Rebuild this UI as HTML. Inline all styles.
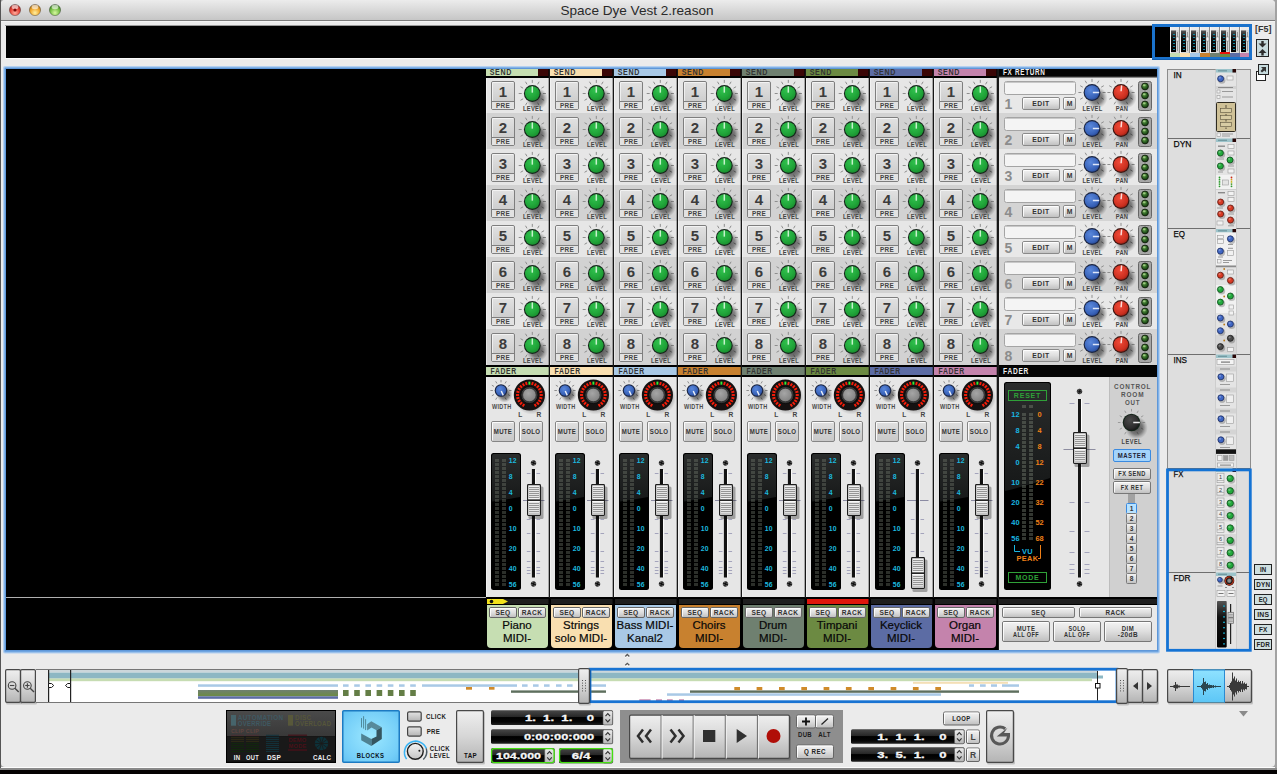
<!DOCTYPE html>
<html lang="en"><head><meta charset="utf-8"><title>Space Dye Vest 2.reason</title>
<style>html,body{margin:0;padding:0;background:#050202;overflow:hidden}svg{display:block}text{font-family:"Liberation Sans", sans-serif;}</style></head><body>
<svg width="1277" height="774" viewBox="0 0 1277 774">

<defs>
<linearGradient id="gTitle" x1="0" y1="0" x2="0" y2="1"><stop offset="0" stop-color="#ececec"/><stop offset="1" stop-color="#c6c6c6"/></linearGradient>
<linearGradient id="gBtn" x1="0" y1="0" x2="0" y2="1"><stop offset="0" stop-color="#f4f4f4"/><stop offset="1" stop-color="#c4c4c4"/></linearGradient>
<linearGradient id="gBtn3" x1="0" y1="0" x2="0" y2="1"><stop offset="0" stop-color="#e2e2e2"/><stop offset="0.7" stop-color="#cecece"/><stop offset="1" stop-color="#c8c8c8"/></linearGradient>
<linearGradient id="gBtn2" x1="0" y1="0" x2="0" y2="1"><stop offset="0" stop-color="#f4f4f4"/><stop offset="0.5" stop-color="#dedede"/><stop offset="1" stop-color="#bebebe"/></linearGradient>
<linearGradient id="gMeter" x1="0" y1="0" x2="0" y2="1"><stop offset="0" stop-color="#2a2c2c"/><stop offset="1" stop-color="#161818"/></linearGradient>
<linearGradient id="gMeterM" x1="0" y1="0" x2="0.25" y2="1"><stop offset="0" stop-color="#2c2c2c"/><stop offset="0.5" stop-color="#1a1a1a"/><stop offset="0.56" stop-color="#000"/><stop offset="1" stop-color="#000"/></linearGradient>
<linearGradient id="gCap" x1="0" y1="0" x2="0" y2="1"><stop offset="0" stop-color="#f8f8f8"/><stop offset="0.45" stop-color="#b8b8b8"/><stop offset="0.5" stop-color="#555"/><stop offset="0.55" stop-color="#f4f4f4"/><stop offset="1" stop-color="#a8a8a8"/></linearGradient>
<radialGradient id="gGreen" cx="0.38" cy="0.3" r="0.8"><stop offset="0" stop-color="#2fc04c"/><stop offset="0.6" stop-color="#21a63a"/><stop offset="1" stop-color="#178a2c"/></radialGradient>
<radialGradient id="gBlue" cx="0.4" cy="0.35" r="0.75"><stop offset="0" stop-color="#5a88dc"/><stop offset="0.7" stop-color="#3862b8"/><stop offset="1" stop-color="#23408a"/></radialGradient>
<radialGradient id="gRed" cx="0.4" cy="0.35" r="0.75"><stop offset="0" stop-color="#f04a38"/><stop offset="0.7" stop-color="#cc3020"/><stop offset="1" stop-color="#8e1c12"/></radialGradient>
<radialGradient id="gDark" cx="0.4" cy="0.35" r="0.75"><stop offset="0" stop-color="#4a4a4a"/><stop offset="0.7" stop-color="#2c2c2c"/><stop offset="1" stop-color="#111"/></radialGradient>
<radialGradient id="gGray" cx="0.42" cy="0.38" r="0.75"><stop offset="0" stop-color="#a6a6a6"/><stop offset="0.75" stop-color="#858585"/><stop offset="1" stop-color="#5a5a5a"/></radialGradient>
<radialGradient id="gShadow" cx="0.5" cy="0.5" r="0.5"><stop offset="0" stop-color="#000" stop-opacity="0.6"/><stop offset="0.55" stop-color="#000" stop-opacity="0.42"/><stop offset="0.8" stop-color="#000" stop-opacity="0.16"/><stop offset="1" stop-color="#000" stop-opacity="0"/></radialGradient>
<radialGradient id="gLed" cx="0.4" cy="0.35" r="0.7"><stop offset="0" stop-color="#6aa052"/><stop offset="0.55" stop-color="#2a6220"/><stop offset="1" stop-color="#10300c"/></radialGradient>
<radialGradient id="gTLr" cx="0.5" cy="0.75" r="0.7"><stop offset="0" stop-color="#ffb0a0"/><stop offset="0.6" stop-color="#e8453a"/><stop offset="1" stop-color="#a82018"/></radialGradient>
<radialGradient id="gTLy" cx="0.5" cy="0.75" r="0.7"><stop offset="0" stop-color="#fff0a0"/><stop offset="0.6" stop-color="#f0a830"/><stop offset="1" stop-color="#b07010"/></radialGradient>
<radialGradient id="gTLg" cx="0.5" cy="0.75" r="0.7"><stop offset="0" stop-color="#d8f8a0"/><stop offset="0.6" stop-color="#78c048"/><stop offset="1" stop-color="#3a8020"/></radialGradient>
<linearGradient id="gBlueBtn" x1="0" y1="0" x2="0" y2="1"><stop offset="0" stop-color="#8fdcff"/><stop offset="1" stop-color="#6ccaf8"/></linearGradient>
<pattern id="pRidge" x="0" y="1" width="2" height="2" patternUnits="userSpaceOnUse"><rect x="0" y="0" width="2" height="1" fill="#969696"/><rect x="0" y="1" width="2" height="1" fill="#e6e6e6"/></pattern>
<linearGradient id="gMini" x1="0" y1="0" x2="0" y2="1"><stop offset="0" stop-color="#555"/><stop offset="0.35" stop-color="#111"/><stop offset="1" stop-color="#000"/></linearGradient>
<g id="ts">
<rect x="0" y="0" width="10" height="26" fill="#d6d6d6"/>
<rect x="0" y="0" width="10" height="3" fill="#ececec"/>
<rect x="0" y="0" width="1" height="26" fill="#f8f8f8"/>
<rect x="9" y="0" width="1" height="26" fill="#8e8e8e"/>
<rect x="1" y="3.5" width="5" height="21.5" fill="url(#gMini)"/>
<rect x="3" y="7" width="2" height="1" fill="#158aa4"/>
<rect x="3" y="10" width="2" height="1" fill="#158aa4"/>
<rect x="3" y="13" width="2" height="1" fill="#158aa4"/>
<rect x="3" y="16" width="2" height="1" fill="#158aa4"/>
<rect x="3" y="19" width="2" height="1" fill="#158aa4"/>
<rect x="3" y="22" width="2" height="1" fill="#158aa4"/>
<rect x="7" y="5" width="1" height="19" fill="#9a9a9a"/>
<rect x="6" y="10" width="3" height="4" fill="#f4f4f4" stroke="#888" stroke-width="0.5"/>
</g>
<g id="kG">
<line x1="-5.30" y1="9.18" x2="-6.80" y2="11.78" stroke="#8e8e8e" stroke-width="1"/>
<line x1="-9.18" y1="5.30" x2="-11.78" y2="6.80" stroke="#8e8e8e" stroke-width="1"/>
<line x1="-10.60" y1="-0.00" x2="-13.60" y2="-0.00" stroke="#8e8e8e" stroke-width="1"/>
<line x1="-9.18" y1="-5.30" x2="-11.78" y2="-6.80" stroke="#8e8e8e" stroke-width="1"/>
<line x1="-5.30" y1="-9.18" x2="-6.80" y2="-11.78" stroke="#8e8e8e" stroke-width="1"/>
<line x1="0.00" y1="-10.60" x2="0.00" y2="-13.60" stroke="#8e8e8e" stroke-width="1"/>
<line x1="5.30" y1="-9.18" x2="6.80" y2="-11.78" stroke="#8e8e8e" stroke-width="1"/>
<line x1="9.18" y1="-5.30" x2="11.78" y2="-6.80" stroke="#8e8e8e" stroke-width="1"/>
<line x1="10.60" y1="-0.00" x2="13.60" y2="-0.00" stroke="#8e8e8e" stroke-width="1"/>
<line x1="9.18" y1="5.30" x2="11.78" y2="6.80" stroke="#8e8e8e" stroke-width="1"/>
<line x1="5.30" y1="9.18" x2="6.80" y2="11.78" stroke="#8e8e8e" stroke-width="1"/>
<circle cx="4.62" cy="5.21" r="10.92" fill="url(#gShadow)"/>
<circle cx="0" cy="0" r="8.4" fill="#15251a"/>
<circle cx="0" cy="0" r="7.30" fill="url(#gGreen)"/>
<line x1="0.00" y1="-0.84" x2="0.00" y2="-7.14" stroke="#d8f8dc" stroke-width="1.5" stroke-opacity="0.9"/>
</g>
<g id="kW">
<line x1="-4.05" y1="7.01" x2="-5.30" y2="9.18" stroke="#8e8e8e" stroke-width="1"/>
<line x1="-7.01" y1="4.05" x2="-9.18" y2="5.30" stroke="#8e8e8e" stroke-width="1"/>
<line x1="-8.10" y1="-0.00" x2="-10.60" y2="-0.00" stroke="#8e8e8e" stroke-width="1"/>
<line x1="-7.01" y1="-4.05" x2="-9.18" y2="-5.30" stroke="#8e8e8e" stroke-width="1"/>
<line x1="-4.05" y1="-7.01" x2="-5.30" y2="-9.18" stroke="#8e8e8e" stroke-width="1"/>
<line x1="0.00" y1="-8.10" x2="0.00" y2="-10.60" stroke="#8e8e8e" stroke-width="1"/>
<line x1="4.05" y1="-7.01" x2="5.30" y2="-9.18" stroke="#8e8e8e" stroke-width="1"/>
<line x1="7.01" y1="-4.05" x2="9.18" y2="-5.30" stroke="#8e8e8e" stroke-width="1"/>
<line x1="8.10" y1="-0.00" x2="10.60" y2="-0.00" stroke="#8e8e8e" stroke-width="1"/>
<line x1="7.01" y1="4.05" x2="9.18" y2="5.30" stroke="#8e8e8e" stroke-width="1"/>
<line x1="4.05" y1="7.01" x2="5.30" y2="9.18" stroke="#8e8e8e" stroke-width="1"/>
<circle cx="3.47" cy="3.91" r="8.19" fill="url(#gShadow)"/>
<circle cx="0" cy="0" r="6.3" fill="#1a2440"/>
<circle cx="0" cy="0" r="5.20" fill="url(#gBlue)"/>
<line x1="0.27" y1="0.57" x2="2.26" y2="4.85" stroke="#fff" stroke-width="1.4" stroke-opacity="0.9"/>
</g>
<g id="cap">
<rect x="1.5" y="2.5" width="15" height="32.5" fill="#000" fill-opacity="0.3" rx="1.5"/>
<rect x="0.6" y="0.6" width="12.8" height="30.8" rx="0.8" fill="#f2f2f2" stroke="#1e1e1e" stroke-width="1.2"/>
<rect x="2" y="3" width="10" height="11.5" fill="url(#pRidge)"/>
<rect x="2" y="18" width="10" height="11" fill="url(#pRidge)"/>
<rect x="1.2" y="14.5" width="11.6" height="3.3" fill="#fbfbfb"/>
<rect x="1" y="15.4" width="12" height="1.5" fill="#0e0e0e"/>
<rect x="1.2" y="28.8" width="11.6" height="2" fill="#c4c4c4"/>
</g>
<g id="scr">
<circle cx="0" cy="0" r="2.4" fill="#6a6a6a" stroke="#333" stroke-width="0.7"/>
<path d="M-2.4 0H2.4M0 -2.4V2.4" stroke="#0c0c0c" stroke-width="1.1" transform="rotate(20 0 0)"/>
</g>
<g id="nb">
<rect x="0.5" y="0.5" width="23" height="28" rx="1.5" fill="url(#gBtn3)" stroke="#7e7e7e"/>
<path d="M1.5 27.5V1.5H22.5" fill="none" stroke="#fff" stroke-opacity="0.6"/>
<rect x="1" y="21" width="22" height="7" fill="#e2e2e2"/>
<line x1="1" y1="20.5" x2="23" y2="20.5" stroke="#7e7e7e"/>
</g>
<g id="pan">
<ellipse cx="2" cy="3" rx="16.5" ry="16.5" fill="url(#gShadow)"/>
<circle cx="0" cy="0" r="15.6" fill="#151111"/>
<line x1="-5.15" y1="8.92" x2="-6.70" y2="11.60" stroke="#f51e0a" stroke-width="1.9"/>
<line x1="-7.28" y1="7.28" x2="-9.48" y2="9.48" stroke="#f51e0a" stroke-width="1.9"/>
<line x1="-8.92" y1="5.15" x2="-11.60" y2="6.70" stroke="#f51e0a" stroke-width="1.9"/>
<line x1="-9.95" y1="2.67" x2="-12.94" y2="3.47" stroke="#f51e0a" stroke-width="1.9"/>
<line x1="-10.30" y1="-0.00" x2="-13.40" y2="-0.00" stroke="#f51e0a" stroke-width="1.9"/>
<line x1="-9.95" y1="-2.67" x2="-12.94" y2="-3.47" stroke="#f51e0a" stroke-width="1.9"/>
<line x1="-8.92" y1="-5.15" x2="-11.60" y2="-6.70" stroke="#f51e0a" stroke-width="1.9"/>
<line x1="-7.28" y1="-7.28" x2="-9.48" y2="-9.48" stroke="#f51e0a" stroke-width="1.9"/>
<line x1="-5.15" y1="-8.92" x2="-6.70" y2="-11.60" stroke="#f51e0a" stroke-width="1.9"/>
<line x1="-2.67" y1="-9.95" x2="-3.47" y2="-12.94" stroke="#f51e0a" stroke-width="1.9"/>
<line x1="0.00" y1="-10.30" x2="0.00" y2="-13.40" stroke="#34ee38" stroke-width="1.9"/>
<line x1="2.67" y1="-9.95" x2="3.47" y2="-12.94" stroke="#f51e0a" stroke-width="1.9"/>
<line x1="5.15" y1="-8.92" x2="6.70" y2="-11.60" stroke="#f51e0a" stroke-width="1.9"/>
<line x1="7.28" y1="-7.28" x2="9.48" y2="-9.48" stroke="#f51e0a" stroke-width="1.9"/>
<line x1="8.92" y1="-5.15" x2="11.60" y2="-6.70" stroke="#f51e0a" stroke-width="1.9"/>
<line x1="9.95" y1="-2.67" x2="12.94" y2="-3.47" stroke="#f51e0a" stroke-width="1.9"/>
<line x1="10.30" y1="-0.00" x2="13.40" y2="-0.00" stroke="#f51e0a" stroke-width="1.9"/>
<line x1="9.95" y1="2.67" x2="12.94" y2="3.47" stroke="#f51e0a" stroke-width="1.9"/>
<line x1="8.92" y1="5.15" x2="11.60" y2="6.70" stroke="#f51e0a" stroke-width="1.9"/>
<line x1="7.28" y1="7.28" x2="9.48" y2="9.48" stroke="#f51e0a" stroke-width="1.9"/>
<line x1="5.15" y1="8.92" x2="6.70" y2="11.60" stroke="#f51e0a" stroke-width="1.9"/>
<circle cx="0" cy="0" r="8.6" fill="#3a3a3a" stroke="#0a0a0a" stroke-width="0.9"/>
<circle cx="0" cy="0" r="6.8" fill="url(#gGray)" stroke="#2a2a2a" stroke-width="0.7"/>
</g>
<g id="mtr">
<rect x="0" y="0" width="30" height="137" rx="2.5" fill="#000"/>
<path d="M1 3Q1 1 3 1H27Q29 1 29 3V44Q16 46.500 1 48.500Z" fill="url(#gMeter)"/>
<rect x="4" y="6" width="11" height="127" fill="url(#pLed)"/>
</g>
<g id="ftk">
<line x1="-6.7" y1="473.5" x2="-3" y2="473.5" stroke="#a4a4bc" stroke-width="1" />
<line x1="3" y1="473.5" x2="6.6" y2="473.5" stroke="#a4a4bc" stroke-width="1" />
<line x1="-10.5" y1="500.5" x2="11" y2="500.5" stroke="#8a8aa2" stroke-width="1" />
<line x1="-6.7" y1="519.5" x2="-3" y2="519.5" stroke="#a4a4bc" stroke-width="1" />
<line x1="3" y1="519.5" x2="6.6" y2="519.5" stroke="#a4a4bc" stroke-width="1" />
<line x1="-6.7" y1="533.5" x2="-3" y2="533.5" stroke="#a4a4bc" stroke-width="1" />
<line x1="3" y1="533.5" x2="6.6" y2="533.5" stroke="#a4a4bc" stroke-width="1" />
<line x1="-6.7" y1="551.5" x2="-3" y2="551.5" stroke="#a4a4bc" stroke-width="1" />
<line x1="3" y1="551.5" x2="6.6" y2="551.5" stroke="#a4a4bc" stroke-width="1" />
<line x1="-6.7" y1="561.5" x2="-3" y2="561.5" stroke="#a4a4bc" stroke-width="1" />
<line x1="3" y1="561.5" x2="6.6" y2="561.5" stroke="#a4a4bc" stroke-width="1" />
<line x1="-6.7" y1="567.5" x2="-3" y2="567.5" stroke="#a4a4bc" stroke-width="1" />
<line x1="3" y1="567.5" x2="6.6" y2="567.5" stroke="#a4a4bc" stroke-width="1" />
<line x1="-6.7" y1="570.5" x2="-3" y2="570.5" stroke="#a4a4bc" stroke-width="1" />
<line x1="3" y1="570.5" x2="6.6" y2="570.5" stroke="#a4a4bc" stroke-width="1" />
<line x1="-6.7" y1="573.5" x2="-3" y2="573.5" stroke="#a4a4bc" stroke-width="1" />
<line x1="3" y1="573.5" x2="6.6" y2="573.5" stroke="#a4a4bc" stroke-width="1" />
<rect x="-1.6" y="469" width="3.2" height="108.5" fill="#121212"/>
<rect x="1.6" y="469.5" width="0.9" height="108" fill="#fff"/>
</g>
<pattern id="pLed" x="4" y="2" width="7" height="4" patternUnits="userSpaceOnUse"><rect x="0" y="0" width="4" height="3" fill="#7a8274" fill-opacity="0.36"/></pattern>
<g id="kB">
<line x1="-5.30" y1="9.18" x2="-6.80" y2="11.78" stroke="#8e8e8e" stroke-width="1"/>
<line x1="-9.18" y1="5.30" x2="-11.78" y2="6.80" stroke="#8e8e8e" stroke-width="1"/>
<line x1="-10.60" y1="-0.00" x2="-13.60" y2="-0.00" stroke="#8e8e8e" stroke-width="1"/>
<line x1="-9.18" y1="-5.30" x2="-11.78" y2="-6.80" stroke="#8e8e8e" stroke-width="1"/>
<line x1="-5.30" y1="-9.18" x2="-6.80" y2="-11.78" stroke="#8e8e8e" stroke-width="1"/>
<line x1="0.00" y1="-10.60" x2="0.00" y2="-13.60" stroke="#8e8e8e" stroke-width="1"/>
<line x1="5.30" y1="-9.18" x2="6.80" y2="-11.78" stroke="#8e8e8e" stroke-width="1"/>
<line x1="9.18" y1="-5.30" x2="11.78" y2="-6.80" stroke="#8e8e8e" stroke-width="1"/>
<line x1="10.60" y1="-0.00" x2="13.60" y2="-0.00" stroke="#8e8e8e" stroke-width="1"/>
<line x1="9.18" y1="5.30" x2="11.78" y2="6.80" stroke="#8e8e8e" stroke-width="1"/>
<line x1="5.30" y1="9.18" x2="6.80" y2="11.78" stroke="#8e8e8e" stroke-width="1"/>
<circle cx="4.62" cy="5.21" r="10.92" fill="url(#gShadow)"/>
<circle cx="0" cy="0" r="8.4" fill="#1a2440"/>
<circle cx="0" cy="0" r="7.30" fill="url(#gBlue)"/>
<line x1="0.84" y1="-0.00" x2="7.14" y2="-0.00" stroke="#f0f4ff" stroke-width="1.5" stroke-opacity="0.9"/>
</g>
<g id="kR">
<line x1="-5.30" y1="9.18" x2="-6.80" y2="11.78" stroke="#8e8e8e" stroke-width="1"/>
<line x1="-9.18" y1="5.30" x2="-11.78" y2="6.80" stroke="#8e8e8e" stroke-width="1"/>
<line x1="-10.60" y1="-0.00" x2="-13.60" y2="-0.00" stroke="#8e8e8e" stroke-width="1"/>
<line x1="-9.18" y1="-5.30" x2="-11.78" y2="-6.80" stroke="#8e8e8e" stroke-width="1"/>
<line x1="-5.30" y1="-9.18" x2="-6.80" y2="-11.78" stroke="#8e8e8e" stroke-width="1"/>
<line x1="0.00" y1="-10.60" x2="0.00" y2="-13.60" stroke="#8e8e8e" stroke-width="1"/>
<line x1="5.30" y1="-9.18" x2="6.80" y2="-11.78" stroke="#8e8e8e" stroke-width="1"/>
<line x1="9.18" y1="-5.30" x2="11.78" y2="-6.80" stroke="#8e8e8e" stroke-width="1"/>
<line x1="10.60" y1="-0.00" x2="13.60" y2="-0.00" stroke="#8e8e8e" stroke-width="1"/>
<line x1="9.18" y1="5.30" x2="11.78" y2="6.80" stroke="#8e8e8e" stroke-width="1"/>
<line x1="5.30" y1="9.18" x2="6.80" y2="11.78" stroke="#8e8e8e" stroke-width="1"/>
<circle cx="4.62" cy="5.21" r="10.92" fill="url(#gShadow)"/>
<circle cx="0" cy="0" r="8.4" fill="#3a1612"/>
<circle cx="0" cy="0" r="7.30" fill="url(#gRed)"/>
<line x1="0.11" y1="-1.26" x2="0.62" y2="-7.11" stroke="#fff0ee" stroke-width="1.5" stroke-opacity="0.9"/>
</g>
<g id="led3">
<rect x="0.5" y="0.5" width="13" height="29" rx="2" fill="#a6a6a6" stroke="#666"/>
<circle cx="7" cy="5.5" r="3.4" fill="url(#gLed)" stroke="#14200e" stroke-width="0.9"/>
<ellipse cx="6.2" cy="4.3" rx="1.5" ry="1" fill="#c8f0a8" fill-opacity="0.55"/>
<circle cx="7" cy="14.5" r="3.4" fill="url(#gLed)" stroke="#14200e" stroke-width="0.9"/>
<ellipse cx="6.2" cy="13.3" rx="1.5" ry="1" fill="#c8f0a8" fill-opacity="0.55"/>
<circle cx="7" cy="23.5" r="3.4" fill="url(#gLed)" stroke="#14200e" stroke-width="0.9"/>
<ellipse cx="6.2" cy="22.3" rx="1.5" ry="1" fill="#c8f0a8" fill-opacity="0.55"/>
</g>
<pattern id="pLedM" x="1022" y="413" width="7" height="4" patternUnits="userSpaceOnUse"><rect x="0" y="0" width="4" height="3" fill="#7a8274" fill-opacity="0.42"/></pattern>
<linearGradient id="gTall" x1="0" y1="0" x2="0" y2="1"><stop offset="0" stop-color="#efefef"/><stop offset="0.5" stop-color="#d6d6d6"/><stop offset="1" stop-color="#b4b4b4"/></linearGradient>
<linearGradient id="gDisp" x1="0" y1="0" x2="0" y2="1"><stop offset="0" stop-color="#484848"/><stop offset="0.46" stop-color="#262626"/><stop offset="0.5" stop-color="#000"/><stop offset="0.8" stop-color="#060606"/><stop offset="1" stop-color="#222"/></linearGradient>
<linearGradient id="gCyan" x1="0" y1="0" x2="0" y2="1"><stop offset="0" stop-color="#8fe2ff"/><stop offset="1" stop-color="#5cc6f6"/></linearGradient>
<linearGradient id="gOlive" x1="0" y1="0" x2="0" y2="1"><stop offset="0" stop-color="#6f8070"/><stop offset="1" stop-color="#6c8a42"/></linearGradient>
<linearGradient id="gDsp" x1="0" y1="0" x2="0" y2="1"><stop offset="0" stop-color="#4a4a4a"/><stop offset="1" stop-color="#383838"/></linearGradient>
<radialGradient id="gBlk" cx="0.5" cy="0.5" r="0.75"><stop offset="0" stop-color="#9ce8ff"/><stop offset="0.7" stop-color="#74cef8"/><stop offset="1" stop-color="#5cbcf0"/></radialGradient>
<linearGradient id="gChk" x1="0" y1="0" x2="0" y2="1"><stop offset="0" stop-color="#e4e4e4"/><stop offset="1" stop-color="#b4b4b4"/></linearGradient>
<linearGradient id="gStep" x1="0" y1="0" x2="0" y2="1"><stop offset="0" stop-color="#ececec"/><stop offset="1" stop-color="#b6b6b6"/></linearGradient></defs>

<rect x="0" y="0" width="1277" height="774" fill="#050202"/>
<rect x="0" y="0" width="1277" height="770" fill="#a2a2a2"/>
<rect x="0" y="0" width="1" height="770" fill="#555"/>
<path d="M1 4Q1 0 5 0H1271Q1275 0 1275 4V763Q1275 767 1271 767H5Q1 767 1 763Z" fill="#ebebeb"/>
<rect x="1" y="767" width="1274" height="1" fill="#fdfdfd"/>
<rect x="0" y="768" width="1277" height="2" fill="#8a8a8a"/>
<path d="M1 4Q1 0 5 0H1271Q1275 0 1275 4V20H1Z" fill="url(#gTitle)"/>
<rect x="1" y="20" width="1274" height="1" fill="#7c7c7c"/>
<rect x="1" y="21" width="1274" height="1" fill="#f4f4f4"/>
<circle cx="15" cy="10" r="5.6" fill="url(#gTLr)" stroke="#00000055" stroke-width="0.9"/>
<ellipse cx="15" cy="7" rx="3.4" ry="2.2" fill="#fff" fill-opacity="0.6"/>
<circle cx="35" cy="10" r="5.6" fill="url(#gTLy)" stroke="#00000055" stroke-width="0.9"/>
<ellipse cx="35" cy="7" rx="3.4" ry="2.2" fill="#fff" fill-opacity="0.6"/>
<circle cx="55" cy="10" r="5.6" fill="url(#gTLg)" stroke="#00000055" stroke-width="0.9"/>
<ellipse cx="55" cy="7" rx="3.4" ry="2.2" fill="#fff" fill-opacity="0.6"/>
<circle cx="15" cy="10" r="1.6" fill="#7a0a08"/>
<text x="637" y="15" font-size="13" fill="#2a2a2a" text-anchor="middle" textLength="153" lengthAdjust="spacingAndGlyphs">Space Dye Vest 2.reason</text>
<rect x="6" y="26" width="1146" height="32" fill="#000"/>
<rect x="5" y="25" width="1148" height="1" fill="#9a9a9a"/>
<rect x="5" y="58" width="1148" height="1" fill="#fafafa"/>
<rect x="1152" y="24" width="100" height="36" fill="#1a72cc"/>
<rect x="1152" y="59" width="100" height="1" fill="#1560b0"/>
<rect x="1155" y="27" width="94" height="30" fill="#000"/>
<use href="#ts" x="1170" y="27"/>
<rect x="1170" y="53" width="10" height="4" fill="#c6deb2"/>
<use href="#ts" x="1180" y="27"/>
<rect x="1180" y="53" width="10" height="4" fill="#f9dfb0"/>
<use href="#ts" x="1190" y="27"/>
<rect x="1190" y="53" width="10" height="4" fill="#a9c9e6"/>
<use href="#ts" x="1200" y="27"/>
<rect x="1200" y="53" width="10" height="4" fill="#c8812f"/>
<use href="#ts" x="1210" y="27"/>
<rect x="1210" y="53" width="10" height="4" fill="#6f8070"/>
<use href="#ts" x="1220" y="27"/>
<rect x="1220" y="53" width="10" height="4" fill="#6c8a42"/>
<use href="#ts" x="1230" y="27"/>
<rect x="1230" y="53" width="10" height="4" fill="#5c6ca4"/>
<use href="#ts" x="1240" y="27"/>
<rect x="1240" y="53" width="9" height="4" fill="#c483ac"/>
<rect x="1220" y="52" width="10" height="2" fill="#e8140a"/>
<rect x="1249" y="27" width="3" height="30" fill="#1a72cc"/>
<text x="1263.2" y="32.2" font-size="9.6" fill="#333" text-anchor="middle" font-weight="bold" letter-spacing="0" textLength="16.5" lengthAdjust="spacingAndGlyphs">[F5]</text>
<rect x="1256.5" y="39.5" width="12" height="17" fill="#c6dadd" stroke="#222"/>
<path d="M1261.300 41V43.500H1258.500L1262.500 47.500L1266.500 43.500H1263.700V41Z" fill="#2c2c2c"/>
<path d="M1261.300 55.500V53H1258.500L1262.500 49L1266.500 53H1263.700V55.500Z" fill="#2c2c2c"/>
<rect x="1256.5" y="71.500" width="9" height="9" fill="#fff" stroke="#222"/>
<rect x="1258.500" y="64.500" width="10" height="10" fill="#c6dadd" stroke="#222"/>
<path d="M1261 67H1266V72L1264.400 70.400L1262 72.500L1260.500 71L1262.700 68.700Z" fill="#333"/>
<rect x="3" y="66" width="1157" height="587.500" rx="2" fill="#b4d0f0"/>
<rect x="4" y="67" width="1155" height="585.500" rx="1.5" fill="#82b2e6"/>
<rect x="5" y="68" width="1153" height="583.5" fill="#5e97d9"/>
<rect x="6" y="69" width="1151" height="581" fill="#000"/>
<rect x="6" y="597" width="480" height="1" fill="#b0b0b0"/>
<rect x="486" y="69" width="63" height="7" fill="#c6deb2"/>
<rect x="538" y="69" width="10" height="7" fill="#3a0606"/>
<rect x="548" y="69" width="1" height="7" fill="#1a0000"/>
<text x="489.7" y="75.1" font-size="8.2" fill="#333" font-weight="bold" letter-spacing="0.8" textLength="22.5" lengthAdjust="spacingAndGlyphs">SEND</text>
<rect x="486" y="77" width="63" height="36" fill="#e6e6e6"/>
<use href="#nb" x="491" y="81"/>
<text x="502.8" y="97" font-size="15" fill="#3c3c3c" text-anchor="middle" font-weight="bold">1</text>
<text x="503" y="107.9" font-size="6.6" fill="#444" text-anchor="middle" font-weight="bold" letter-spacing="0.3" textLength="14" lengthAdjust="spacingAndGlyphs">PRE</text>
<use href="#kG" x="532.3" y="93.5"/>
<text x="533" y="110.8" font-size="6.8" fill="#444" text-anchor="middle" font-weight="bold" letter-spacing="0.3" textLength="20" lengthAdjust="spacingAndGlyphs">LEVEL</text>
<rect x="486" y="113" width="63" height="36" fill="#d2d2d2"/>
<use href="#nb" x="491" y="117"/>
<text x="502.8" y="133" font-size="15" fill="#3c3c3c" text-anchor="middle" font-weight="bold">2</text>
<text x="503" y="143.9" font-size="6.6" fill="#444" text-anchor="middle" font-weight="bold" letter-spacing="0.3" textLength="14" lengthAdjust="spacingAndGlyphs">PRE</text>
<use href="#kG" x="532.3" y="129.5"/>
<text x="533" y="146.8" font-size="6.8" fill="#444" text-anchor="middle" font-weight="bold" letter-spacing="0.3" textLength="20" lengthAdjust="spacingAndGlyphs">LEVEL</text>
<rect x="486" y="149" width="63" height="36" fill="#e6e6e6"/>
<use href="#nb" x="491" y="153"/>
<text x="502.8" y="169" font-size="15" fill="#3c3c3c" text-anchor="middle" font-weight="bold">3</text>
<text x="503" y="179.9" font-size="6.6" fill="#444" text-anchor="middle" font-weight="bold" letter-spacing="0.3" textLength="14" lengthAdjust="spacingAndGlyphs">PRE</text>
<use href="#kG" x="532.3" y="165.5"/>
<text x="533" y="182.8" font-size="6.8" fill="#444" text-anchor="middle" font-weight="bold" letter-spacing="0.3" textLength="20" lengthAdjust="spacingAndGlyphs">LEVEL</text>
<rect x="486" y="185" width="63" height="36" fill="#d2d2d2"/>
<use href="#nb" x="491" y="189"/>
<text x="502.8" y="205" font-size="15" fill="#3c3c3c" text-anchor="middle" font-weight="bold">4</text>
<text x="503" y="215.9" font-size="6.6" fill="#444" text-anchor="middle" font-weight="bold" letter-spacing="0.3" textLength="14" lengthAdjust="spacingAndGlyphs">PRE</text>
<use href="#kG" x="532.3" y="201.5"/>
<text x="533" y="218.8" font-size="6.8" fill="#444" text-anchor="middle" font-weight="bold" letter-spacing="0.3" textLength="20" lengthAdjust="spacingAndGlyphs">LEVEL</text>
<rect x="486" y="221" width="63" height="36" fill="#e6e6e6"/>
<use href="#nb" x="491" y="225"/>
<text x="502.8" y="241" font-size="15" fill="#3c3c3c" text-anchor="middle" font-weight="bold">5</text>
<text x="503" y="251.9" font-size="6.6" fill="#444" text-anchor="middle" font-weight="bold" letter-spacing="0.3" textLength="14" lengthAdjust="spacingAndGlyphs">PRE</text>
<use href="#kG" x="532.3" y="237.5"/>
<text x="533" y="254.8" font-size="6.8" fill="#444" text-anchor="middle" font-weight="bold" letter-spacing="0.3" textLength="20" lengthAdjust="spacingAndGlyphs">LEVEL</text>
<rect x="486" y="257" width="63" height="36" fill="#d2d2d2"/>
<use href="#nb" x="491" y="261"/>
<text x="502.8" y="277" font-size="15" fill="#3c3c3c" text-anchor="middle" font-weight="bold">6</text>
<text x="503" y="287.9" font-size="6.6" fill="#444" text-anchor="middle" font-weight="bold" letter-spacing="0.3" textLength="14" lengthAdjust="spacingAndGlyphs">PRE</text>
<use href="#kG" x="532.3" y="273.5"/>
<text x="533" y="290.8" font-size="6.8" fill="#444" text-anchor="middle" font-weight="bold" letter-spacing="0.3" textLength="20" lengthAdjust="spacingAndGlyphs">LEVEL</text>
<rect x="486" y="293" width="63" height="36" fill="#e6e6e6"/>
<use href="#nb" x="491" y="297"/>
<text x="502.8" y="313" font-size="15" fill="#3c3c3c" text-anchor="middle" font-weight="bold">7</text>
<text x="503" y="323.9" font-size="6.6" fill="#444" text-anchor="middle" font-weight="bold" letter-spacing="0.3" textLength="14" lengthAdjust="spacingAndGlyphs">PRE</text>
<use href="#kG" x="532.3" y="309.5"/>
<text x="533" y="326.8" font-size="6.8" fill="#444" text-anchor="middle" font-weight="bold" letter-spacing="0.3" textLength="20" lengthAdjust="spacingAndGlyphs">LEVEL</text>
<rect x="486" y="329" width="63" height="36" fill="#d2d2d2"/>
<use href="#nb" x="491" y="333"/>
<text x="502.8" y="349" font-size="15" fill="#3c3c3c" text-anchor="middle" font-weight="bold">8</text>
<text x="503" y="359.9" font-size="6.6" fill="#444" text-anchor="middle" font-weight="bold" letter-spacing="0.3" textLength="14" lengthAdjust="spacingAndGlyphs">PRE</text>
<use href="#kG" x="532.3" y="345.5"/>
<text x="533" y="362.8" font-size="6.8" fill="#444" text-anchor="middle" font-weight="bold" letter-spacing="0.3" textLength="20" lengthAdjust="spacingAndGlyphs">LEVEL</text>
<rect x="486" y="76" width="63" height="2" fill="#000"/>
<rect x="486" y="365" width="63" height="2" fill="#000"/>
<rect x="486" y="367" width="63" height="8" fill="#c6deb2"/>
<text x="490.5" y="374.1" font-size="8.3" fill="#333" font-weight="bold" letter-spacing="0.8" textLength="26.4" lengthAdjust="spacingAndGlyphs">FADER</text>
<rect x="486" y="377" width="63" height="220" fill="#e6e6e6"/>
<use href="#kW" x="501" y="390.5"/>
<text x="501.7" y="409" font-size="6.6" fill="#4a4a4a" text-anchor="middle" font-weight="bold" letter-spacing="0.3" textLength="19.4" lengthAdjust="spacingAndGlyphs">WIDTH</text>
<use href="#pan" x="529.4" y="395"/>
<text x="520.3" y="416.7" font-size="6.6" fill="#444" text-anchor="middle" font-weight="bold">L</text>
<text x="539" y="416.7" font-size="6.6" fill="#444" text-anchor="middle" font-weight="bold">R</text>
<rect x="491.5" y="421.5" width="23" height="20" rx="1.5" fill="url(#gBtn3)" stroke="#858585"/>
<path d="M492.5 440.5V422.5H513.5" fill="none" stroke="#fff" stroke-opacity="0.85"/>
<text x="503.0" y="433.95" font-size="6.8" fill="#333" text-anchor="middle" font-weight="bold" letter-spacing="0.3" textLength="18.3" lengthAdjust="spacingAndGlyphs">MUTE</text>
<rect x="519.5" y="421.5" width="23" height="20" rx="1.5" fill="url(#gBtn3)" stroke="#858585"/>
<path d="M520.5 440.5V422.5H541.5" fill="none" stroke="#fff" stroke-opacity="0.85"/>
<text x="531.0" y="433.95" font-size="6.8" fill="#333" text-anchor="middle" font-weight="bold" letter-spacing="0.3" textLength="18.3" lengthAdjust="spacingAndGlyphs">SOLO</text>
<use href="#mtr" x="491" y="453"/>
<text x="508.7" y="463.0" font-size="6.9" fill="#1cb8de" font-weight="bold" letter-spacing="0.2">12</text>
<text x="508.7" y="479.0" font-size="6.9" fill="#1cb8de" font-weight="bold" letter-spacing="0.2">8</text>
<text x="508.7" y="495.0" font-size="6.9" fill="#1cb8de" font-weight="bold" letter-spacing="0.2">4</text>
<text x="508.7" y="511.2" font-size="6.9" fill="#1cb8de" font-weight="bold" letter-spacing="0.2">0</text>
<text x="508.7" y="530.8" font-size="6.9" fill="#1cb8de" font-weight="bold" letter-spacing="0.2">10</text>
<text x="508.7" y="551.3" font-size="6.9" fill="#1cb8de" font-weight="bold" letter-spacing="0.2">20</text>
<text x="508.7" y="571.1" font-size="6.9" fill="#1cb8de" font-weight="bold" letter-spacing="0.2">40</text>
<text x="508.7" y="587.0" font-size="6.9" fill="#1cb8de" font-weight="bold" letter-spacing="0.2">56</text>
<use href="#ftk" x="533.5" y="0"/>
<use href="#scr" x="533.5" y="463"/>
<use href="#scr" x="533.5" y="584"/>
<use href="#cap" x="527" y="484"/>
<rect x="487" y="599" width="61.5" height="5" fill="#1e1e1e"/>
<path d="M487 605H548V644Q548 648 544 648H491Q487 648 487 644Z" fill="#c6deb2"/>
<rect x="489.5" y="607.5" width="27" height="10" rx="1.5" fill="url(#gBtn2)" stroke="#666"/>
<path d="M490.5 616.5V608.5H515.5" fill="none" stroke="#fff" stroke-opacity="0.85"/>
<text x="503.0" y="614.88" font-size="6.6" fill="#333" text-anchor="middle" font-weight="bold" letter-spacing="0.4">SEQ</text>
<rect x="518.5" y="607.5" width="27" height="10" rx="1.5" fill="url(#gBtn2)" stroke="#666"/>
<path d="M519.5 616.5V608.5H544.5" fill="none" stroke="#fff" stroke-opacity="0.85"/>
<text x="532.0" y="614.88" font-size="6.6" fill="#333" text-anchor="middle" font-weight="bold" letter-spacing="0.4">RACK</text>
<text x="517" y="629.4" font-size="11.5" fill="#080808" text-anchor="middle" stroke="#080808" stroke-width="0.2">Piano</text>
<text x="517" y="642.2" font-size="11.5" fill="#080808" text-anchor="middle" stroke="#080808" stroke-width="0.2">MIDI-</text>
<rect x="548.7" y="69" width="1.3" height="529" fill="#161616"/>
<rect x="486" y="78" width="0.8" height="287" fill="#fff" fill-opacity="0.55"/>
<rect x="486" y="377" width="0.8" height="220" fill="#fff" fill-opacity="0.55"/>
<rect x="550" y="69" width="63" height="7" fill="#f9dfb0"/>
<rect x="602" y="69" width="10" height="7" fill="#3a0606"/>
<rect x="612" y="69" width="1" height="7" fill="#1a0000"/>
<text x="553.7" y="75.1" font-size="8.2" fill="#333" font-weight="bold" letter-spacing="0.8" textLength="22.5" lengthAdjust="spacingAndGlyphs">SEND</text>
<rect x="550" y="77" width="63" height="36" fill="#e6e6e6"/>
<use href="#nb" x="555" y="81"/>
<text x="566.8" y="97" font-size="15" fill="#3c3c3c" text-anchor="middle" font-weight="bold">1</text>
<text x="567" y="107.9" font-size="6.6" fill="#444" text-anchor="middle" font-weight="bold" letter-spacing="0.3" textLength="14" lengthAdjust="spacingAndGlyphs">PRE</text>
<use href="#kG" x="596.3" y="93.5"/>
<text x="597" y="110.8" font-size="6.8" fill="#444" text-anchor="middle" font-weight="bold" letter-spacing="0.3" textLength="20" lengthAdjust="spacingAndGlyphs">LEVEL</text>
<rect x="550" y="113" width="63" height="36" fill="#d2d2d2"/>
<use href="#nb" x="555" y="117"/>
<text x="566.8" y="133" font-size="15" fill="#3c3c3c" text-anchor="middle" font-weight="bold">2</text>
<text x="567" y="143.9" font-size="6.6" fill="#444" text-anchor="middle" font-weight="bold" letter-spacing="0.3" textLength="14" lengthAdjust="spacingAndGlyphs">PRE</text>
<use href="#kG" x="596.3" y="129.5"/>
<text x="597" y="146.8" font-size="6.8" fill="#444" text-anchor="middle" font-weight="bold" letter-spacing="0.3" textLength="20" lengthAdjust="spacingAndGlyphs">LEVEL</text>
<rect x="550" y="149" width="63" height="36" fill="#e6e6e6"/>
<use href="#nb" x="555" y="153"/>
<text x="566.8" y="169" font-size="15" fill="#3c3c3c" text-anchor="middle" font-weight="bold">3</text>
<text x="567" y="179.9" font-size="6.6" fill="#444" text-anchor="middle" font-weight="bold" letter-spacing="0.3" textLength="14" lengthAdjust="spacingAndGlyphs">PRE</text>
<use href="#kG" x="596.3" y="165.5"/>
<text x="597" y="182.8" font-size="6.8" fill="#444" text-anchor="middle" font-weight="bold" letter-spacing="0.3" textLength="20" lengthAdjust="spacingAndGlyphs">LEVEL</text>
<rect x="550" y="185" width="63" height="36" fill="#d2d2d2"/>
<use href="#nb" x="555" y="189"/>
<text x="566.8" y="205" font-size="15" fill="#3c3c3c" text-anchor="middle" font-weight="bold">4</text>
<text x="567" y="215.9" font-size="6.6" fill="#444" text-anchor="middle" font-weight="bold" letter-spacing="0.3" textLength="14" lengthAdjust="spacingAndGlyphs">PRE</text>
<use href="#kG" x="596.3" y="201.5"/>
<text x="597" y="218.8" font-size="6.8" fill="#444" text-anchor="middle" font-weight="bold" letter-spacing="0.3" textLength="20" lengthAdjust="spacingAndGlyphs">LEVEL</text>
<rect x="550" y="221" width="63" height="36" fill="#e6e6e6"/>
<use href="#nb" x="555" y="225"/>
<text x="566.8" y="241" font-size="15" fill="#3c3c3c" text-anchor="middle" font-weight="bold">5</text>
<text x="567" y="251.9" font-size="6.6" fill="#444" text-anchor="middle" font-weight="bold" letter-spacing="0.3" textLength="14" lengthAdjust="spacingAndGlyphs">PRE</text>
<use href="#kG" x="596.3" y="237.5"/>
<text x="597" y="254.8" font-size="6.8" fill="#444" text-anchor="middle" font-weight="bold" letter-spacing="0.3" textLength="20" lengthAdjust="spacingAndGlyphs">LEVEL</text>
<rect x="550" y="257" width="63" height="36" fill="#d2d2d2"/>
<use href="#nb" x="555" y="261"/>
<text x="566.8" y="277" font-size="15" fill="#3c3c3c" text-anchor="middle" font-weight="bold">6</text>
<text x="567" y="287.9" font-size="6.6" fill="#444" text-anchor="middle" font-weight="bold" letter-spacing="0.3" textLength="14" lengthAdjust="spacingAndGlyphs">PRE</text>
<use href="#kG" x="596.3" y="273.5"/>
<text x="597" y="290.8" font-size="6.8" fill="#444" text-anchor="middle" font-weight="bold" letter-spacing="0.3" textLength="20" lengthAdjust="spacingAndGlyphs">LEVEL</text>
<rect x="550" y="293" width="63" height="36" fill="#e6e6e6"/>
<use href="#nb" x="555" y="297"/>
<text x="566.8" y="313" font-size="15" fill="#3c3c3c" text-anchor="middle" font-weight="bold">7</text>
<text x="567" y="323.9" font-size="6.6" fill="#444" text-anchor="middle" font-weight="bold" letter-spacing="0.3" textLength="14" lengthAdjust="spacingAndGlyphs">PRE</text>
<use href="#kG" x="596.3" y="309.5"/>
<text x="597" y="326.8" font-size="6.8" fill="#444" text-anchor="middle" font-weight="bold" letter-spacing="0.3" textLength="20" lengthAdjust="spacingAndGlyphs">LEVEL</text>
<rect x="550" y="329" width="63" height="36" fill="#d2d2d2"/>
<use href="#nb" x="555" y="333"/>
<text x="566.8" y="349" font-size="15" fill="#3c3c3c" text-anchor="middle" font-weight="bold">8</text>
<text x="567" y="359.9" font-size="6.6" fill="#444" text-anchor="middle" font-weight="bold" letter-spacing="0.3" textLength="14" lengthAdjust="spacingAndGlyphs">PRE</text>
<use href="#kG" x="596.3" y="345.5"/>
<text x="597" y="362.8" font-size="6.8" fill="#444" text-anchor="middle" font-weight="bold" letter-spacing="0.3" textLength="20" lengthAdjust="spacingAndGlyphs">LEVEL</text>
<rect x="550" y="76" width="63" height="2" fill="#000"/>
<rect x="550" y="365" width="63" height="2" fill="#000"/>
<rect x="550" y="367" width="63" height="8" fill="#f9dfb0"/>
<text x="554.5" y="374.1" font-size="8.3" fill="#333" font-weight="bold" letter-spacing="0.8" textLength="26.4" lengthAdjust="spacingAndGlyphs">FADER</text>
<rect x="550" y="377" width="63" height="220" fill="#e6e6e6"/>
<use href="#kW" x="565" y="390.5"/>
<text x="565.7" y="409" font-size="6.6" fill="#4a4a4a" text-anchor="middle" font-weight="bold" letter-spacing="0.3" textLength="19.4" lengthAdjust="spacingAndGlyphs">WIDTH</text>
<use href="#pan" x="593.4" y="395"/>
<text x="584.3" y="416.7" font-size="6.6" fill="#444" text-anchor="middle" font-weight="bold">L</text>
<text x="603" y="416.7" font-size="6.6" fill="#444" text-anchor="middle" font-weight="bold">R</text>
<rect x="555.5" y="421.5" width="23" height="20" rx="1.5" fill="url(#gBtn3)" stroke="#858585"/>
<path d="M556.5 440.5V422.5H577.5" fill="none" stroke="#fff" stroke-opacity="0.85"/>
<text x="567.0" y="433.95" font-size="6.8" fill="#333" text-anchor="middle" font-weight="bold" letter-spacing="0.3" textLength="18.3" lengthAdjust="spacingAndGlyphs">MUTE</text>
<rect x="583.5" y="421.5" width="23" height="20" rx="1.5" fill="url(#gBtn3)" stroke="#858585"/>
<path d="M584.5 440.5V422.5H605.5" fill="none" stroke="#fff" stroke-opacity="0.85"/>
<text x="595.0" y="433.95" font-size="6.8" fill="#333" text-anchor="middle" font-weight="bold" letter-spacing="0.3" textLength="18.3" lengthAdjust="spacingAndGlyphs">SOLO</text>
<use href="#mtr" x="555" y="453"/>
<text x="572.7" y="463.0" font-size="6.9" fill="#1cb8de" font-weight="bold" letter-spacing="0.2">12</text>
<text x="572.7" y="479.0" font-size="6.9" fill="#1cb8de" font-weight="bold" letter-spacing="0.2">8</text>
<text x="572.7" y="495.0" font-size="6.9" fill="#1cb8de" font-weight="bold" letter-spacing="0.2">4</text>
<text x="572.7" y="511.2" font-size="6.9" fill="#1cb8de" font-weight="bold" letter-spacing="0.2">0</text>
<text x="572.7" y="530.8" font-size="6.9" fill="#1cb8de" font-weight="bold" letter-spacing="0.2">10</text>
<text x="572.7" y="551.3" font-size="6.9" fill="#1cb8de" font-weight="bold" letter-spacing="0.2">20</text>
<text x="572.7" y="571.1" font-size="6.9" fill="#1cb8de" font-weight="bold" letter-spacing="0.2">40</text>
<text x="572.7" y="587.0" font-size="6.9" fill="#1cb8de" font-weight="bold" letter-spacing="0.2">56</text>
<use href="#ftk" x="597.5" y="0"/>
<use href="#scr" x="597.5" y="463"/>
<use href="#scr" x="597.5" y="584"/>
<use href="#cap" x="591" y="484"/>
<rect x="551" y="599" width="61.5" height="5" fill="#1e1e1e"/>
<path d="M551 605H612V644Q612 648 608 648H555Q551 648 551 644Z" fill="#f9dfb0"/>
<rect x="553.5" y="607.5" width="27" height="10" rx="1.5" fill="url(#gBtn2)" stroke="#666"/>
<path d="M554.5 616.5V608.5H579.5" fill="none" stroke="#fff" stroke-opacity="0.85"/>
<text x="567.0" y="614.88" font-size="6.6" fill="#333" text-anchor="middle" font-weight="bold" letter-spacing="0.4">SEQ</text>
<rect x="582.5" y="607.5" width="27" height="10" rx="1.5" fill="url(#gBtn2)" stroke="#666"/>
<path d="M583.5 616.5V608.5H608.5" fill="none" stroke="#fff" stroke-opacity="0.85"/>
<text x="596.0" y="614.88" font-size="6.6" fill="#333" text-anchor="middle" font-weight="bold" letter-spacing="0.4">RACK</text>
<text x="581" y="629.4" font-size="11.5" fill="#080808" text-anchor="middle" stroke="#080808" stroke-width="0.2">Strings</text>
<text x="581" y="642.2" font-size="11.5" fill="#080808" text-anchor="middle" stroke="#080808" stroke-width="0.2">solo MIDI-</text>
<rect x="612.7" y="69" width="1.3" height="529" fill="#161616"/>
<rect x="550" y="78" width="0.8" height="287" fill="#fff" fill-opacity="0.55"/>
<rect x="550" y="377" width="0.8" height="220" fill="#fff" fill-opacity="0.55"/>
<rect x="614" y="69" width="63" height="7" fill="#a9c9e6"/>
<rect x="666" y="69" width="10" height="7" fill="#3a0606"/>
<rect x="676" y="69" width="1" height="7" fill="#1a0000"/>
<text x="617.7" y="75.1" font-size="8.2" fill="#333" font-weight="bold" letter-spacing="0.8" textLength="22.5" lengthAdjust="spacingAndGlyphs">SEND</text>
<rect x="614" y="77" width="63" height="36" fill="#e6e6e6"/>
<use href="#nb" x="619" y="81"/>
<text x="630.8" y="97" font-size="15" fill="#3c3c3c" text-anchor="middle" font-weight="bold">1</text>
<text x="631" y="107.9" font-size="6.6" fill="#444" text-anchor="middle" font-weight="bold" letter-spacing="0.3" textLength="14" lengthAdjust="spacingAndGlyphs">PRE</text>
<use href="#kG" x="660.3" y="93.5"/>
<text x="661" y="110.8" font-size="6.8" fill="#444" text-anchor="middle" font-weight="bold" letter-spacing="0.3" textLength="20" lengthAdjust="spacingAndGlyphs">LEVEL</text>
<rect x="614" y="113" width="63" height="36" fill="#d2d2d2"/>
<use href="#nb" x="619" y="117"/>
<text x="630.8" y="133" font-size="15" fill="#3c3c3c" text-anchor="middle" font-weight="bold">2</text>
<text x="631" y="143.9" font-size="6.6" fill="#444" text-anchor="middle" font-weight="bold" letter-spacing="0.3" textLength="14" lengthAdjust="spacingAndGlyphs">PRE</text>
<use href="#kG" x="660.3" y="129.5"/>
<text x="661" y="146.8" font-size="6.8" fill="#444" text-anchor="middle" font-weight="bold" letter-spacing="0.3" textLength="20" lengthAdjust="spacingAndGlyphs">LEVEL</text>
<rect x="614" y="149" width="63" height="36" fill="#e6e6e6"/>
<use href="#nb" x="619" y="153"/>
<text x="630.8" y="169" font-size="15" fill="#3c3c3c" text-anchor="middle" font-weight="bold">3</text>
<text x="631" y="179.9" font-size="6.6" fill="#444" text-anchor="middle" font-weight="bold" letter-spacing="0.3" textLength="14" lengthAdjust="spacingAndGlyphs">PRE</text>
<use href="#kG" x="660.3" y="165.5"/>
<text x="661" y="182.8" font-size="6.8" fill="#444" text-anchor="middle" font-weight="bold" letter-spacing="0.3" textLength="20" lengthAdjust="spacingAndGlyphs">LEVEL</text>
<rect x="614" y="185" width="63" height="36" fill="#d2d2d2"/>
<use href="#nb" x="619" y="189"/>
<text x="630.8" y="205" font-size="15" fill="#3c3c3c" text-anchor="middle" font-weight="bold">4</text>
<text x="631" y="215.9" font-size="6.6" fill="#444" text-anchor="middle" font-weight="bold" letter-spacing="0.3" textLength="14" lengthAdjust="spacingAndGlyphs">PRE</text>
<use href="#kG" x="660.3" y="201.5"/>
<text x="661" y="218.8" font-size="6.8" fill="#444" text-anchor="middle" font-weight="bold" letter-spacing="0.3" textLength="20" lengthAdjust="spacingAndGlyphs">LEVEL</text>
<rect x="614" y="221" width="63" height="36" fill="#e6e6e6"/>
<use href="#nb" x="619" y="225"/>
<text x="630.8" y="241" font-size="15" fill="#3c3c3c" text-anchor="middle" font-weight="bold">5</text>
<text x="631" y="251.9" font-size="6.6" fill="#444" text-anchor="middle" font-weight="bold" letter-spacing="0.3" textLength="14" lengthAdjust="spacingAndGlyphs">PRE</text>
<use href="#kG" x="660.3" y="237.5"/>
<text x="661" y="254.8" font-size="6.8" fill="#444" text-anchor="middle" font-weight="bold" letter-spacing="0.3" textLength="20" lengthAdjust="spacingAndGlyphs">LEVEL</text>
<rect x="614" y="257" width="63" height="36" fill="#d2d2d2"/>
<use href="#nb" x="619" y="261"/>
<text x="630.8" y="277" font-size="15" fill="#3c3c3c" text-anchor="middle" font-weight="bold">6</text>
<text x="631" y="287.9" font-size="6.6" fill="#444" text-anchor="middle" font-weight="bold" letter-spacing="0.3" textLength="14" lengthAdjust="spacingAndGlyphs">PRE</text>
<use href="#kG" x="660.3" y="273.5"/>
<text x="661" y="290.8" font-size="6.8" fill="#444" text-anchor="middle" font-weight="bold" letter-spacing="0.3" textLength="20" lengthAdjust="spacingAndGlyphs">LEVEL</text>
<rect x="614" y="293" width="63" height="36" fill="#e6e6e6"/>
<use href="#nb" x="619" y="297"/>
<text x="630.8" y="313" font-size="15" fill="#3c3c3c" text-anchor="middle" font-weight="bold">7</text>
<text x="631" y="323.9" font-size="6.6" fill="#444" text-anchor="middle" font-weight="bold" letter-spacing="0.3" textLength="14" lengthAdjust="spacingAndGlyphs">PRE</text>
<use href="#kG" x="660.3" y="309.5"/>
<text x="661" y="326.8" font-size="6.8" fill="#444" text-anchor="middle" font-weight="bold" letter-spacing="0.3" textLength="20" lengthAdjust="spacingAndGlyphs">LEVEL</text>
<rect x="614" y="329" width="63" height="36" fill="#d2d2d2"/>
<use href="#nb" x="619" y="333"/>
<text x="630.8" y="349" font-size="15" fill="#3c3c3c" text-anchor="middle" font-weight="bold">8</text>
<text x="631" y="359.9" font-size="6.6" fill="#444" text-anchor="middle" font-weight="bold" letter-spacing="0.3" textLength="14" lengthAdjust="spacingAndGlyphs">PRE</text>
<use href="#kG" x="660.3" y="345.5"/>
<text x="661" y="362.8" font-size="6.8" fill="#444" text-anchor="middle" font-weight="bold" letter-spacing="0.3" textLength="20" lengthAdjust="spacingAndGlyphs">LEVEL</text>
<rect x="614" y="76" width="63" height="2" fill="#000"/>
<rect x="614" y="365" width="63" height="2" fill="#000"/>
<rect x="614" y="367" width="63" height="8" fill="#a9c9e6"/>
<text x="618.5" y="374.1" font-size="8.3" fill="#333" font-weight="bold" letter-spacing="0.8" textLength="26.4" lengthAdjust="spacingAndGlyphs">FADER</text>
<rect x="614" y="377" width="63" height="220" fill="#e6e6e6"/>
<use href="#kW" x="629" y="390.5"/>
<text x="629.7" y="409" font-size="6.6" fill="#4a4a4a" text-anchor="middle" font-weight="bold" letter-spacing="0.3" textLength="19.4" lengthAdjust="spacingAndGlyphs">WIDTH</text>
<use href="#pan" x="657.4" y="395"/>
<text x="648.3" y="416.7" font-size="6.6" fill="#444" text-anchor="middle" font-weight="bold">L</text>
<text x="667" y="416.7" font-size="6.6" fill="#444" text-anchor="middle" font-weight="bold">R</text>
<rect x="619.5" y="421.5" width="23" height="20" rx="1.5" fill="url(#gBtn3)" stroke="#858585"/>
<path d="M620.5 440.5V422.5H641.5" fill="none" stroke="#fff" stroke-opacity="0.85"/>
<text x="631.0" y="433.95" font-size="6.8" fill="#333" text-anchor="middle" font-weight="bold" letter-spacing="0.3" textLength="18.3" lengthAdjust="spacingAndGlyphs">MUTE</text>
<rect x="647.5" y="421.5" width="23" height="20" rx="1.5" fill="url(#gBtn3)" stroke="#858585"/>
<path d="M648.5 440.5V422.5H669.5" fill="none" stroke="#fff" stroke-opacity="0.85"/>
<text x="659.0" y="433.95" font-size="6.8" fill="#333" text-anchor="middle" font-weight="bold" letter-spacing="0.3" textLength="18.3" lengthAdjust="spacingAndGlyphs">SOLO</text>
<use href="#mtr" x="619" y="453"/>
<text x="636.7" y="463.0" font-size="6.9" fill="#1cb8de" font-weight="bold" letter-spacing="0.2">12</text>
<text x="636.7" y="479.0" font-size="6.9" fill="#1cb8de" font-weight="bold" letter-spacing="0.2">8</text>
<text x="636.7" y="495.0" font-size="6.9" fill="#1cb8de" font-weight="bold" letter-spacing="0.2">4</text>
<text x="636.7" y="511.2" font-size="6.9" fill="#1cb8de" font-weight="bold" letter-spacing="0.2">0</text>
<text x="636.7" y="530.8" font-size="6.9" fill="#1cb8de" font-weight="bold" letter-spacing="0.2">10</text>
<text x="636.7" y="551.3" font-size="6.9" fill="#1cb8de" font-weight="bold" letter-spacing="0.2">20</text>
<text x="636.7" y="571.1" font-size="6.9" fill="#1cb8de" font-weight="bold" letter-spacing="0.2">40</text>
<text x="636.7" y="587.0" font-size="6.9" fill="#1cb8de" font-weight="bold" letter-spacing="0.2">56</text>
<use href="#ftk" x="661.5" y="0"/>
<use href="#scr" x="661.5" y="463"/>
<use href="#scr" x="661.5" y="584"/>
<use href="#cap" x="655" y="484"/>
<rect x="615" y="599" width="61.5" height="5" fill="#1e1e1e"/>
<path d="M615 605H676V644Q676 648 672 648H619Q615 648 615 644Z" fill="#a9c9e6"/>
<rect x="617.5" y="607.5" width="27" height="10" rx="1.5" fill="url(#gBtn2)" stroke="#666"/>
<path d="M618.5 616.5V608.5H643.5" fill="none" stroke="#fff" stroke-opacity="0.85"/>
<text x="631.0" y="614.88" font-size="6.6" fill="#333" text-anchor="middle" font-weight="bold" letter-spacing="0.4">SEQ</text>
<rect x="646.5" y="607.5" width="27" height="10" rx="1.5" fill="url(#gBtn2)" stroke="#666"/>
<path d="M647.5 616.5V608.5H672.5" fill="none" stroke="#fff" stroke-opacity="0.85"/>
<text x="660.0" y="614.88" font-size="6.6" fill="#333" text-anchor="middle" font-weight="bold" letter-spacing="0.4">RACK</text>
<text x="645" y="629.4" font-size="11.5" fill="#080808" text-anchor="middle" stroke="#080808" stroke-width="0.2">Bass MIDI-</text>
<text x="645" y="642.2" font-size="11.5" fill="#080808" text-anchor="middle" stroke="#080808" stroke-width="0.2">Kanal2</text>
<rect x="676.7" y="69" width="1.3" height="529" fill="#161616"/>
<rect x="614" y="78" width="0.8" height="287" fill="#fff" fill-opacity="0.55"/>
<rect x="614" y="377" width="0.8" height="220" fill="#fff" fill-opacity="0.55"/>
<rect x="678" y="69" width="63" height="7" fill="#c8812f"/>
<rect x="730" y="69" width="10" height="7" fill="#3a0606"/>
<rect x="740" y="69" width="1" height="7" fill="#1a0000"/>
<text x="681.7" y="75.1" font-size="8.2" fill="#333" font-weight="bold" letter-spacing="0.8" textLength="22.5" lengthAdjust="spacingAndGlyphs">SEND</text>
<rect x="678" y="77" width="63" height="36" fill="#e6e6e6"/>
<use href="#nb" x="683" y="81"/>
<text x="694.8" y="97" font-size="15" fill="#3c3c3c" text-anchor="middle" font-weight="bold">1</text>
<text x="695" y="107.9" font-size="6.6" fill="#444" text-anchor="middle" font-weight="bold" letter-spacing="0.3" textLength="14" lengthAdjust="spacingAndGlyphs">PRE</text>
<use href="#kG" x="724.3" y="93.5"/>
<text x="725" y="110.8" font-size="6.8" fill="#444" text-anchor="middle" font-weight="bold" letter-spacing="0.3" textLength="20" lengthAdjust="spacingAndGlyphs">LEVEL</text>
<rect x="678" y="113" width="63" height="36" fill="#d2d2d2"/>
<use href="#nb" x="683" y="117"/>
<text x="694.8" y="133" font-size="15" fill="#3c3c3c" text-anchor="middle" font-weight="bold">2</text>
<text x="695" y="143.9" font-size="6.6" fill="#444" text-anchor="middle" font-weight="bold" letter-spacing="0.3" textLength="14" lengthAdjust="spacingAndGlyphs">PRE</text>
<use href="#kG" x="724.3" y="129.5"/>
<text x="725" y="146.8" font-size="6.8" fill="#444" text-anchor="middle" font-weight="bold" letter-spacing="0.3" textLength="20" lengthAdjust="spacingAndGlyphs">LEVEL</text>
<rect x="678" y="149" width="63" height="36" fill="#e6e6e6"/>
<use href="#nb" x="683" y="153"/>
<text x="694.8" y="169" font-size="15" fill="#3c3c3c" text-anchor="middle" font-weight="bold">3</text>
<text x="695" y="179.9" font-size="6.6" fill="#444" text-anchor="middle" font-weight="bold" letter-spacing="0.3" textLength="14" lengthAdjust="spacingAndGlyphs">PRE</text>
<use href="#kG" x="724.3" y="165.5"/>
<text x="725" y="182.8" font-size="6.8" fill="#444" text-anchor="middle" font-weight="bold" letter-spacing="0.3" textLength="20" lengthAdjust="spacingAndGlyphs">LEVEL</text>
<rect x="678" y="185" width="63" height="36" fill="#d2d2d2"/>
<use href="#nb" x="683" y="189"/>
<text x="694.8" y="205" font-size="15" fill="#3c3c3c" text-anchor="middle" font-weight="bold">4</text>
<text x="695" y="215.9" font-size="6.6" fill="#444" text-anchor="middle" font-weight="bold" letter-spacing="0.3" textLength="14" lengthAdjust="spacingAndGlyphs">PRE</text>
<use href="#kG" x="724.3" y="201.5"/>
<text x="725" y="218.8" font-size="6.8" fill="#444" text-anchor="middle" font-weight="bold" letter-spacing="0.3" textLength="20" lengthAdjust="spacingAndGlyphs">LEVEL</text>
<rect x="678" y="221" width="63" height="36" fill="#e6e6e6"/>
<use href="#nb" x="683" y="225"/>
<text x="694.8" y="241" font-size="15" fill="#3c3c3c" text-anchor="middle" font-weight="bold">5</text>
<text x="695" y="251.9" font-size="6.6" fill="#444" text-anchor="middle" font-weight="bold" letter-spacing="0.3" textLength="14" lengthAdjust="spacingAndGlyphs">PRE</text>
<use href="#kG" x="724.3" y="237.5"/>
<text x="725" y="254.8" font-size="6.8" fill="#444" text-anchor="middle" font-weight="bold" letter-spacing="0.3" textLength="20" lengthAdjust="spacingAndGlyphs">LEVEL</text>
<rect x="678" y="257" width="63" height="36" fill="#d2d2d2"/>
<use href="#nb" x="683" y="261"/>
<text x="694.8" y="277" font-size="15" fill="#3c3c3c" text-anchor="middle" font-weight="bold">6</text>
<text x="695" y="287.9" font-size="6.6" fill="#444" text-anchor="middle" font-weight="bold" letter-spacing="0.3" textLength="14" lengthAdjust="spacingAndGlyphs">PRE</text>
<use href="#kG" x="724.3" y="273.5"/>
<text x="725" y="290.8" font-size="6.8" fill="#444" text-anchor="middle" font-weight="bold" letter-spacing="0.3" textLength="20" lengthAdjust="spacingAndGlyphs">LEVEL</text>
<rect x="678" y="293" width="63" height="36" fill="#e6e6e6"/>
<use href="#nb" x="683" y="297"/>
<text x="694.8" y="313" font-size="15" fill="#3c3c3c" text-anchor="middle" font-weight="bold">7</text>
<text x="695" y="323.9" font-size="6.6" fill="#444" text-anchor="middle" font-weight="bold" letter-spacing="0.3" textLength="14" lengthAdjust="spacingAndGlyphs">PRE</text>
<use href="#kG" x="724.3" y="309.5"/>
<text x="725" y="326.8" font-size="6.8" fill="#444" text-anchor="middle" font-weight="bold" letter-spacing="0.3" textLength="20" lengthAdjust="spacingAndGlyphs">LEVEL</text>
<rect x="678" y="329" width="63" height="36" fill="#d2d2d2"/>
<use href="#nb" x="683" y="333"/>
<text x="694.8" y="349" font-size="15" fill="#3c3c3c" text-anchor="middle" font-weight="bold">8</text>
<text x="695" y="359.9" font-size="6.6" fill="#444" text-anchor="middle" font-weight="bold" letter-spacing="0.3" textLength="14" lengthAdjust="spacingAndGlyphs">PRE</text>
<use href="#kG" x="724.3" y="345.5"/>
<text x="725" y="362.8" font-size="6.8" fill="#444" text-anchor="middle" font-weight="bold" letter-spacing="0.3" textLength="20" lengthAdjust="spacingAndGlyphs">LEVEL</text>
<rect x="678" y="76" width="63" height="2" fill="#000"/>
<rect x="678" y="365" width="63" height="2" fill="#000"/>
<rect x="678" y="367" width="63" height="8" fill="#c8812f"/>
<text x="682.5" y="374.1" font-size="8.3" fill="#333" font-weight="bold" letter-spacing="0.8" textLength="26.4" lengthAdjust="spacingAndGlyphs">FADER</text>
<rect x="678" y="377" width="63" height="220" fill="#e6e6e6"/>
<use href="#kW" x="693" y="390.5"/>
<text x="693.7" y="409" font-size="6.6" fill="#4a4a4a" text-anchor="middle" font-weight="bold" letter-spacing="0.3" textLength="19.4" lengthAdjust="spacingAndGlyphs">WIDTH</text>
<use href="#pan" x="721.4" y="395"/>
<text x="712.3" y="416.7" font-size="6.6" fill="#444" text-anchor="middle" font-weight="bold">L</text>
<text x="731" y="416.7" font-size="6.6" fill="#444" text-anchor="middle" font-weight="bold">R</text>
<rect x="683.5" y="421.5" width="23" height="20" rx="1.5" fill="url(#gBtn3)" stroke="#858585"/>
<path d="M684.5 440.5V422.5H705.5" fill="none" stroke="#fff" stroke-opacity="0.85"/>
<text x="695.0" y="433.95" font-size="6.8" fill="#333" text-anchor="middle" font-weight="bold" letter-spacing="0.3" textLength="18.3" lengthAdjust="spacingAndGlyphs">MUTE</text>
<rect x="711.5" y="421.5" width="23" height="20" rx="1.5" fill="url(#gBtn3)" stroke="#858585"/>
<path d="M712.5 440.5V422.5H733.5" fill="none" stroke="#fff" stroke-opacity="0.85"/>
<text x="723.0" y="433.95" font-size="6.8" fill="#333" text-anchor="middle" font-weight="bold" letter-spacing="0.3" textLength="18.3" lengthAdjust="spacingAndGlyphs">SOLO</text>
<use href="#mtr" x="683" y="453"/>
<text x="700.7" y="463.0" font-size="6.9" fill="#1cb8de" font-weight="bold" letter-spacing="0.2">12</text>
<text x="700.7" y="479.0" font-size="6.9" fill="#1cb8de" font-weight="bold" letter-spacing="0.2">8</text>
<text x="700.7" y="495.0" font-size="6.9" fill="#1cb8de" font-weight="bold" letter-spacing="0.2">4</text>
<text x="700.7" y="511.2" font-size="6.9" fill="#1cb8de" font-weight="bold" letter-spacing="0.2">0</text>
<text x="700.7" y="530.8" font-size="6.9" fill="#1cb8de" font-weight="bold" letter-spacing="0.2">10</text>
<text x="700.7" y="551.3" font-size="6.9" fill="#1cb8de" font-weight="bold" letter-spacing="0.2">20</text>
<text x="700.7" y="571.1" font-size="6.9" fill="#1cb8de" font-weight="bold" letter-spacing="0.2">40</text>
<text x="700.7" y="587.0" font-size="6.9" fill="#1cb8de" font-weight="bold" letter-spacing="0.2">56</text>
<use href="#ftk" x="725.5" y="0"/>
<use href="#scr" x="725.5" y="463"/>
<use href="#scr" x="725.5" y="584"/>
<use href="#cap" x="719" y="484"/>
<rect x="679" y="599" width="61.5" height="5" fill="#1e1e1e"/>
<path d="M679 605H740V644Q740 648 736 648H683Q679 648 679 644Z" fill="#c8812f"/>
<rect x="681.5" y="607.5" width="27" height="10" rx="1.5" fill="url(#gBtn2)" stroke="#666"/>
<path d="M682.5 616.5V608.5H707.5" fill="none" stroke="#fff" stroke-opacity="0.85"/>
<text x="695.0" y="614.88" font-size="6.6" fill="#333" text-anchor="middle" font-weight="bold" letter-spacing="0.4">SEQ</text>
<rect x="710.5" y="607.5" width="27" height="10" rx="1.5" fill="url(#gBtn2)" stroke="#666"/>
<path d="M711.5 616.5V608.5H736.5" fill="none" stroke="#fff" stroke-opacity="0.85"/>
<text x="724.0" y="614.88" font-size="6.6" fill="#333" text-anchor="middle" font-weight="bold" letter-spacing="0.4">RACK</text>
<text x="709" y="629.4" font-size="11.5" fill="#080808" text-anchor="middle" stroke="#080808" stroke-width="0.2">Choirs</text>
<text x="709" y="642.2" font-size="11.5" fill="#080808" text-anchor="middle" stroke="#080808" stroke-width="0.2">MIDI-</text>
<rect x="740.7" y="69" width="1.3" height="529" fill="#161616"/>
<rect x="678" y="78" width="0.8" height="287" fill="#fff" fill-opacity="0.55"/>
<rect x="678" y="377" width="0.8" height="220" fill="#fff" fill-opacity="0.55"/>
<rect x="742" y="69" width="63" height="7" fill="#6f8070"/>
<rect x="794" y="69" width="10" height="7" fill="#3a0606"/>
<rect x="804" y="69" width="1" height="7" fill="#1a0000"/>
<text x="745.7" y="75.1" font-size="8.2" fill="#333" font-weight="bold" letter-spacing="0.8" textLength="22.5" lengthAdjust="spacingAndGlyphs">SEND</text>
<rect x="742" y="77" width="63" height="36" fill="#e6e6e6"/>
<use href="#nb" x="747" y="81"/>
<text x="758.8" y="97" font-size="15" fill="#3c3c3c" text-anchor="middle" font-weight="bold">1</text>
<text x="759" y="107.9" font-size="6.6" fill="#444" text-anchor="middle" font-weight="bold" letter-spacing="0.3" textLength="14" lengthAdjust="spacingAndGlyphs">PRE</text>
<use href="#kG" x="788.3" y="93.5"/>
<text x="789" y="110.8" font-size="6.8" fill="#444" text-anchor="middle" font-weight="bold" letter-spacing="0.3" textLength="20" lengthAdjust="spacingAndGlyphs">LEVEL</text>
<rect x="742" y="113" width="63" height="36" fill="#d2d2d2"/>
<use href="#nb" x="747" y="117"/>
<text x="758.8" y="133" font-size="15" fill="#3c3c3c" text-anchor="middle" font-weight="bold">2</text>
<text x="759" y="143.9" font-size="6.6" fill="#444" text-anchor="middle" font-weight="bold" letter-spacing="0.3" textLength="14" lengthAdjust="spacingAndGlyphs">PRE</text>
<use href="#kG" x="788.3" y="129.5"/>
<text x="789" y="146.8" font-size="6.8" fill="#444" text-anchor="middle" font-weight="bold" letter-spacing="0.3" textLength="20" lengthAdjust="spacingAndGlyphs">LEVEL</text>
<rect x="742" y="149" width="63" height="36" fill="#e6e6e6"/>
<use href="#nb" x="747" y="153"/>
<text x="758.8" y="169" font-size="15" fill="#3c3c3c" text-anchor="middle" font-weight="bold">3</text>
<text x="759" y="179.9" font-size="6.6" fill="#444" text-anchor="middle" font-weight="bold" letter-spacing="0.3" textLength="14" lengthAdjust="spacingAndGlyphs">PRE</text>
<use href="#kG" x="788.3" y="165.5"/>
<text x="789" y="182.8" font-size="6.8" fill="#444" text-anchor="middle" font-weight="bold" letter-spacing="0.3" textLength="20" lengthAdjust="spacingAndGlyphs">LEVEL</text>
<rect x="742" y="185" width="63" height="36" fill="#d2d2d2"/>
<use href="#nb" x="747" y="189"/>
<text x="758.8" y="205" font-size="15" fill="#3c3c3c" text-anchor="middle" font-weight="bold">4</text>
<text x="759" y="215.9" font-size="6.6" fill="#444" text-anchor="middle" font-weight="bold" letter-spacing="0.3" textLength="14" lengthAdjust="spacingAndGlyphs">PRE</text>
<use href="#kG" x="788.3" y="201.5"/>
<text x="789" y="218.8" font-size="6.8" fill="#444" text-anchor="middle" font-weight="bold" letter-spacing="0.3" textLength="20" lengthAdjust="spacingAndGlyphs">LEVEL</text>
<rect x="742" y="221" width="63" height="36" fill="#e6e6e6"/>
<use href="#nb" x="747" y="225"/>
<text x="758.8" y="241" font-size="15" fill="#3c3c3c" text-anchor="middle" font-weight="bold">5</text>
<text x="759" y="251.9" font-size="6.6" fill="#444" text-anchor="middle" font-weight="bold" letter-spacing="0.3" textLength="14" lengthAdjust="spacingAndGlyphs">PRE</text>
<use href="#kG" x="788.3" y="237.5"/>
<text x="789" y="254.8" font-size="6.8" fill="#444" text-anchor="middle" font-weight="bold" letter-spacing="0.3" textLength="20" lengthAdjust="spacingAndGlyphs">LEVEL</text>
<rect x="742" y="257" width="63" height="36" fill="#d2d2d2"/>
<use href="#nb" x="747" y="261"/>
<text x="758.8" y="277" font-size="15" fill="#3c3c3c" text-anchor="middle" font-weight="bold">6</text>
<text x="759" y="287.9" font-size="6.6" fill="#444" text-anchor="middle" font-weight="bold" letter-spacing="0.3" textLength="14" lengthAdjust="spacingAndGlyphs">PRE</text>
<use href="#kG" x="788.3" y="273.5"/>
<text x="789" y="290.8" font-size="6.8" fill="#444" text-anchor="middle" font-weight="bold" letter-spacing="0.3" textLength="20" lengthAdjust="spacingAndGlyphs">LEVEL</text>
<rect x="742" y="293" width="63" height="36" fill="#e6e6e6"/>
<use href="#nb" x="747" y="297"/>
<text x="758.8" y="313" font-size="15" fill="#3c3c3c" text-anchor="middle" font-weight="bold">7</text>
<text x="759" y="323.9" font-size="6.6" fill="#444" text-anchor="middle" font-weight="bold" letter-spacing="0.3" textLength="14" lengthAdjust="spacingAndGlyphs">PRE</text>
<use href="#kG" x="788.3" y="309.5"/>
<text x="789" y="326.8" font-size="6.8" fill="#444" text-anchor="middle" font-weight="bold" letter-spacing="0.3" textLength="20" lengthAdjust="spacingAndGlyphs">LEVEL</text>
<rect x="742" y="329" width="63" height="36" fill="#d2d2d2"/>
<use href="#nb" x="747" y="333"/>
<text x="758.8" y="349" font-size="15" fill="#3c3c3c" text-anchor="middle" font-weight="bold">8</text>
<text x="759" y="359.9" font-size="6.6" fill="#444" text-anchor="middle" font-weight="bold" letter-spacing="0.3" textLength="14" lengthAdjust="spacingAndGlyphs">PRE</text>
<use href="#kG" x="788.3" y="345.5"/>
<text x="789" y="362.8" font-size="6.8" fill="#444" text-anchor="middle" font-weight="bold" letter-spacing="0.3" textLength="20" lengthAdjust="spacingAndGlyphs">LEVEL</text>
<rect x="742" y="76" width="63" height="2" fill="#000"/>
<rect x="742" y="365" width="63" height="2" fill="#000"/>
<rect x="742" y="367" width="63" height="8" fill="#6f8070"/>
<text x="746.5" y="374.1" font-size="8.3" fill="#333" font-weight="bold" letter-spacing="0.8" textLength="26.4" lengthAdjust="spacingAndGlyphs">FADER</text>
<rect x="742" y="377" width="63" height="220" fill="#e6e6e6"/>
<use href="#kW" x="757" y="390.5"/>
<text x="757.7" y="409" font-size="6.6" fill="#4a4a4a" text-anchor="middle" font-weight="bold" letter-spacing="0.3" textLength="19.4" lengthAdjust="spacingAndGlyphs">WIDTH</text>
<use href="#pan" x="785.4" y="395"/>
<text x="776.3" y="416.7" font-size="6.6" fill="#444" text-anchor="middle" font-weight="bold">L</text>
<text x="795" y="416.7" font-size="6.6" fill="#444" text-anchor="middle" font-weight="bold">R</text>
<rect x="747.5" y="421.5" width="23" height="20" rx="1.5" fill="url(#gBtn3)" stroke="#858585"/>
<path d="M748.5 440.5V422.5H769.5" fill="none" stroke="#fff" stroke-opacity="0.85"/>
<text x="759.0" y="433.95" font-size="6.8" fill="#333" text-anchor="middle" font-weight="bold" letter-spacing="0.3" textLength="18.3" lengthAdjust="spacingAndGlyphs">MUTE</text>
<rect x="775.5" y="421.5" width="23" height="20" rx="1.5" fill="url(#gBtn3)" stroke="#858585"/>
<path d="M776.5 440.5V422.5H797.5" fill="none" stroke="#fff" stroke-opacity="0.85"/>
<text x="787.0" y="433.95" font-size="6.8" fill="#333" text-anchor="middle" font-weight="bold" letter-spacing="0.3" textLength="18.3" lengthAdjust="spacingAndGlyphs">SOLO</text>
<use href="#mtr" x="747" y="453"/>
<text x="764.7" y="463.0" font-size="6.9" fill="#1cb8de" font-weight="bold" letter-spacing="0.2">12</text>
<text x="764.7" y="479.0" font-size="6.9" fill="#1cb8de" font-weight="bold" letter-spacing="0.2">8</text>
<text x="764.7" y="495.0" font-size="6.9" fill="#1cb8de" font-weight="bold" letter-spacing="0.2">4</text>
<text x="764.7" y="511.2" font-size="6.9" fill="#1cb8de" font-weight="bold" letter-spacing="0.2">0</text>
<text x="764.7" y="530.8" font-size="6.9" fill="#1cb8de" font-weight="bold" letter-spacing="0.2">10</text>
<text x="764.7" y="551.3" font-size="6.9" fill="#1cb8de" font-weight="bold" letter-spacing="0.2">20</text>
<text x="764.7" y="571.1" font-size="6.9" fill="#1cb8de" font-weight="bold" letter-spacing="0.2">40</text>
<text x="764.7" y="587.0" font-size="6.9" fill="#1cb8de" font-weight="bold" letter-spacing="0.2">56</text>
<use href="#ftk" x="789.5" y="0"/>
<use href="#scr" x="789.5" y="463"/>
<use href="#scr" x="789.5" y="584"/>
<use href="#cap" x="783" y="484"/>
<rect x="743" y="599" width="61.5" height="5" fill="#1e1e1e"/>
<path d="M743 605H804V644Q804 648 800 648H747Q743 648 743 644Z" fill="#6f8070"/>
<rect x="745.5" y="607.5" width="27" height="10" rx="1.5" fill="url(#gBtn2)" stroke="#666"/>
<path d="M746.5 616.5V608.5H771.5" fill="none" stroke="#fff" stroke-opacity="0.85"/>
<text x="759.0" y="614.88" font-size="6.6" fill="#333" text-anchor="middle" font-weight="bold" letter-spacing="0.4">SEQ</text>
<rect x="774.5" y="607.5" width="27" height="10" rx="1.5" fill="url(#gBtn2)" stroke="#666"/>
<path d="M775.5 616.5V608.5H800.5" fill="none" stroke="#fff" stroke-opacity="0.85"/>
<text x="788.0" y="614.88" font-size="6.6" fill="#333" text-anchor="middle" font-weight="bold" letter-spacing="0.4">RACK</text>
<text x="773" y="629.4" font-size="11.5" fill="#080808" text-anchor="middle" stroke="#080808" stroke-width="0.2">Drum</text>
<text x="773" y="642.2" font-size="11.5" fill="#080808" text-anchor="middle" stroke="#080808" stroke-width="0.2">MIDI-</text>
<rect x="804.7" y="69" width="1.3" height="529" fill="#161616"/>
<rect x="742" y="78" width="0.8" height="287" fill="#fff" fill-opacity="0.55"/>
<rect x="742" y="377" width="0.8" height="220" fill="#fff" fill-opacity="0.55"/>
<rect x="806" y="69" width="63" height="7" fill="#6c8a42"/>
<rect x="858" y="69" width="10" height="7" fill="#3a0606"/>
<rect x="868" y="69" width="1" height="7" fill="#1a0000"/>
<text x="809.7" y="75.1" font-size="8.2" fill="#333" font-weight="bold" letter-spacing="0.8" textLength="22.5" lengthAdjust="spacingAndGlyphs">SEND</text>
<rect x="806" y="77" width="63" height="36" fill="#e6e6e6"/>
<use href="#nb" x="811" y="81"/>
<text x="822.8" y="97" font-size="15" fill="#3c3c3c" text-anchor="middle" font-weight="bold">1</text>
<text x="823" y="107.9" font-size="6.6" fill="#444" text-anchor="middle" font-weight="bold" letter-spacing="0.3" textLength="14" lengthAdjust="spacingAndGlyphs">PRE</text>
<use href="#kG" x="852.3" y="93.5"/>
<text x="853" y="110.8" font-size="6.8" fill="#444" text-anchor="middle" font-weight="bold" letter-spacing="0.3" textLength="20" lengthAdjust="spacingAndGlyphs">LEVEL</text>
<rect x="806" y="113" width="63" height="36" fill="#d2d2d2"/>
<use href="#nb" x="811" y="117"/>
<text x="822.8" y="133" font-size="15" fill="#3c3c3c" text-anchor="middle" font-weight="bold">2</text>
<text x="823" y="143.9" font-size="6.6" fill="#444" text-anchor="middle" font-weight="bold" letter-spacing="0.3" textLength="14" lengthAdjust="spacingAndGlyphs">PRE</text>
<use href="#kG" x="852.3" y="129.5"/>
<text x="853" y="146.8" font-size="6.8" fill="#444" text-anchor="middle" font-weight="bold" letter-spacing="0.3" textLength="20" lengthAdjust="spacingAndGlyphs">LEVEL</text>
<rect x="806" y="149" width="63" height="36" fill="#e6e6e6"/>
<use href="#nb" x="811" y="153"/>
<text x="822.8" y="169" font-size="15" fill="#3c3c3c" text-anchor="middle" font-weight="bold">3</text>
<text x="823" y="179.9" font-size="6.6" fill="#444" text-anchor="middle" font-weight="bold" letter-spacing="0.3" textLength="14" lengthAdjust="spacingAndGlyphs">PRE</text>
<use href="#kG" x="852.3" y="165.5"/>
<text x="853" y="182.8" font-size="6.8" fill="#444" text-anchor="middle" font-weight="bold" letter-spacing="0.3" textLength="20" lengthAdjust="spacingAndGlyphs">LEVEL</text>
<rect x="806" y="185" width="63" height="36" fill="#d2d2d2"/>
<use href="#nb" x="811" y="189"/>
<text x="822.8" y="205" font-size="15" fill="#3c3c3c" text-anchor="middle" font-weight="bold">4</text>
<text x="823" y="215.9" font-size="6.6" fill="#444" text-anchor="middle" font-weight="bold" letter-spacing="0.3" textLength="14" lengthAdjust="spacingAndGlyphs">PRE</text>
<use href="#kG" x="852.3" y="201.5"/>
<text x="853" y="218.8" font-size="6.8" fill="#444" text-anchor="middle" font-weight="bold" letter-spacing="0.3" textLength="20" lengthAdjust="spacingAndGlyphs">LEVEL</text>
<rect x="806" y="221" width="63" height="36" fill="#e6e6e6"/>
<use href="#nb" x="811" y="225"/>
<text x="822.8" y="241" font-size="15" fill="#3c3c3c" text-anchor="middle" font-weight="bold">5</text>
<text x="823" y="251.9" font-size="6.6" fill="#444" text-anchor="middle" font-weight="bold" letter-spacing="0.3" textLength="14" lengthAdjust="spacingAndGlyphs">PRE</text>
<use href="#kG" x="852.3" y="237.5"/>
<text x="853" y="254.8" font-size="6.8" fill="#444" text-anchor="middle" font-weight="bold" letter-spacing="0.3" textLength="20" lengthAdjust="spacingAndGlyphs">LEVEL</text>
<rect x="806" y="257" width="63" height="36" fill="#d2d2d2"/>
<use href="#nb" x="811" y="261"/>
<text x="822.8" y="277" font-size="15" fill="#3c3c3c" text-anchor="middle" font-weight="bold">6</text>
<text x="823" y="287.9" font-size="6.6" fill="#444" text-anchor="middle" font-weight="bold" letter-spacing="0.3" textLength="14" lengthAdjust="spacingAndGlyphs">PRE</text>
<use href="#kG" x="852.3" y="273.5"/>
<text x="853" y="290.8" font-size="6.8" fill="#444" text-anchor="middle" font-weight="bold" letter-spacing="0.3" textLength="20" lengthAdjust="spacingAndGlyphs">LEVEL</text>
<rect x="806" y="293" width="63" height="36" fill="#e6e6e6"/>
<use href="#nb" x="811" y="297"/>
<text x="822.8" y="313" font-size="15" fill="#3c3c3c" text-anchor="middle" font-weight="bold">7</text>
<text x="823" y="323.9" font-size="6.6" fill="#444" text-anchor="middle" font-weight="bold" letter-spacing="0.3" textLength="14" lengthAdjust="spacingAndGlyphs">PRE</text>
<use href="#kG" x="852.3" y="309.5"/>
<text x="853" y="326.8" font-size="6.8" fill="#444" text-anchor="middle" font-weight="bold" letter-spacing="0.3" textLength="20" lengthAdjust="spacingAndGlyphs">LEVEL</text>
<rect x="806" y="329" width="63" height="36" fill="#d2d2d2"/>
<use href="#nb" x="811" y="333"/>
<text x="822.8" y="349" font-size="15" fill="#3c3c3c" text-anchor="middle" font-weight="bold">8</text>
<text x="823" y="359.9" font-size="6.6" fill="#444" text-anchor="middle" font-weight="bold" letter-spacing="0.3" textLength="14" lengthAdjust="spacingAndGlyphs">PRE</text>
<use href="#kG" x="852.3" y="345.5"/>
<text x="853" y="362.8" font-size="6.8" fill="#444" text-anchor="middle" font-weight="bold" letter-spacing="0.3" textLength="20" lengthAdjust="spacingAndGlyphs">LEVEL</text>
<rect x="806" y="76" width="63" height="2" fill="#000"/>
<rect x="806" y="365" width="63" height="2" fill="#000"/>
<rect x="806" y="367" width="63" height="8" fill="#6c8a42"/>
<text x="810.5" y="374.1" font-size="8.3" fill="#333" font-weight="bold" letter-spacing="0.8" textLength="26.4" lengthAdjust="spacingAndGlyphs">FADER</text>
<rect x="806" y="377" width="63" height="220" fill="#e6e6e6"/>
<use href="#kW" x="821" y="390.5"/>
<text x="821.7" y="409" font-size="6.6" fill="#4a4a4a" text-anchor="middle" font-weight="bold" letter-spacing="0.3" textLength="19.4" lengthAdjust="spacingAndGlyphs">WIDTH</text>
<use href="#pan" x="849.4" y="395"/>
<text x="840.3" y="416.7" font-size="6.6" fill="#444" text-anchor="middle" font-weight="bold">L</text>
<text x="859" y="416.7" font-size="6.6" fill="#444" text-anchor="middle" font-weight="bold">R</text>
<rect x="811.5" y="421.5" width="23" height="20" rx="1.5" fill="url(#gBtn3)" stroke="#858585"/>
<path d="M812.5 440.5V422.5H833.5" fill="none" stroke="#fff" stroke-opacity="0.85"/>
<text x="823.0" y="433.95" font-size="6.8" fill="#333" text-anchor="middle" font-weight="bold" letter-spacing="0.3" textLength="18.3" lengthAdjust="spacingAndGlyphs">MUTE</text>
<rect x="839.5" y="421.5" width="23" height="20" rx="1.5" fill="url(#gBtn3)" stroke="#858585"/>
<path d="M840.5 440.5V422.5H861.5" fill="none" stroke="#fff" stroke-opacity="0.85"/>
<text x="851.0" y="433.95" font-size="6.8" fill="#333" text-anchor="middle" font-weight="bold" letter-spacing="0.3" textLength="18.3" lengthAdjust="spacingAndGlyphs">SOLO</text>
<use href="#mtr" x="811" y="453"/>
<text x="828.7" y="463.0" font-size="6.9" fill="#1cb8de" font-weight="bold" letter-spacing="0.2">12</text>
<text x="828.7" y="479.0" font-size="6.9" fill="#1cb8de" font-weight="bold" letter-spacing="0.2">8</text>
<text x="828.7" y="495.0" font-size="6.9" fill="#1cb8de" font-weight="bold" letter-spacing="0.2">4</text>
<text x="828.7" y="511.2" font-size="6.9" fill="#1cb8de" font-weight="bold" letter-spacing="0.2">0</text>
<text x="828.7" y="530.8" font-size="6.9" fill="#1cb8de" font-weight="bold" letter-spacing="0.2">10</text>
<text x="828.7" y="551.3" font-size="6.9" fill="#1cb8de" font-weight="bold" letter-spacing="0.2">20</text>
<text x="828.7" y="571.1" font-size="6.9" fill="#1cb8de" font-weight="bold" letter-spacing="0.2">40</text>
<text x="828.7" y="587.0" font-size="6.9" fill="#1cb8de" font-weight="bold" letter-spacing="0.2">56</text>
<use href="#ftk" x="853.5" y="0"/>
<use href="#scr" x="853.5" y="463"/>
<use href="#scr" x="853.5" y="584"/>
<use href="#cap" x="847" y="484"/>
<rect x="807" y="599" width="61.5" height="5" fill="#e0160c"/>
<path d="M807 605H868V644Q868 648 864 648H811Q807 648 807 644Z" fill="#6c8a42"/>
<rect x="809.5" y="607.5" width="27" height="10" rx="1.5" fill="url(#gBtn2)" stroke="#666"/>
<path d="M810.5 616.5V608.5H835.5" fill="none" stroke="#fff" stroke-opacity="0.85"/>
<text x="823.0" y="614.88" font-size="6.6" fill="#333" text-anchor="middle" font-weight="bold" letter-spacing="0.4">SEQ</text>
<rect x="838.5" y="607.5" width="27" height="10" rx="1.5" fill="url(#gBtn2)" stroke="#666"/>
<path d="M839.5 616.5V608.5H864.5" fill="none" stroke="#fff" stroke-opacity="0.85"/>
<text x="852.0" y="614.88" font-size="6.6" fill="#333" text-anchor="middle" font-weight="bold" letter-spacing="0.4">RACK</text>
<text x="837" y="629.4" font-size="11.5" fill="#080808" text-anchor="middle" stroke="#080808" stroke-width="0.2">Timpani</text>
<text x="837" y="642.2" font-size="11.5" fill="#080808" text-anchor="middle" stroke="#080808" stroke-width="0.2">MIDI-</text>
<rect x="868.7" y="69" width="1.3" height="529" fill="#161616"/>
<rect x="806" y="78" width="0.8" height="287" fill="#fff" fill-opacity="0.55"/>
<rect x="806" y="377" width="0.8" height="220" fill="#fff" fill-opacity="0.55"/>
<rect x="870" y="69" width="63" height="7" fill="#5c6ca4"/>
<rect x="922" y="69" width="10" height="7" fill="#3a0606"/>
<rect x="932" y="69" width="1" height="7" fill="#1a0000"/>
<text x="873.7" y="75.1" font-size="8.2" fill="#333" font-weight="bold" letter-spacing="0.8" textLength="22.5" lengthAdjust="spacingAndGlyphs">SEND</text>
<rect x="870" y="77" width="63" height="36" fill="#e6e6e6"/>
<use href="#nb" x="875" y="81"/>
<text x="886.8" y="97" font-size="15" fill="#3c3c3c" text-anchor="middle" font-weight="bold">1</text>
<text x="887" y="107.9" font-size="6.6" fill="#444" text-anchor="middle" font-weight="bold" letter-spacing="0.3" textLength="14" lengthAdjust="spacingAndGlyphs">PRE</text>
<use href="#kG" x="916.3" y="93.5"/>
<text x="917" y="110.8" font-size="6.8" fill="#444" text-anchor="middle" font-weight="bold" letter-spacing="0.3" textLength="20" lengthAdjust="spacingAndGlyphs">LEVEL</text>
<rect x="870" y="113" width="63" height="36" fill="#d2d2d2"/>
<use href="#nb" x="875" y="117"/>
<text x="886.8" y="133" font-size="15" fill="#3c3c3c" text-anchor="middle" font-weight="bold">2</text>
<text x="887" y="143.9" font-size="6.6" fill="#444" text-anchor="middle" font-weight="bold" letter-spacing="0.3" textLength="14" lengthAdjust="spacingAndGlyphs">PRE</text>
<use href="#kG" x="916.3" y="129.5"/>
<text x="917" y="146.8" font-size="6.8" fill="#444" text-anchor="middle" font-weight="bold" letter-spacing="0.3" textLength="20" lengthAdjust="spacingAndGlyphs">LEVEL</text>
<rect x="870" y="149" width="63" height="36" fill="#e6e6e6"/>
<use href="#nb" x="875" y="153"/>
<text x="886.8" y="169" font-size="15" fill="#3c3c3c" text-anchor="middle" font-weight="bold">3</text>
<text x="887" y="179.9" font-size="6.6" fill="#444" text-anchor="middle" font-weight="bold" letter-spacing="0.3" textLength="14" lengthAdjust="spacingAndGlyphs">PRE</text>
<use href="#kG" x="916.3" y="165.5"/>
<text x="917" y="182.8" font-size="6.8" fill="#444" text-anchor="middle" font-weight="bold" letter-spacing="0.3" textLength="20" lengthAdjust="spacingAndGlyphs">LEVEL</text>
<rect x="870" y="185" width="63" height="36" fill="#d2d2d2"/>
<use href="#nb" x="875" y="189"/>
<text x="886.8" y="205" font-size="15" fill="#3c3c3c" text-anchor="middle" font-weight="bold">4</text>
<text x="887" y="215.9" font-size="6.6" fill="#444" text-anchor="middle" font-weight="bold" letter-spacing="0.3" textLength="14" lengthAdjust="spacingAndGlyphs">PRE</text>
<use href="#kG" x="916.3" y="201.5"/>
<text x="917" y="218.8" font-size="6.8" fill="#444" text-anchor="middle" font-weight="bold" letter-spacing="0.3" textLength="20" lengthAdjust="spacingAndGlyphs">LEVEL</text>
<rect x="870" y="221" width="63" height="36" fill="#e6e6e6"/>
<use href="#nb" x="875" y="225"/>
<text x="886.8" y="241" font-size="15" fill="#3c3c3c" text-anchor="middle" font-weight="bold">5</text>
<text x="887" y="251.9" font-size="6.6" fill="#444" text-anchor="middle" font-weight="bold" letter-spacing="0.3" textLength="14" lengthAdjust="spacingAndGlyphs">PRE</text>
<use href="#kG" x="916.3" y="237.5"/>
<text x="917" y="254.8" font-size="6.8" fill="#444" text-anchor="middle" font-weight="bold" letter-spacing="0.3" textLength="20" lengthAdjust="spacingAndGlyphs">LEVEL</text>
<rect x="870" y="257" width="63" height="36" fill="#d2d2d2"/>
<use href="#nb" x="875" y="261"/>
<text x="886.8" y="277" font-size="15" fill="#3c3c3c" text-anchor="middle" font-weight="bold">6</text>
<text x="887" y="287.9" font-size="6.6" fill="#444" text-anchor="middle" font-weight="bold" letter-spacing="0.3" textLength="14" lengthAdjust="spacingAndGlyphs">PRE</text>
<use href="#kG" x="916.3" y="273.5"/>
<text x="917" y="290.8" font-size="6.8" fill="#444" text-anchor="middle" font-weight="bold" letter-spacing="0.3" textLength="20" lengthAdjust="spacingAndGlyphs">LEVEL</text>
<rect x="870" y="293" width="63" height="36" fill="#e6e6e6"/>
<use href="#nb" x="875" y="297"/>
<text x="886.8" y="313" font-size="15" fill="#3c3c3c" text-anchor="middle" font-weight="bold">7</text>
<text x="887" y="323.9" font-size="6.6" fill="#444" text-anchor="middle" font-weight="bold" letter-spacing="0.3" textLength="14" lengthAdjust="spacingAndGlyphs">PRE</text>
<use href="#kG" x="916.3" y="309.5"/>
<text x="917" y="326.8" font-size="6.8" fill="#444" text-anchor="middle" font-weight="bold" letter-spacing="0.3" textLength="20" lengthAdjust="spacingAndGlyphs">LEVEL</text>
<rect x="870" y="329" width="63" height="36" fill="#d2d2d2"/>
<use href="#nb" x="875" y="333"/>
<text x="886.8" y="349" font-size="15" fill="#3c3c3c" text-anchor="middle" font-weight="bold">8</text>
<text x="887" y="359.9" font-size="6.6" fill="#444" text-anchor="middle" font-weight="bold" letter-spacing="0.3" textLength="14" lengthAdjust="spacingAndGlyphs">PRE</text>
<use href="#kG" x="916.3" y="345.5"/>
<text x="917" y="362.8" font-size="6.8" fill="#444" text-anchor="middle" font-weight="bold" letter-spacing="0.3" textLength="20" lengthAdjust="spacingAndGlyphs">LEVEL</text>
<rect x="870" y="76" width="63" height="2" fill="#000"/>
<rect x="870" y="365" width="63" height="2" fill="#000"/>
<rect x="870" y="367" width="63" height="8" fill="#5c6ca4"/>
<text x="874.5" y="374.1" font-size="8.3" fill="#333" font-weight="bold" letter-spacing="0.8" textLength="26.4" lengthAdjust="spacingAndGlyphs">FADER</text>
<rect x="870" y="377" width="63" height="220" fill="#e6e6e6"/>
<use href="#kW" x="885" y="390.5"/>
<text x="885.7" y="409" font-size="6.6" fill="#4a4a4a" text-anchor="middle" font-weight="bold" letter-spacing="0.3" textLength="19.4" lengthAdjust="spacingAndGlyphs">WIDTH</text>
<use href="#pan" x="913.4" y="395"/>
<text x="904.3" y="416.7" font-size="6.6" fill="#444" text-anchor="middle" font-weight="bold">L</text>
<text x="923" y="416.7" font-size="6.6" fill="#444" text-anchor="middle" font-weight="bold">R</text>
<rect x="875.5" y="421.5" width="23" height="20" rx="1.5" fill="url(#gBtn3)" stroke="#858585"/>
<path d="M876.5 440.5V422.5H897.5" fill="none" stroke="#fff" stroke-opacity="0.85"/>
<text x="887.0" y="433.95" font-size="6.8" fill="#333" text-anchor="middle" font-weight="bold" letter-spacing="0.3" textLength="18.3" lengthAdjust="spacingAndGlyphs">MUTE</text>
<rect x="903.5" y="421.5" width="23" height="20" rx="1.5" fill="url(#gBtn3)" stroke="#858585"/>
<path d="M904.5 440.5V422.5H925.5" fill="none" stroke="#fff" stroke-opacity="0.85"/>
<text x="915.0" y="433.95" font-size="6.8" fill="#333" text-anchor="middle" font-weight="bold" letter-spacing="0.3" textLength="18.3" lengthAdjust="spacingAndGlyphs">SOLO</text>
<use href="#mtr" x="875" y="453"/>
<text x="892.7" y="463.0" font-size="6.9" fill="#1cb8de" font-weight="bold" letter-spacing="0.2">12</text>
<text x="892.7" y="479.0" font-size="6.9" fill="#1cb8de" font-weight="bold" letter-spacing="0.2">8</text>
<text x="892.7" y="495.0" font-size="6.9" fill="#1cb8de" font-weight="bold" letter-spacing="0.2">4</text>
<text x="892.7" y="511.2" font-size="6.9" fill="#1cb8de" font-weight="bold" letter-spacing="0.2">0</text>
<text x="892.7" y="530.8" font-size="6.9" fill="#1cb8de" font-weight="bold" letter-spacing="0.2">10</text>
<text x="892.7" y="551.3" font-size="6.9" fill="#1cb8de" font-weight="bold" letter-spacing="0.2">20</text>
<text x="892.7" y="571.1" font-size="6.9" fill="#1cb8de" font-weight="bold" letter-spacing="0.2">40</text>
<text x="892.7" y="587.0" font-size="6.9" fill="#1cb8de" font-weight="bold" letter-spacing="0.2">56</text>
<use href="#ftk" x="917.5" y="0"/>
<use href="#scr" x="917.5" y="463"/>
<use href="#scr" x="917.5" y="584"/>
<use href="#cap" x="911" y="557"/>
<rect x="871" y="599" width="61.5" height="5" fill="#1e1e1e"/>
<path d="M871 605H932V644Q932 648 928 648H875Q871 648 871 644Z" fill="#5c6ca4"/>
<rect x="873.5" y="607.5" width="27" height="10" rx="1.5" fill="url(#gBtn2)" stroke="#666"/>
<path d="M874.5 616.5V608.5H899.5" fill="none" stroke="#fff" stroke-opacity="0.85"/>
<text x="887.0" y="614.88" font-size="6.6" fill="#333" text-anchor="middle" font-weight="bold" letter-spacing="0.4">SEQ</text>
<rect x="902.5" y="607.5" width="27" height="10" rx="1.5" fill="url(#gBtn2)" stroke="#666"/>
<path d="M903.5 616.5V608.5H928.5" fill="none" stroke="#fff" stroke-opacity="0.85"/>
<text x="916.0" y="614.88" font-size="6.6" fill="#333" text-anchor="middle" font-weight="bold" letter-spacing="0.4">RACK</text>
<text x="901" y="629.4" font-size="11.5" fill="#080808" text-anchor="middle" stroke="#080808" stroke-width="0.2">Keyclick</text>
<text x="901" y="642.2" font-size="11.5" fill="#080808" text-anchor="middle" stroke="#080808" stroke-width="0.2">MIDI-</text>
<rect x="932.7" y="69" width="1.3" height="529" fill="#161616"/>
<rect x="870" y="78" width="0.8" height="287" fill="#fff" fill-opacity="0.55"/>
<rect x="870" y="377" width="0.8" height="220" fill="#fff" fill-opacity="0.55"/>
<rect x="934" y="69" width="63" height="7" fill="#c483ac"/>
<rect x="986" y="69" width="10" height="7" fill="#3a0606"/>
<rect x="996" y="69" width="1" height="7" fill="#1a0000"/>
<text x="937.7" y="75.1" font-size="8.2" fill="#333" font-weight="bold" letter-spacing="0.8" textLength="22.5" lengthAdjust="spacingAndGlyphs">SEND</text>
<rect x="934" y="77" width="63" height="36" fill="#e6e6e6"/>
<use href="#nb" x="939" y="81"/>
<text x="950.8" y="97" font-size="15" fill="#3c3c3c" text-anchor="middle" font-weight="bold">1</text>
<text x="951" y="107.9" font-size="6.6" fill="#444" text-anchor="middle" font-weight="bold" letter-spacing="0.3" textLength="14" lengthAdjust="spacingAndGlyphs">PRE</text>
<use href="#kG" x="980.3" y="93.5"/>
<text x="981" y="110.8" font-size="6.8" fill="#444" text-anchor="middle" font-weight="bold" letter-spacing="0.3" textLength="20" lengthAdjust="spacingAndGlyphs">LEVEL</text>
<rect x="934" y="113" width="63" height="36" fill="#d2d2d2"/>
<use href="#nb" x="939" y="117"/>
<text x="950.8" y="133" font-size="15" fill="#3c3c3c" text-anchor="middle" font-weight="bold">2</text>
<text x="951" y="143.9" font-size="6.6" fill="#444" text-anchor="middle" font-weight="bold" letter-spacing="0.3" textLength="14" lengthAdjust="spacingAndGlyphs">PRE</text>
<use href="#kG" x="980.3" y="129.5"/>
<text x="981" y="146.8" font-size="6.8" fill="#444" text-anchor="middle" font-weight="bold" letter-spacing="0.3" textLength="20" lengthAdjust="spacingAndGlyphs">LEVEL</text>
<rect x="934" y="149" width="63" height="36" fill="#e6e6e6"/>
<use href="#nb" x="939" y="153"/>
<text x="950.8" y="169" font-size="15" fill="#3c3c3c" text-anchor="middle" font-weight="bold">3</text>
<text x="951" y="179.9" font-size="6.6" fill="#444" text-anchor="middle" font-weight="bold" letter-spacing="0.3" textLength="14" lengthAdjust="spacingAndGlyphs">PRE</text>
<use href="#kG" x="980.3" y="165.5"/>
<text x="981" y="182.8" font-size="6.8" fill="#444" text-anchor="middle" font-weight="bold" letter-spacing="0.3" textLength="20" lengthAdjust="spacingAndGlyphs">LEVEL</text>
<rect x="934" y="185" width="63" height="36" fill="#d2d2d2"/>
<use href="#nb" x="939" y="189"/>
<text x="950.8" y="205" font-size="15" fill="#3c3c3c" text-anchor="middle" font-weight="bold">4</text>
<text x="951" y="215.9" font-size="6.6" fill="#444" text-anchor="middle" font-weight="bold" letter-spacing="0.3" textLength="14" lengthAdjust="spacingAndGlyphs">PRE</text>
<use href="#kG" x="980.3" y="201.5"/>
<text x="981" y="218.8" font-size="6.8" fill="#444" text-anchor="middle" font-weight="bold" letter-spacing="0.3" textLength="20" lengthAdjust="spacingAndGlyphs">LEVEL</text>
<rect x="934" y="221" width="63" height="36" fill="#e6e6e6"/>
<use href="#nb" x="939" y="225"/>
<text x="950.8" y="241" font-size="15" fill="#3c3c3c" text-anchor="middle" font-weight="bold">5</text>
<text x="951" y="251.9" font-size="6.6" fill="#444" text-anchor="middle" font-weight="bold" letter-spacing="0.3" textLength="14" lengthAdjust="spacingAndGlyphs">PRE</text>
<use href="#kG" x="980.3" y="237.5"/>
<text x="981" y="254.8" font-size="6.8" fill="#444" text-anchor="middle" font-weight="bold" letter-spacing="0.3" textLength="20" lengthAdjust="spacingAndGlyphs">LEVEL</text>
<rect x="934" y="257" width="63" height="36" fill="#d2d2d2"/>
<use href="#nb" x="939" y="261"/>
<text x="950.8" y="277" font-size="15" fill="#3c3c3c" text-anchor="middle" font-weight="bold">6</text>
<text x="951" y="287.9" font-size="6.6" fill="#444" text-anchor="middle" font-weight="bold" letter-spacing="0.3" textLength="14" lengthAdjust="spacingAndGlyphs">PRE</text>
<use href="#kG" x="980.3" y="273.5"/>
<text x="981" y="290.8" font-size="6.8" fill="#444" text-anchor="middle" font-weight="bold" letter-spacing="0.3" textLength="20" lengthAdjust="spacingAndGlyphs">LEVEL</text>
<rect x="934" y="293" width="63" height="36" fill="#e6e6e6"/>
<use href="#nb" x="939" y="297"/>
<text x="950.8" y="313" font-size="15" fill="#3c3c3c" text-anchor="middle" font-weight="bold">7</text>
<text x="951" y="323.9" font-size="6.6" fill="#444" text-anchor="middle" font-weight="bold" letter-spacing="0.3" textLength="14" lengthAdjust="spacingAndGlyphs">PRE</text>
<use href="#kG" x="980.3" y="309.5"/>
<text x="981" y="326.8" font-size="6.8" fill="#444" text-anchor="middle" font-weight="bold" letter-spacing="0.3" textLength="20" lengthAdjust="spacingAndGlyphs">LEVEL</text>
<rect x="934" y="329" width="63" height="36" fill="#d2d2d2"/>
<use href="#nb" x="939" y="333"/>
<text x="950.8" y="349" font-size="15" fill="#3c3c3c" text-anchor="middle" font-weight="bold">8</text>
<text x="951" y="359.9" font-size="6.6" fill="#444" text-anchor="middle" font-weight="bold" letter-spacing="0.3" textLength="14" lengthAdjust="spacingAndGlyphs">PRE</text>
<use href="#kG" x="980.3" y="345.5"/>
<text x="981" y="362.8" font-size="6.8" fill="#444" text-anchor="middle" font-weight="bold" letter-spacing="0.3" textLength="20" lengthAdjust="spacingAndGlyphs">LEVEL</text>
<rect x="934" y="76" width="63" height="2" fill="#000"/>
<rect x="934" y="365" width="63" height="2" fill="#000"/>
<rect x="934" y="367" width="63" height="8" fill="#c483ac"/>
<text x="938.5" y="374.1" font-size="8.3" fill="#333" font-weight="bold" letter-spacing="0.8" textLength="26.4" lengthAdjust="spacingAndGlyphs">FADER</text>
<rect x="934" y="377" width="63" height="220" fill="#e6e6e6"/>
<use href="#kW" x="949" y="390.5"/>
<text x="949.7" y="409" font-size="6.6" fill="#4a4a4a" text-anchor="middle" font-weight="bold" letter-spacing="0.3" textLength="19.4" lengthAdjust="spacingAndGlyphs">WIDTH</text>
<use href="#pan" x="977.4" y="395"/>
<text x="968.3" y="416.7" font-size="6.6" fill="#444" text-anchor="middle" font-weight="bold">L</text>
<text x="987" y="416.7" font-size="6.6" fill="#444" text-anchor="middle" font-weight="bold">R</text>
<rect x="939.5" y="421.5" width="23" height="20" rx="1.5" fill="url(#gBtn3)" stroke="#858585"/>
<path d="M940.5 440.5V422.5H961.5" fill="none" stroke="#fff" stroke-opacity="0.85"/>
<text x="951.0" y="433.95" font-size="6.8" fill="#333" text-anchor="middle" font-weight="bold" letter-spacing="0.3" textLength="18.3" lengthAdjust="spacingAndGlyphs">MUTE</text>
<rect x="967.5" y="421.5" width="23" height="20" rx="1.5" fill="url(#gBtn3)" stroke="#858585"/>
<path d="M968.5 440.5V422.5H989.5" fill="none" stroke="#fff" stroke-opacity="0.85"/>
<text x="979.0" y="433.95" font-size="6.8" fill="#333" text-anchor="middle" font-weight="bold" letter-spacing="0.3" textLength="18.3" lengthAdjust="spacingAndGlyphs">SOLO</text>
<use href="#mtr" x="939" y="453"/>
<text x="956.7" y="463.0" font-size="6.9" fill="#1cb8de" font-weight="bold" letter-spacing="0.2">12</text>
<text x="956.7" y="479.0" font-size="6.9" fill="#1cb8de" font-weight="bold" letter-spacing="0.2">8</text>
<text x="956.7" y="495.0" font-size="6.9" fill="#1cb8de" font-weight="bold" letter-spacing="0.2">4</text>
<text x="956.7" y="511.2" font-size="6.9" fill="#1cb8de" font-weight="bold" letter-spacing="0.2">0</text>
<text x="956.7" y="530.8" font-size="6.9" fill="#1cb8de" font-weight="bold" letter-spacing="0.2">10</text>
<text x="956.7" y="551.3" font-size="6.9" fill="#1cb8de" font-weight="bold" letter-spacing="0.2">20</text>
<text x="956.7" y="571.1" font-size="6.9" fill="#1cb8de" font-weight="bold" letter-spacing="0.2">40</text>
<text x="956.7" y="587.0" font-size="6.9" fill="#1cb8de" font-weight="bold" letter-spacing="0.2">56</text>
<use href="#ftk" x="981.5" y="0"/>
<use href="#scr" x="981.5" y="463"/>
<use href="#scr" x="981.5" y="584"/>
<use href="#cap" x="975" y="484"/>
<rect x="935" y="599" width="61.5" height="5" fill="#1e1e1e"/>
<path d="M935 605H996V644Q996 648 992 648H939Q935 648 935 644Z" fill="#c483ac"/>
<rect x="937.5" y="607.5" width="27" height="10" rx="1.5" fill="url(#gBtn2)" stroke="#666"/>
<path d="M938.5 616.5V608.5H963.5" fill="none" stroke="#fff" stroke-opacity="0.85"/>
<text x="951.0" y="614.88" font-size="6.6" fill="#333" text-anchor="middle" font-weight="bold" letter-spacing="0.4">SEQ</text>
<rect x="966.5" y="607.5" width="27" height="10" rx="1.5" fill="url(#gBtn2)" stroke="#666"/>
<path d="M967.5 616.5V608.5H992.5" fill="none" stroke="#fff" stroke-opacity="0.85"/>
<text x="980.0" y="614.88" font-size="6.6" fill="#333" text-anchor="middle" font-weight="bold" letter-spacing="0.4">RACK</text>
<text x="965" y="629.4" font-size="11.5" fill="#080808" text-anchor="middle" stroke="#080808" stroke-width="0.2">Organ</text>
<text x="965" y="642.2" font-size="11.5" fill="#080808" text-anchor="middle" stroke="#080808" stroke-width="0.2">MIDI-</text>
<rect x="996.7" y="69" width="1.3" height="529" fill="#161616"/>
<rect x="934" y="78" width="0.8" height="287" fill="#fff" fill-opacity="0.55"/>
<rect x="934" y="377" width="0.8" height="220" fill="#fff" fill-opacity="0.55"/>
<path d="M487 599H503L508 601.5L503 604H487Z" fill="#f2e21c"/>
<circle cx="491.5" cy="601.5" r="1.8" fill="#111"/>
<rect x="998" y="69" width="1" height="581" fill="#1a1a1a"/>
<rect x="999" y="77" width="158" height="36" fill="#e8e8e8"/>
<rect x="1004.5" y="81.5" width="71" height="13" rx="2" fill="#f4f4f4" stroke="#a4a4a4"/>
<line x1="1006" y1="82.5" x2="1074" y2="82.5" stroke="#c8c8c8"/>
<text x="1008.5" y="109" font-size="14" fill="#8c8c8c" text-anchor="middle" font-weight="bold">1</text>
<rect x="1022.5" y="97.5" width="37" height="12" rx="1.5" fill="url(#gBtn2)" stroke="#8a8a8a"/>
<path d="M1023.5 108.5V98.5H1058.5" fill="none" stroke="#fff" stroke-opacity="0.85"/>
<text x="1041.0" y="105.95" font-size="6.8" fill="#333" text-anchor="middle" font-weight="bold" letter-spacing="0.5">EDIT</text>
<rect x="1063.5" y="97.5" width="12" height="12" rx="1.5" fill="url(#gBtn2)" stroke="#8a8a8a"/>
<path d="M1064.5 108.5V98.5H1074.5" fill="none" stroke="#fff" stroke-opacity="0.85"/>
<text x="1069.5" y="105.95" font-size="6.8" fill="#333" text-anchor="middle" font-weight="bold" letter-spacing="0">M</text>
<use href="#kB" x="1092" y="92.5"/>
<use href="#kR" x="1121" y="92.5"/>
<text x="1092.5" y="110.8" font-size="6.8" fill="#444" text-anchor="middle" font-weight="bold" letter-spacing="0.3" textLength="20" lengthAdjust="spacingAndGlyphs">LEVEL</text>
<text x="1122" y="110.8" font-size="6.8" fill="#444" text-anchor="middle" font-weight="bold" letter-spacing="0.3" textLength="12.5" lengthAdjust="spacingAndGlyphs">PAN</text>
<use href="#led3" x="1138" y="81"/>
<rect x="999" y="113" width="158" height="36" fill="#d4d4d4"/>
<rect x="1004.5" y="117.5" width="71" height="13" rx="2" fill="#f4f4f4" stroke="#a4a4a4"/>
<line x1="1006" y1="118.5" x2="1074" y2="118.5" stroke="#c8c8c8"/>
<text x="1008.5" y="145" font-size="14" fill="#8c8c8c" text-anchor="middle" font-weight="bold">2</text>
<rect x="1022.5" y="133.5" width="37" height="12" rx="1.5" fill="url(#gBtn2)" stroke="#8a8a8a"/>
<path d="M1023.5 144.5V134.5H1058.5" fill="none" stroke="#fff" stroke-opacity="0.85"/>
<text x="1041.0" y="141.95" font-size="6.8" fill="#333" text-anchor="middle" font-weight="bold" letter-spacing="0.5">EDIT</text>
<rect x="1063.5" y="133.5" width="12" height="12" rx="1.5" fill="url(#gBtn2)" stroke="#8a8a8a"/>
<path d="M1064.5 144.5V134.5H1074.5" fill="none" stroke="#fff" stroke-opacity="0.85"/>
<text x="1069.5" y="141.95" font-size="6.8" fill="#333" text-anchor="middle" font-weight="bold" letter-spacing="0">M</text>
<use href="#kB" x="1092" y="128.5"/>
<use href="#kR" x="1121" y="128.5"/>
<text x="1092.5" y="146.8" font-size="6.8" fill="#444" text-anchor="middle" font-weight="bold" letter-spacing="0.3" textLength="20" lengthAdjust="spacingAndGlyphs">LEVEL</text>
<text x="1122" y="146.8" font-size="6.8" fill="#444" text-anchor="middle" font-weight="bold" letter-spacing="0.3" textLength="12.5" lengthAdjust="spacingAndGlyphs">PAN</text>
<use href="#led3" x="1138" y="117"/>
<rect x="999" y="149" width="158" height="36" fill="#e8e8e8"/>
<rect x="1004.5" y="153.5" width="71" height="13" rx="2" fill="#f4f4f4" stroke="#a4a4a4"/>
<line x1="1006" y1="154.5" x2="1074" y2="154.5" stroke="#c8c8c8"/>
<text x="1008.5" y="181" font-size="14" fill="#8c8c8c" text-anchor="middle" font-weight="bold">3</text>
<rect x="1022.5" y="169.5" width="37" height="12" rx="1.5" fill="url(#gBtn2)" stroke="#8a8a8a"/>
<path d="M1023.5 180.5V170.5H1058.5" fill="none" stroke="#fff" stroke-opacity="0.85"/>
<text x="1041.0" y="177.95" font-size="6.8" fill="#333" text-anchor="middle" font-weight="bold" letter-spacing="0.5">EDIT</text>
<rect x="1063.5" y="169.5" width="12" height="12" rx="1.5" fill="url(#gBtn2)" stroke="#8a8a8a"/>
<path d="M1064.5 180.5V170.5H1074.5" fill="none" stroke="#fff" stroke-opacity="0.85"/>
<text x="1069.5" y="177.95" font-size="6.8" fill="#333" text-anchor="middle" font-weight="bold" letter-spacing="0">M</text>
<use href="#kB" x="1092" y="164.5"/>
<use href="#kR" x="1121" y="164.5"/>
<text x="1092.5" y="182.8" font-size="6.8" fill="#444" text-anchor="middle" font-weight="bold" letter-spacing="0.3" textLength="20" lengthAdjust="spacingAndGlyphs">LEVEL</text>
<text x="1122" y="182.8" font-size="6.8" fill="#444" text-anchor="middle" font-weight="bold" letter-spacing="0.3" textLength="12.5" lengthAdjust="spacingAndGlyphs">PAN</text>
<use href="#led3" x="1138" y="153"/>
<rect x="999" y="185" width="158" height="36" fill="#d4d4d4"/>
<rect x="1004.5" y="189.5" width="71" height="13" rx="2" fill="#f4f4f4" stroke="#a4a4a4"/>
<line x1="1006" y1="190.5" x2="1074" y2="190.5" stroke="#c8c8c8"/>
<text x="1008.5" y="217" font-size="14" fill="#8c8c8c" text-anchor="middle" font-weight="bold">4</text>
<rect x="1022.5" y="205.5" width="37" height="12" rx="1.5" fill="url(#gBtn2)" stroke="#8a8a8a"/>
<path d="M1023.5 216.5V206.5H1058.5" fill="none" stroke="#fff" stroke-opacity="0.85"/>
<text x="1041.0" y="213.95" font-size="6.8" fill="#333" text-anchor="middle" font-weight="bold" letter-spacing="0.5">EDIT</text>
<rect x="1063.5" y="205.5" width="12" height="12" rx="1.5" fill="url(#gBtn2)" stroke="#8a8a8a"/>
<path d="M1064.5 216.5V206.5H1074.5" fill="none" stroke="#fff" stroke-opacity="0.85"/>
<text x="1069.5" y="213.95" font-size="6.8" fill="#333" text-anchor="middle" font-weight="bold" letter-spacing="0">M</text>
<use href="#kB" x="1092" y="200.5"/>
<use href="#kR" x="1121" y="200.5"/>
<text x="1092.5" y="218.8" font-size="6.8" fill="#444" text-anchor="middle" font-weight="bold" letter-spacing="0.3" textLength="20" lengthAdjust="spacingAndGlyphs">LEVEL</text>
<text x="1122" y="218.8" font-size="6.8" fill="#444" text-anchor="middle" font-weight="bold" letter-spacing="0.3" textLength="12.5" lengthAdjust="spacingAndGlyphs">PAN</text>
<use href="#led3" x="1138" y="189"/>
<rect x="999" y="221" width="158" height="36" fill="#e8e8e8"/>
<rect x="1004.5" y="225.5" width="71" height="13" rx="2" fill="#f4f4f4" stroke="#a4a4a4"/>
<line x1="1006" y1="226.5" x2="1074" y2="226.5" stroke="#c8c8c8"/>
<text x="1008.5" y="253" font-size="14" fill="#8c8c8c" text-anchor="middle" font-weight="bold">5</text>
<rect x="1022.5" y="241.5" width="37" height="12" rx="1.5" fill="url(#gBtn2)" stroke="#8a8a8a"/>
<path d="M1023.5 252.5V242.5H1058.5" fill="none" stroke="#fff" stroke-opacity="0.85"/>
<text x="1041.0" y="249.95" font-size="6.8" fill="#333" text-anchor="middle" font-weight="bold" letter-spacing="0.5">EDIT</text>
<rect x="1063.5" y="241.5" width="12" height="12" rx="1.5" fill="url(#gBtn2)" stroke="#8a8a8a"/>
<path d="M1064.5 252.5V242.5H1074.5" fill="none" stroke="#fff" stroke-opacity="0.85"/>
<text x="1069.5" y="249.95" font-size="6.8" fill="#333" text-anchor="middle" font-weight="bold" letter-spacing="0">M</text>
<use href="#kB" x="1092" y="236.5"/>
<use href="#kR" x="1121" y="236.5"/>
<text x="1092.5" y="254.8" font-size="6.8" fill="#444" text-anchor="middle" font-weight="bold" letter-spacing="0.3" textLength="20" lengthAdjust="spacingAndGlyphs">LEVEL</text>
<text x="1122" y="254.8" font-size="6.8" fill="#444" text-anchor="middle" font-weight="bold" letter-spacing="0.3" textLength="12.5" lengthAdjust="spacingAndGlyphs">PAN</text>
<use href="#led3" x="1138" y="225"/>
<rect x="999" y="257" width="158" height="36" fill="#d4d4d4"/>
<rect x="1004.5" y="261.5" width="71" height="13" rx="2" fill="#f4f4f4" stroke="#a4a4a4"/>
<line x1="1006" y1="262.5" x2="1074" y2="262.5" stroke="#c8c8c8"/>
<text x="1008.5" y="289" font-size="14" fill="#8c8c8c" text-anchor="middle" font-weight="bold">6</text>
<rect x="1022.5" y="277.5" width="37" height="12" rx="1.5" fill="url(#gBtn2)" stroke="#8a8a8a"/>
<path d="M1023.5 288.5V278.5H1058.5" fill="none" stroke="#fff" stroke-opacity="0.85"/>
<text x="1041.0" y="285.95" font-size="6.8" fill="#333" text-anchor="middle" font-weight="bold" letter-spacing="0.5">EDIT</text>
<rect x="1063.5" y="277.5" width="12" height="12" rx="1.5" fill="url(#gBtn2)" stroke="#8a8a8a"/>
<path d="M1064.5 288.5V278.5H1074.5" fill="none" stroke="#fff" stroke-opacity="0.85"/>
<text x="1069.5" y="285.95" font-size="6.8" fill="#333" text-anchor="middle" font-weight="bold" letter-spacing="0">M</text>
<use href="#kB" x="1092" y="272.5"/>
<use href="#kR" x="1121" y="272.5"/>
<text x="1092.5" y="290.8" font-size="6.8" fill="#444" text-anchor="middle" font-weight="bold" letter-spacing="0.3" textLength="20" lengthAdjust="spacingAndGlyphs">LEVEL</text>
<text x="1122" y="290.8" font-size="6.8" fill="#444" text-anchor="middle" font-weight="bold" letter-spacing="0.3" textLength="12.5" lengthAdjust="spacingAndGlyphs">PAN</text>
<use href="#led3" x="1138" y="261"/>
<rect x="999" y="293" width="158" height="36" fill="#e8e8e8"/>
<rect x="1004.5" y="297.5" width="71" height="13" rx="2" fill="#f4f4f4" stroke="#a4a4a4"/>
<line x1="1006" y1="298.5" x2="1074" y2="298.5" stroke="#c8c8c8"/>
<text x="1008.5" y="325" font-size="14" fill="#8c8c8c" text-anchor="middle" font-weight="bold">7</text>
<rect x="1022.5" y="313.5" width="37" height="12" rx="1.5" fill="url(#gBtn2)" stroke="#8a8a8a"/>
<path d="M1023.5 324.5V314.5H1058.5" fill="none" stroke="#fff" stroke-opacity="0.85"/>
<text x="1041.0" y="321.95" font-size="6.8" fill="#333" text-anchor="middle" font-weight="bold" letter-spacing="0.5">EDIT</text>
<rect x="1063.5" y="313.5" width="12" height="12" rx="1.5" fill="url(#gBtn2)" stroke="#8a8a8a"/>
<path d="M1064.5 324.5V314.5H1074.5" fill="none" stroke="#fff" stroke-opacity="0.85"/>
<text x="1069.5" y="321.95" font-size="6.8" fill="#333" text-anchor="middle" font-weight="bold" letter-spacing="0">M</text>
<use href="#kB" x="1092" y="308.5"/>
<use href="#kR" x="1121" y="308.5"/>
<text x="1092.5" y="326.8" font-size="6.8" fill="#444" text-anchor="middle" font-weight="bold" letter-spacing="0.3" textLength="20" lengthAdjust="spacingAndGlyphs">LEVEL</text>
<text x="1122" y="326.8" font-size="6.8" fill="#444" text-anchor="middle" font-weight="bold" letter-spacing="0.3" textLength="12.5" lengthAdjust="spacingAndGlyphs">PAN</text>
<use href="#led3" x="1138" y="297"/>
<rect x="999" y="329" width="158" height="36" fill="#d4d4d4"/>
<rect x="1004.5" y="333.5" width="71" height="13" rx="2" fill="#f4f4f4" stroke="#a4a4a4"/>
<line x1="1006" y1="334.5" x2="1074" y2="334.5" stroke="#c8c8c8"/>
<text x="1008.5" y="361" font-size="14" fill="#8c8c8c" text-anchor="middle" font-weight="bold">8</text>
<rect x="1022.5" y="349.5" width="37" height="12" rx="1.5" fill="url(#gBtn2)" stroke="#8a8a8a"/>
<path d="M1023.5 360.5V350.5H1058.5" fill="none" stroke="#fff" stroke-opacity="0.85"/>
<text x="1041.0" y="357.95" font-size="6.8" fill="#333" text-anchor="middle" font-weight="bold" letter-spacing="0.5">EDIT</text>
<rect x="1063.5" y="349.5" width="12" height="12" rx="1.5" fill="url(#gBtn2)" stroke="#8a8a8a"/>
<path d="M1064.5 360.5V350.5H1074.5" fill="none" stroke="#fff" stroke-opacity="0.85"/>
<text x="1069.5" y="357.95" font-size="6.8" fill="#333" text-anchor="middle" font-weight="bold" letter-spacing="0">M</text>
<use href="#kB" x="1092" y="344.5"/>
<use href="#kR" x="1121" y="344.5"/>
<text x="1092.5" y="362.8" font-size="6.8" fill="#444" text-anchor="middle" font-weight="bold" letter-spacing="0.3" textLength="20" lengthAdjust="spacingAndGlyphs">LEVEL</text>
<text x="1122" y="362.8" font-size="6.8" fill="#444" text-anchor="middle" font-weight="bold" letter-spacing="0.3" textLength="12.5" lengthAdjust="spacingAndGlyphs">PAN</text>
<use href="#led3" x="1138" y="333"/>
<rect x="999" y="69" width="158" height="8" fill="#050505"/>
<rect x="999" y="76" width="158" height="1.5" fill="#2a2a2a"/>
<text x="1003" y="75.1" font-size="8.2" fill="#f0f0f0" font-weight="bold" letter-spacing="0.9" textLength="42.5" lengthAdjust="spacingAndGlyphs">FX RETURN</text>
<rect x="999" y="366" width="158" height="11" fill="#050505"/>
<text x="1003" y="374.1" font-size="8.3" fill="#f0f0f0" font-weight="bold" letter-spacing="0.9" textLength="26" lengthAdjust="spacingAndGlyphs">FADER</text>
<rect x="999" y="377" width="158" height="220" fill="#e6e6e6"/>
<rect x="1110" y="377" width="47" height="220" fill="#d0d0d0"/>
<rect x="1109" y="377" width="1" height="220" fill="#bdbdbd"/>
<rect x="1004" y="382" width="47" height="208" rx="2.5" fill="#000"/>
<path d="M1005 385Q1005 383 1007 383H1048Q1050 383 1050 385V478Q1030 485 1005 491Z" fill="url(#gMeter)"/>
<rect x="1022" y="413" width="11" height="127" fill="url(#pLedM)"/>
<rect x="1022" y="405" width="4" height="3" fill="#4a4e48"/>
<rect x="1029" y="405" width="4" height="3" fill="#4a4e48"/>
<rect x="1008.5" y="390.5" width="38" height="10" fill="none" stroke="#2fa038"/>
<text x="1027.5" y="398.3" font-size="7" fill="#2fa038" text-anchor="middle" font-weight="bold" letter-spacing="0.8">RESET</text>
<rect x="1008.5" y="572.5" width="38" height="10" fill="none" stroke="#2fa038"/>
<text x="1027.5" y="580.3" font-size="7" fill="#2fa038" text-anchor="middle" font-weight="bold" letter-spacing="0.8">MODE</text>
<text x="1019.5" y="417.09999999999997" font-size="7.4" fill="#19b6e2" text-anchor="end" font-weight="bold" letter-spacing="0">12</text>
<text x="1039.5" y="417.09999999999997" font-size="7.4" fill="#f08018" text-anchor="middle" font-weight="bold" letter-spacing="0">0</text>
<text x="1019.5" y="433.4" font-size="7.4" fill="#19b6e2" text-anchor="end" font-weight="bold" letter-spacing="0">8</text>
<text x="1039.5" y="433.4" font-size="7.4" fill="#f08018" text-anchor="middle" font-weight="bold" letter-spacing="0">4</text>
<text x="1019.5" y="449.2" font-size="7.4" fill="#19b6e2" text-anchor="end" font-weight="bold" letter-spacing="0">4</text>
<text x="1039.5" y="449.2" font-size="7.4" fill="#f08018" text-anchor="middle" font-weight="bold" letter-spacing="0">8</text>
<text x="1019.5" y="465.09999999999997" font-size="7.4" fill="#19b6e2" text-anchor="end" font-weight="bold" letter-spacing="0">0</text>
<text x="1039.5" y="465.09999999999997" font-size="7.4" fill="#f08018" text-anchor="middle" font-weight="bold" letter-spacing="0">12</text>
<text x="1019.5" y="485.3" font-size="7.4" fill="#19b6e2" text-anchor="end" font-weight="bold" letter-spacing="0">10</text>
<text x="1039.5" y="485.3" font-size="7.4" fill="#f08018" text-anchor="middle" font-weight="bold" letter-spacing="0">22</text>
<text x="1019.5" y="505.0" font-size="7.4" fill="#19b6e2" text-anchor="end" font-weight="bold" letter-spacing="0">20</text>
<text x="1039.5" y="505.0" font-size="7.4" fill="#f08018" text-anchor="middle" font-weight="bold" letter-spacing="0">32</text>
<text x="1019.5" y="525.3000000000001" font-size="7.4" fill="#19b6e2" text-anchor="end" font-weight="bold" letter-spacing="0">40</text>
<text x="1039.5" y="525.3000000000001" font-size="7.4" fill="#f08018" text-anchor="middle" font-weight="bold" letter-spacing="0">52</text>
<text x="1019.5" y="541.1" font-size="7.4" fill="#19b6e2" text-anchor="end" font-weight="bold" letter-spacing="0">56</text>
<text x="1039.5" y="541.1" font-size="7.4" fill="#f08018" text-anchor="middle" font-weight="bold" letter-spacing="0">68</text>
<text x="1027.5" y="554.3" font-size="7.4" fill="#19b6e2" text-anchor="middle" font-weight="bold" letter-spacing="0.4">VU</text>
<text x="1027.5" y="561" font-size="7.4" fill="#f08018" text-anchor="middle" font-weight="bold" letter-spacing="0.4">PEAK</text>
<path d="M1014.5 545V551.5H1020" fill="none" stroke="#19b6e2"/>
<path d="M1040.5 545V558.5H1038" fill="none" stroke="#f08018"/>
<line x1="1069.5" y1="403.5" x2="1074.5" y2="403.5" stroke="#a4a4bc" stroke-width="1" />
<line x1="1084.5" y1="403.5" x2="1089.5" y2="403.5" stroke="#a4a4bc" stroke-width="1" />
<line x1="1063.5" y1="449.5" x2="1095.5" y2="449.5" stroke="#8d8da0" stroke-width="1" />
<line x1="1069.5" y1="502.5" x2="1074.5" y2="502.5" stroke="#a4a4bc" stroke-width="1" />
<line x1="1084.5" y1="502.5" x2="1089.5" y2="502.5" stroke="#a4a4bc" stroke-width="1" />
<line x1="1069.5" y1="531.5" x2="1074.5" y2="531.5" stroke="#a4a4bc" stroke-width="1" />
<line x1="1084.5" y1="531.5" x2="1089.5" y2="531.5" stroke="#a4a4bc" stroke-width="1" />
<line x1="1069.5" y1="552.5" x2="1074.5" y2="552.5" stroke="#a4a4bc" stroke-width="1" />
<line x1="1084.5" y1="552.5" x2="1089.5" y2="552.5" stroke="#a4a4bc" stroke-width="1" />
<line x1="1069.5" y1="564.5" x2="1074.5" y2="564.5" stroke="#a4a4bc" stroke-width="1" />
<line x1="1084.5" y1="564.5" x2="1089.5" y2="564.5" stroke="#a4a4bc" stroke-width="1" />
<line x1="1069.5" y1="569.5" x2="1074.5" y2="569.5" stroke="#a4a4bc" stroke-width="1" />
<line x1="1084.5" y1="569.5" x2="1089.5" y2="569.5" stroke="#a4a4bc" stroke-width="1" />
<line x1="1069.5" y1="573.5" x2="1074.5" y2="573.5" stroke="#a4a4bc" stroke-width="1" />
<line x1="1084.5" y1="573.5" x2="1089.5" y2="573.5" stroke="#a4a4bc" stroke-width="1" />
<rect x="1078.0" y="399" width="3" height="178.5" fill="#161616"/>
<rect x="1081.0" y="399" width="1" height="178.5" fill="#fff"/>
<use href="#scr" x="1079.5" y="391.5"/>
<use href="#scr" x="1079.5" y="584"/>
<use href="#cap" x="1073" y="432"/>
<text x="1132.7" y="389.3" font-size="6.8" fill="#555" text-anchor="middle" font-weight="bold" letter-spacing="0.9" textLength="37.3" lengthAdjust="spacingAndGlyphs">CONTROL</text>
<text x="1132.7" y="397.05" font-size="6.8" fill="#555" text-anchor="middle" font-weight="bold" letter-spacing="0.9" textLength="23.5" lengthAdjust="spacingAndGlyphs">ROOM</text>
<text x="1132.7" y="404.8" font-size="6.8" fill="#555" text-anchor="middle" font-weight="bold" letter-spacing="0.9" textLength="15.5" lengthAdjust="spacingAndGlyphs">OUT</text>
<line x1="1126.00" y1="432.03" x2="1124.70" y2="434.28" stroke="#9a9a9a" stroke-width="1"/>
<line x1="1121.97" y1="428.00" x2="1119.72" y2="429.30" stroke="#9a9a9a" stroke-width="1"/>
<line x1="1120.50" y1="422.50" x2="1117.90" y2="422.50" stroke="#9a9a9a" stroke-width="1"/>
<line x1="1121.97" y1="417.00" x2="1119.72" y2="415.70" stroke="#9a9a9a" stroke-width="1"/>
<line x1="1126.00" y1="412.97" x2="1124.70" y2="410.72" stroke="#9a9a9a" stroke-width="1"/>
<line x1="1131.50" y1="411.50" x2="1131.50" y2="408.90" stroke="#9a9a9a" stroke-width="1"/>
<line x1="1137.00" y1="412.97" x2="1138.30" y2="410.72" stroke="#9a9a9a" stroke-width="1"/>
<line x1="1141.03" y1="417.00" x2="1143.28" y2="415.70" stroke="#9a9a9a" stroke-width="1"/>
<line x1="1142.50" y1="422.50" x2="1145.10" y2="422.50" stroke="#9a9a9a" stroke-width="1"/>
<line x1="1141.03" y1="428.00" x2="1143.28" y2="429.30" stroke="#9a9a9a" stroke-width="1"/>
<line x1="1137.00" y1="432.03" x2="1138.30" y2="434.28" stroke="#9a9a9a" stroke-width="1"/>
<circle cx="1136.34" cy="427.96" r="11.44" fill="url(#gShadow)"/>
<circle cx="1131.5" cy="422.5" r="8.8" fill="#15251a"/>
<circle cx="1131.5" cy="422.5" r="7.70" fill="url(#gDark)"/>
<line x1="1133.26" y1="422.50" x2="1139.86" y2="422.50" stroke="#fff" stroke-width="1.5" stroke-opacity="0.9"/>
<text x="1131.8" y="443.9" font-size="6.8" fill="#444" text-anchor="middle" font-weight="bold" letter-spacing="0.6" textLength="20.4" lengthAdjust="spacingAndGlyphs">LEVEL</text>
<rect x="1113.5" y="449.5" width="37" height="12" rx="1.5" fill="#a4d4fb" stroke="#3a8ae0"/>
<text x="1132" y="458" font-size="6.8" fill="#223" text-anchor="middle" font-weight="bold" letter-spacing="0.6" textLength="28.6" lengthAdjust="spacingAndGlyphs">MASTER</text>
<rect x="1113.5" y="468.5" width="37" height="11" rx="1.5" fill="url(#gBtn2)" stroke="#777"/>
<path d="M1114.5 478.5V469.5H1149.5" fill="none" stroke="#fff" stroke-opacity="0.85"/>
<text x="1132.0" y="476.45" font-size="6.8" fill="#333" text-anchor="middle" font-weight="bold" letter-spacing="0.5" textLength="27.5" lengthAdjust="spacingAndGlyphs">FX SEND</text>
<rect x="1113.5" y="481.5" width="37" height="12" rx="1.5" fill="url(#gBtn2)" stroke="#777"/>
<path d="M1114.5 492.5V482.5H1149.5" fill="none" stroke="#fff" stroke-opacity="0.85"/>
<text x="1132.0" y="489.95" font-size="6.8" fill="#333" text-anchor="middle" font-weight="bold" letter-spacing="0.6" textLength="22.6" lengthAdjust="spacingAndGlyphs">FX RET</text>
<rect x="1128" y="494" width="7" height="10" fill="#a2a2a2"/>
<rect x="1126.5" y="503.5" width="10" height="10" rx="1" fill="#b8e2ff" stroke="#3a8ae0"/>
<text x="1131.6" y="511.2" font-size="6.6" fill="#333" text-anchor="middle" font-weight="bold">1</text>
<rect x="1126.5" y="513.5" width="10" height="10" rx="1" fill="url(#gBtn2)" stroke="#7a7a7a"/>
<text x="1131.6" y="521.2" font-size="6.6" fill="#333" text-anchor="middle" font-weight="bold">2</text>
<rect x="1126.5" y="523.5" width="10" height="10" rx="1" fill="url(#gBtn2)" stroke="#7a7a7a"/>
<text x="1131.6" y="531.2" font-size="6.6" fill="#333" text-anchor="middle" font-weight="bold">3</text>
<rect x="1126.5" y="533.5" width="10" height="10" rx="1" fill="url(#gBtn2)" stroke="#7a7a7a"/>
<text x="1131.6" y="541.2" font-size="6.6" fill="#333" text-anchor="middle" font-weight="bold">4</text>
<rect x="1126.5" y="543.5" width="10" height="10" rx="1" fill="url(#gBtn2)" stroke="#7a7a7a"/>
<text x="1131.6" y="551.2" font-size="6.6" fill="#333" text-anchor="middle" font-weight="bold">5</text>
<rect x="1126.5" y="553.5" width="10" height="10" rx="1" fill="url(#gBtn2)" stroke="#7a7a7a"/>
<text x="1131.6" y="561.2" font-size="6.6" fill="#333" text-anchor="middle" font-weight="bold">6</text>
<rect x="1126.5" y="563.5" width="10" height="10" rx="1" fill="url(#gBtn2)" stroke="#7a7a7a"/>
<text x="1131.6" y="571.2" font-size="6.6" fill="#333" text-anchor="middle" font-weight="bold">7</text>
<rect x="1126.5" y="573.5" width="10" height="10" rx="1" fill="url(#gBtn2)" stroke="#7a7a7a"/>
<text x="1131.6" y="581.2" font-size="6.6" fill="#333" text-anchor="middle" font-weight="bold">8</text>
<rect x="999" y="597" width="158" height="8" fill="#000"/>
<rect x="999" y="599" width="158" height="5" fill="#1e1e1e"/>
<rect x="999" y="605" width="158" height="45" fill="#e9e9e9"/>
<rect x="1002.5" y="607.5" width="72" height="10" rx="1.5" fill="url(#gBtn2)" stroke="#777"/>
<path d="M1003.5 616.5V608.5H1073.5" fill="none" stroke="#fff" stroke-opacity="0.85"/>
<text x="1038.5" y="614.95" font-size="6.8" fill="#333" text-anchor="middle" font-weight="bold" letter-spacing="0.5" textLength="14.7" lengthAdjust="spacingAndGlyphs">SEQ</text>
<rect x="1079.5" y="607.5" width="72" height="10" rx="1.5" fill="url(#gBtn2)" stroke="#777"/>
<path d="M1080.5 616.5V608.5H1150.5" fill="none" stroke="#fff" stroke-opacity="0.85"/>
<text x="1115.5" y="614.95" font-size="6.8" fill="#333" text-anchor="middle" font-weight="bold" letter-spacing="0.5" textLength="20.2" lengthAdjust="spacingAndGlyphs">RACK</text>
<rect x="1002.5" y="621.5" width="47" height="20" rx="1.5" fill="url(#gBtn2)" stroke="#777"/>
<path d="M1003.5 640.5V622.5H1048.5" fill="none" stroke="#fff" stroke-opacity="0.85"/>
<text x="1026" y="630.8" font-size="6.8" fill="#333" text-anchor="middle" font-weight="bold" letter-spacing="0.5" textLength="18.6" lengthAdjust="spacingAndGlyphs">MUTE</text>
<text x="1026" y="637" font-size="6.8" fill="#333" text-anchor="middle" font-weight="bold" letter-spacing="0.5" textLength="26" lengthAdjust="spacingAndGlyphs">ALL OFF</text>
<rect x="1053.5" y="621.5" width="47" height="20" rx="1.5" fill="url(#gBtn2)" stroke="#777"/>
<path d="M1054.5 640.5V622.5H1099.5" fill="none" stroke="#fff" stroke-opacity="0.85"/>
<text x="1077" y="630.8" font-size="6.8" fill="#333" text-anchor="middle" font-weight="bold" letter-spacing="0.5" textLength="17" lengthAdjust="spacingAndGlyphs">SOLO</text>
<text x="1077" y="637" font-size="6.8" fill="#333" text-anchor="middle" font-weight="bold" letter-spacing="0.5" textLength="26" lengthAdjust="spacingAndGlyphs">ALL OFF</text>
<rect x="1104.5" y="621.5" width="47" height="20" rx="1.5" fill="url(#gBtn2)" stroke="#777"/>
<path d="M1105.5 640.5V622.5H1150.5" fill="none" stroke="#fff" stroke-opacity="0.85"/>
<text x="1128" y="630.8" font-size="6.8" fill="#333" text-anchor="middle" font-weight="bold" letter-spacing="0.5" textLength="12.3" lengthAdjust="spacingAndGlyphs">DIM</text>
<text x="1128" y="637" font-size="6.8" fill="#333" text-anchor="middle" font-weight="bold" letter-spacing="0.5" textLength="20.3" lengthAdjust="spacingAndGlyphs">-20dB</text>
<rect x="1167" y="69" width="84" height="581.5" fill="#8c8c8c"/>
<rect x="1168" y="70" width="82" height="579.5" fill="#dedede"/>
<text x="1173.5" y="78.1" font-size="9.5" fill="#060606" textLength="8.2" lengthAdjust="spacingAndGlyphs" stroke="#060606" stroke-width="0.25">IN</text>
<rect x="1168" y="138" width="82" height="1" fill="#6e6e6e"/>
<text x="1173.5" y="147.1" font-size="9.5" fill="#060606" textLength="18" lengthAdjust="spacingAndGlyphs" stroke="#060606" stroke-width="0.25">DYN</text>
<rect x="1168" y="228" width="82" height="1" fill="#6e6e6e"/>
<text x="1173.5" y="237.1" font-size="9.5" fill="#060606" textLength="11.5" lengthAdjust="spacingAndGlyphs" stroke="#060606" stroke-width="0.25">EQ</text>
<rect x="1168" y="354" width="82" height="1" fill="#6e6e6e"/>
<text x="1173.5" y="363.1" font-size="9.5" fill="#060606" textLength="13.5" lengthAdjust="spacingAndGlyphs" stroke="#060606" stroke-width="0.25">INS</text>
<rect x="1168" y="468" width="82" height="1" fill="#6e6e6e"/>
<text x="1173.5" y="477.1" font-size="9.5" fill="#060606" textLength="9.8" lengthAdjust="spacingAndGlyphs" stroke="#060606" stroke-width="0.25">FX</text>
<rect x="1168" y="572" width="82" height="1" fill="#6e6e6e"/>
<text x="1173.5" y="581.1" font-size="9.5" fill="#060606" textLength="17" lengthAdjust="spacingAndGlyphs" stroke="#060606" stroke-width="0.25">FDR</text>
<rect x="1216" y="69" width="20" height="581" fill="#e4e4e4"/>
<rect x="1215.5" y="69" width="0.5" height="581" fill="#bcbcbc"/>
<rect x="1236" y="69" width="0.5" height="581" fill="#bcbcbc"/>
<rect x="1216" y="69" width="20" height="3.5" fill="#9cc3ca"/>
<rect x="1218" y="70.2" width="9" height="1.2" fill="#6f979e"/>
<rect x="1232.5" y="69" width="3.5" height="3.5" fill="#2a0606"/>
<circle cx="1221.8" cy="80.2" r="3.6" fill="#000" fill-opacity="0.22"/>
<circle cx="1220.6" cy="78.7" r="3.0" fill="#3f66c4" stroke="#1c2c60" stroke-width="0.8"/>
<circle cx="1219.8" cy="77.7" r="1.14" fill="#fff" fill-opacity="0.28"/>
<rect x="1227" y="76" width="6" height="4" fill="#f2f2f2" stroke="#9a9a9a" stroke-width="0.6"/>
<rect x="1216" y="86" width="20" height="3" fill="#d2d2d2"/>
<rect x="1218" y="87" width="15" height="1" fill="#8a8a8a"/>
<rect x="1217" y="90" width="3" height="3" fill="#f2f2f2" stroke="#9a9a9a" stroke-width="0.6"/>
<rect x="1222" y="91" width="11" height="1" fill="#9a9a9a"/>
<rect x="1217" y="95.5" width="3" height="3" fill="#f2f2f2" stroke="#9a9a9a" stroke-width="0.6"/>
<rect x="1222" y="96.5" width="11" height="1" fill="#9a9a9a"/>
<rect x="1216.5" y="102.5" width="19" height="29" rx="1" fill="#cfc197" stroke="#2e2a20"/>
<line x1="1226" y1="105" x2="1226" y2="129" stroke="#3a3426" stroke-width="0.8" stroke-dasharray="3 1.5"/>
<rect x="1220.5" y="108.5" width="11" height="4" fill="#d8cca4" stroke="#5a523c" stroke-width="0.6"/>
<rect x="1220.5" y="115.5" width="11" height="4" fill="#d8cca4" stroke="#5a523c" stroke-width="0.6"/>
<rect x="1220.5" y="122.5" width="11" height="4" fill="#d8cca4" stroke="#5a523c" stroke-width="0.6"/>
<rect x="1217" y="133" width="3.5" height="3.5" fill="#f2f2f2" stroke="#9a9a9a" stroke-width="0.6"/>
<rect x="1222" y="133.5" width="11" height="1" fill="#9a9a9a"/>
<rect x="1222" y="135.5" width="8" height="1" fill="#9a9a9a"/>
<rect x="1216" y="138.5" width="20" height="3.5" fill="#9cc3ca"/>
<rect x="1218" y="139.7" width="9" height="1.2" fill="#6f979e"/>
<rect x="1232.5" y="138.5" width="3.5" height="3.5" fill="#2a0606"/>
<rect x="1218" y="145.5" width="7" height="1.4" fill="#8a8a8a"/>
<rect x="1228" y="144.5" width="6" height="4" fill="#f2f2f2" stroke="#9a9a9a" stroke-width="0.6"/>
<circle cx="1221.6000000000001" cy="154.5" r="3.6" fill="#000" fill-opacity="0.22"/>
<circle cx="1220.4" cy="153" r="3.0" fill="#22aa3c" stroke="#0f4a1c" stroke-width="0.8"/>
<circle cx="1219.6000000000001" cy="152" r="1.14" fill="#fff" fill-opacity="0.28"/>
<rect x="1228" y="151" width="6" height="4" fill="#f2f2f2" stroke="#9a9a9a" stroke-width="0.6"/>
<circle cx="1231.2" cy="161.5" r="3.6" fill="#000" fill-opacity="0.22"/>
<circle cx="1230" cy="160" r="3.0" fill="#22aa3c" stroke="#0f4a1c" stroke-width="0.8"/>
<circle cx="1229.2" cy="159" r="1.14" fill="#fff" fill-opacity="0.28"/>
<rect x="1217" y="158.5" width="7" height="1" fill="#9a9a9a"/>
<circle cx="1221.6000000000001" cy="167.5" r="3.6" fill="#000" fill-opacity="0.22"/>
<circle cx="1220.4" cy="166" r="3.0" fill="#22aa3c" stroke="#0f4a1c" stroke-width="0.8"/>
<circle cx="1219.6000000000001" cy="165" r="1.14" fill="#fff" fill-opacity="0.28"/>
<rect x="1228" y="165.5" width="6" height="1" fill="#9a9a9a"/>
<rect x="1228" y="169" width="6" height="4" fill="#f2f2f2" stroke="#9a9a9a" stroke-width="0.6"/>
<rect x="1218" y="171.5" width="5" height="1" fill="#9a9a9a"/>
<rect x="1216" y="175" width="20" height="14" fill="#f2f2f2"/>
<circle cx="1219.5" cy="177.5" r="0.9" fill="#2c9a2c"/>
<circle cx="1231.5" cy="177.5" r="0.9" fill="#c82a1a"/>
<circle cx="1219.5" cy="179.7" r="0.9" fill="#2c9a2c"/>
<circle cx="1231.5" cy="179.7" r="0.9" fill="#d89a1a"/>
<circle cx="1219.5" cy="181.9" r="0.9" fill="#2c9a2c"/>
<circle cx="1231.5" cy="181.9" r="0.9" fill="#c8b81a"/>
<circle cx="1219.5" cy="184.1" r="0.9" fill="#2c9a2c"/>
<circle cx="1231.5" cy="184.1" r="0.9" fill="#4a9a2a"/>
<circle cx="1219.5" cy="186.3" r="0.9" fill="#2c9a2c"/>
<circle cx="1231.5" cy="186.3" r="0.9" fill="#2c9a2c"/>
<rect x="1222.5" y="180" width="6" height="5" fill="#e4e4e4" stroke="#9a9a9a" stroke-width="0.6"/>
<rect x="1216" y="189" width="20" height="1" fill="#cfcfcf"/>
<rect x="1218" y="192" width="7" height="1.4" fill="#8a8a8a"/>
<rect x="1228" y="191.5" width="6" height="4" fill="#f2f2f2" stroke="#9a9a9a" stroke-width="0.6"/>
<rect x="1228" y="197.5" width="6" height="4" fill="#f2f2f2" stroke="#9a9a9a" stroke-width="0.6"/>
<circle cx="1221.8" cy="203.5" r="3.6" fill="#000" fill-opacity="0.22"/>
<circle cx="1220.6" cy="202" r="3.0" fill="#d83a24" stroke="#5a1810" stroke-width="0.8"/>
<circle cx="1219.8" cy="201" r="1.14" fill="#fff" fill-opacity="0.28"/>
<circle cx="1231.7" cy="209.5" r="3.6" fill="#000" fill-opacity="0.22"/>
<circle cx="1230.5" cy="208" r="3.0" fill="#d83a24" stroke="#5a1810" stroke-width="0.8"/>
<circle cx="1229.7" cy="207" r="1.14" fill="#fff" fill-opacity="0.28"/>
<circle cx="1221.8" cy="215.5" r="3.6" fill="#000" fill-opacity="0.22"/>
<circle cx="1220.6" cy="214" r="3.0" fill="#d83a24" stroke="#5a1810" stroke-width="0.8"/>
<circle cx="1219.8" cy="213" r="1.14" fill="#fff" fill-opacity="0.28"/>
<circle cx="1231.7" cy="221.5" r="3.6" fill="#000" fill-opacity="0.22"/>
<circle cx="1230.5" cy="220" r="3.0" fill="#d83a24" stroke="#5a1810" stroke-width="0.8"/>
<circle cx="1229.7" cy="219" r="1.14" fill="#fff" fill-opacity="0.28"/>
<rect x="1217" y="207.5" width="6" height="1" fill="#9a9a9a"/>
<rect x="1228" y="213.5" width="6" height="1" fill="#9a9a9a"/>
<rect x="1228" y="225.3" width="6" height="1" fill="#9a9a9a"/>
<rect x="1217" y="221" width="6" height="4" fill="#f2f2f2" stroke="#9a9a9a" stroke-width="0.6"/>
<rect x="1216" y="229" width="20" height="3.5" fill="#9cc3ca"/>
<rect x="1218" y="230.2" width="9" height="1.2" fill="#6f979e"/>
<rect x="1232.5" y="229" width="3.5" height="3.5" fill="#2a0606"/>
<rect x="1216" y="232.5" width="20" height="33" fill="#f1f1f1"/>
<rect x="1217.5" y="235.5" width="6" height="3" fill="#f2f2f2" stroke="#9a9a9a" stroke-width="0.6"/>
<rect x="1217.5" y="239.5" width="6" height="4" fill="#f2f2f2" stroke="#9a9a9a" stroke-width="0.6"/>
<circle cx="1231.6000000000001" cy="240.3" r="3.6" fill="#000" fill-opacity="0.22"/>
<circle cx="1230.4" cy="238.8" r="3.0" fill="#3f66c4" stroke="#1c2c60" stroke-width="0.8"/>
<circle cx="1229.6000000000001" cy="237.8" r="1.14" fill="#fff" fill-opacity="0.28"/>
<rect x="1228" y="244" width="5" height="1" fill="#9a9a9a"/>
<circle cx="1221.6000000000001" cy="252.6" r="3.6" fill="#000" fill-opacity="0.22"/>
<circle cx="1220.4" cy="251.1" r="3.0" fill="#3f66c4" stroke="#1c2c60" stroke-width="0.8"/>
<circle cx="1219.6000000000001" cy="250.1" r="1.14" fill="#fff" fill-opacity="0.28"/>
<rect x="1218" y="256.5" width="5" height="1" fill="#9a9a9a"/>
<rect x="1227.5" y="250.5" width="6" height="5" fill="#f2f2f2" stroke="#9a9a9a" stroke-width="0.6"/>
<rect x="1228" y="247.8" width="5" height="1" fill="#9a9a9a"/>
<rect x="1217.5" y="259.5" width="3.5" height="3.5" fill="#f2f2f2" stroke="#9a9a9a" stroke-width="0.6"/>
<rect x="1223" y="260" width="9" height="1" fill="#9a9a9a"/>
<rect x="1223" y="262" width="6" height="1" fill="#9a9a9a"/>
<rect x="1216" y="265.5" width="20" height="2" fill="#8a8a8a"/>
<rect x="1216" y="267.5" width="20" height="17.5" fill="#e2e2e2"/>
<rect x="1216" y="285" width="20" height="28" fill="#f1f1f1"/>
<rect x="1216" y="313" width="20" height="22" fill="#e2e2e2"/>
<rect x="1216" y="335" width="20" height="18.5" fill="#d6d6d6"/>
<circle cx="1221.6000000000001" cy="276.7" r="3.6" fill="#000" fill-opacity="0.22"/>
<circle cx="1220.4" cy="275.2" r="3.0" fill="#d83a24" stroke="#5a1810" stroke-width="0.8"/>
<circle cx="1219.6000000000001" cy="274.2" r="1.14" fill="#fff" fill-opacity="0.28"/>
<rect x="1227.5" y="270" width="6" height="4" fill="#f2f2f2" stroke="#9a9a9a" stroke-width="0.6"/>
<circle cx="1231.6000000000001" cy="281.9" r="3.6" fill="#000" fill-opacity="0.22"/>
<circle cx="1230.4" cy="280.4" r="3.0" fill="#d83a24" stroke="#5a1810" stroke-width="0.8"/>
<circle cx="1229.6000000000001" cy="279.4" r="1.14" fill="#fff" fill-opacity="0.28"/>
<circle cx="1221.6000000000001" cy="291.0" r="3.6" fill="#000" fill-opacity="0.22"/>
<circle cx="1220.4" cy="289.5" r="3.0" fill="#22aa3c" stroke="#0f4a1c" stroke-width="0.8"/>
<circle cx="1219.6000000000001" cy="288.5" r="1.14" fill="#fff" fill-opacity="0.28"/>
<circle cx="1231.6000000000001" cy="297.5" r="3.6" fill="#000" fill-opacity="0.22"/>
<circle cx="1230.4" cy="296" r="3.0" fill="#22aa3c" stroke="#0f4a1c" stroke-width="0.8"/>
<circle cx="1229.6000000000001" cy="295" r="1.14" fill="#fff" fill-opacity="0.28"/>
<circle cx="1221.6000000000001" cy="303.6" r="3.6" fill="#000" fill-opacity="0.22"/>
<circle cx="1220.4" cy="302.1" r="3.0" fill="#22aa3c" stroke="#0f4a1c" stroke-width="0.8"/>
<circle cx="1219.6000000000001" cy="301.1" r="1.14" fill="#fff" fill-opacity="0.28"/>
<rect x="1229" y="305" width="4.5" height="4" fill="#f2f2f2" stroke="#9a9a9a" stroke-width="0.6"/>
<rect x="1229" y="311" width="4.5" height="4" fill="#f2f2f2" stroke="#9a9a9a" stroke-width="0.6"/>
<circle cx="1221.6000000000001" cy="319.5" r="3.6" fill="#000" fill-opacity="0.22"/>
<circle cx="1220.4" cy="318" r="3.0" fill="#3f66c4" stroke="#1c2c60" stroke-width="0.8"/>
<circle cx="1219.6000000000001" cy="317" r="1.14" fill="#fff" fill-opacity="0.28"/>
<circle cx="1231.6000000000001" cy="325.5" r="3.6" fill="#000" fill-opacity="0.22"/>
<circle cx="1230.4" cy="324" r="3.0" fill="#3f66c4" stroke="#1c2c60" stroke-width="0.8"/>
<circle cx="1229.6000000000001" cy="323" r="1.14" fill="#fff" fill-opacity="0.28"/>
<circle cx="1221.6000000000001" cy="332.2" r="3.6" fill="#000" fill-opacity="0.22"/>
<circle cx="1220.4" cy="330.7" r="3.0" fill="#3f66c4" stroke="#1c2c60" stroke-width="0.8"/>
<circle cx="1219.6000000000001" cy="329.7" r="1.14" fill="#fff" fill-opacity="0.28"/>
<circle cx="1231.6000000000001" cy="339.8" r="3.6" fill="#000" fill-opacity="0.22"/>
<circle cx="1230.4" cy="338.3" r="3.0" fill="#4a4a4a" stroke="#151515" stroke-width="0.8"/>
<circle cx="1229.6000000000001" cy="337.3" r="1.14" fill="#fff" fill-opacity="0.28"/>
<circle cx="1221.6000000000001" cy="348.1" r="3.6" fill="#000" fill-opacity="0.22"/>
<circle cx="1220.4" cy="346.6" r="3.0" fill="#4a4a4a" stroke="#151515" stroke-width="0.8"/>
<circle cx="1219.6000000000001" cy="345.6" r="1.14" fill="#fff" fill-opacity="0.28"/>
<rect x="1227.5" y="347.5" width="6" height="4" fill="#f2f2f2" stroke="#9a9a9a" stroke-width="0.6"/>
<circle cx="1224.2" cy="269" r="0.9" fill="#b87a1a"/>
<circle cx="1224.2" cy="296.5" r="0.9" fill="#b87a1a"/>
<circle cx="1224.2" cy="324.5" r="0.9" fill="#b87a1a"/>
<circle cx="1224.2" cy="340.5" r="0.9" fill="#b87a1a"/>
<rect x="1216" y="354.5" width="20" height="3.5" fill="#9cc3ca"/>
<rect x="1218" y="355.7" width="9" height="1.2" fill="#6f979e"/>
<rect x="1232.5" y="354.5" width="3.5" height="3.5" fill="#2a0606"/>
<rect x="1217" y="359.5" width="17" height="5" fill="#f4f4f4" stroke="#9a9a9a" stroke-width="0.6"/>
<rect x="1221" y="361.5" width="9" height="1.2" fill="#777"/>
<rect x="1216" y="366.5" width="20" height="5" fill="#d4d4d4"/>
<rect x="1220" y="368.5" width="10" height="1" fill="#8a8a8a"/>
<circle cx="1222.1000000000001" cy="378.3" r="3.6" fill="#000" fill-opacity="0.22"/>
<circle cx="1220.9" cy="376.8" r="3.0" fill="#3f66c4" stroke="#1c2c60" stroke-width="0.8"/>
<circle cx="1220.1000000000001" cy="375.8" r="1.14" fill="#fff" fill-opacity="0.28"/>
<rect x="1226.5" y="374.0" width="7" height="7.5" fill="#efefef" stroke="#9a9a9a" stroke-width="0.6"/>
<rect x="1220" y="384.0" width="10" height="1" fill="#9a9a9a"/>
<rect x="1216" y="387.5" width="20" height="5" fill="#d4d4d4"/>
<rect x="1220" y="389.5" width="10" height="1" fill="#8a8a8a"/>
<circle cx="1222.1000000000001" cy="399.3" r="3.6" fill="#000" fill-opacity="0.22"/>
<circle cx="1220.9" cy="397.8" r="3.0" fill="#3f66c4" stroke="#1c2c60" stroke-width="0.8"/>
<circle cx="1220.1000000000001" cy="396.8" r="1.14" fill="#fff" fill-opacity="0.28"/>
<rect x="1226.5" y="395.0" width="7" height="7.5" fill="#efefef" stroke="#9a9a9a" stroke-width="0.6"/>
<rect x="1220" y="405.0" width="10" height="1" fill="#9a9a9a"/>
<rect x="1216" y="408.5" width="20" height="5" fill="#d4d4d4"/>
<rect x="1220" y="410.5" width="10" height="1" fill="#8a8a8a"/>
<circle cx="1222.1000000000001" cy="420.3" r="3.6" fill="#000" fill-opacity="0.22"/>
<circle cx="1220.9" cy="418.8" r="3.0" fill="#3f66c4" stroke="#1c2c60" stroke-width="0.8"/>
<circle cx="1220.1000000000001" cy="417.8" r="1.14" fill="#fff" fill-opacity="0.28"/>
<rect x="1226.5" y="416.0" width="7" height="7.5" fill="#efefef" stroke="#9a9a9a" stroke-width="0.6"/>
<rect x="1220" y="426.0" width="10" height="1" fill="#9a9a9a"/>
<rect x="1216" y="429.5" width="20" height="5" fill="#d4d4d4"/>
<rect x="1220" y="431.5" width="10" height="1" fill="#8a8a8a"/>
<circle cx="1222.1000000000001" cy="441.3" r="3.6" fill="#000" fill-opacity="0.22"/>
<circle cx="1220.9" cy="439.8" r="3.0" fill="#3f66c4" stroke="#1c2c60" stroke-width="0.8"/>
<circle cx="1220.1000000000001" cy="438.8" r="1.14" fill="#fff" fill-opacity="0.28"/>
<rect x="1226.5" y="437.0" width="7" height="7.5" fill="#efefef" stroke="#9a9a9a" stroke-width="0.6"/>
<rect x="1220" y="447.0" width="10" height="1" fill="#9a9a9a"/>
<rect x="1216" y="449.3" width="20" height="4.6" fill="#141414"/>
<rect x="1217.5" y="455.5" width="4.5" height="5" fill="#f2f2f2" stroke="#9a9a9a" stroke-width="0.6"/>
<rect x="1223.5" y="455.5" width="4.5" height="5" fill="#999" stroke="#9a9a9a" stroke-width="0.6"/>
<rect x="1229.5" y="455.5" width="4.5" height="5" fill="#bbb" stroke="#9a9a9a" stroke-width="0.6"/>
<rect x="1217.5" y="463" width="16" height="4" fill="#f2f2f2" stroke="#9a9a9a" stroke-width="0.6"/>
<rect x="1220" y="464.6" width="11" height="1" fill="#777"/>
<rect x="1216" y="468.5" width="20" height="3.5" fill="#9cc3ca"/>
<rect x="1218" y="469.7" width="9" height="1.2" fill="#6f979e"/>
<rect x="1232.5" y="468.5" width="3.5" height="3.5" fill="#2a0606"/>
<rect x="1216" y="472.0" width="20" height="12.4" fill="#e8e8e8"/>
<rect x="1217" y="473.2" width="7" height="9.5" fill="#ececec" stroke="#9a9a9a" stroke-width="0.6"/>
<rect x="1217" y="480.0" width="7" height="0.6" fill="#9a9a9a"/>
<text x="1220.5" y="479.2" font-size="5.6" fill="#444" text-anchor="middle">1</text>
<circle cx="1231.4" cy="479.9" r="3.8000000000000003" fill="#000" fill-opacity="0.22"/>
<circle cx="1230.2" cy="478.4" r="3.2" fill="#22aa3c" stroke="#0f4a1c" stroke-width="0.8"/>
<circle cx="1229.4" cy="477.4" r="1.22" fill="#fff" fill-opacity="0.28"/>
<rect x="1216" y="484.4" width="20" height="12.4" fill="#d8d8d8"/>
<rect x="1217" y="485.59999999999997" width="7" height="9.5" fill="#ececec" stroke="#9a9a9a" stroke-width="0.6"/>
<rect x="1217" y="492.4" width="7" height="0.6" fill="#9a9a9a"/>
<text x="1220.5" y="491.59999999999997" font-size="5.6" fill="#444" text-anchor="middle">2</text>
<circle cx="1231.4" cy="492.29999999999995" r="3.8000000000000003" fill="#000" fill-opacity="0.22"/>
<circle cx="1230.2" cy="490.79999999999995" r="3.2" fill="#22aa3c" stroke="#0f4a1c" stroke-width="0.8"/>
<circle cx="1229.4" cy="489.79999999999995" r="1.22" fill="#fff" fill-opacity="0.28"/>
<rect x="1216" y="496.8" width="20" height="12.4" fill="#e8e8e8"/>
<rect x="1217" y="498.0" width="7" height="9.5" fill="#ececec" stroke="#9a9a9a" stroke-width="0.6"/>
<rect x="1217" y="504.8" width="7" height="0.6" fill="#9a9a9a"/>
<text x="1220.5" y="504.0" font-size="5.6" fill="#444" text-anchor="middle">3</text>
<circle cx="1231.4" cy="504.7" r="3.8000000000000003" fill="#000" fill-opacity="0.22"/>
<circle cx="1230.2" cy="503.2" r="3.2" fill="#22aa3c" stroke="#0f4a1c" stroke-width="0.8"/>
<circle cx="1229.4" cy="502.2" r="1.22" fill="#fff" fill-opacity="0.28"/>
<rect x="1216" y="509.2" width="20" height="12.4" fill="#d8d8d8"/>
<rect x="1217" y="510.4" width="7" height="9.5" fill="#ececec" stroke="#9a9a9a" stroke-width="0.6"/>
<rect x="1217" y="517.2" width="7" height="0.6" fill="#9a9a9a"/>
<text x="1220.5" y="516.4" font-size="5.6" fill="#444" text-anchor="middle">4</text>
<circle cx="1231.4" cy="517.1" r="3.8000000000000003" fill="#000" fill-opacity="0.22"/>
<circle cx="1230.2" cy="515.6" r="3.2" fill="#22aa3c" stroke="#0f4a1c" stroke-width="0.8"/>
<circle cx="1229.4" cy="514.6" r="1.22" fill="#fff" fill-opacity="0.28"/>
<rect x="1216" y="521.6" width="20" height="12.4" fill="#e8e8e8"/>
<rect x="1217" y="522.8000000000001" width="7" height="9.5" fill="#ececec" stroke="#9a9a9a" stroke-width="0.6"/>
<rect x="1217" y="529.6" width="7" height="0.6" fill="#9a9a9a"/>
<text x="1220.5" y="528.8000000000001" font-size="5.6" fill="#444" text-anchor="middle">5</text>
<circle cx="1231.4" cy="529.5" r="3.8000000000000003" fill="#000" fill-opacity="0.22"/>
<circle cx="1230.2" cy="528.0" r="3.2" fill="#22aa3c" stroke="#0f4a1c" stroke-width="0.8"/>
<circle cx="1229.4" cy="527.0" r="1.22" fill="#fff" fill-opacity="0.28"/>
<rect x="1216" y="534.0" width="20" height="12.4" fill="#d8d8d8"/>
<rect x="1217" y="535.2" width="7" height="9.5" fill="#ececec" stroke="#9a9a9a" stroke-width="0.6"/>
<rect x="1217" y="542.0" width="7" height="0.6" fill="#9a9a9a"/>
<text x="1220.5" y="541.2" font-size="5.6" fill="#444" text-anchor="middle">6</text>
<circle cx="1231.4" cy="541.9" r="3.8000000000000003" fill="#000" fill-opacity="0.22"/>
<circle cx="1230.2" cy="540.4" r="3.2" fill="#22aa3c" stroke="#0f4a1c" stroke-width="0.8"/>
<circle cx="1229.4" cy="539.4" r="1.22" fill="#fff" fill-opacity="0.28"/>
<rect x="1216" y="546.4" width="20" height="12.4" fill="#e8e8e8"/>
<rect x="1217" y="547.6" width="7" height="9.5" fill="#ececec" stroke="#9a9a9a" stroke-width="0.6"/>
<rect x="1217" y="554.4" width="7" height="0.6" fill="#9a9a9a"/>
<text x="1220.5" y="553.6" font-size="5.6" fill="#444" text-anchor="middle">7</text>
<circle cx="1231.4" cy="554.3" r="3.8000000000000003" fill="#000" fill-opacity="0.22"/>
<circle cx="1230.2" cy="552.8" r="3.2" fill="#22aa3c" stroke="#0f4a1c" stroke-width="0.8"/>
<circle cx="1229.4" cy="551.8" r="1.22" fill="#fff" fill-opacity="0.28"/>
<rect x="1216" y="558.8" width="20" height="12.4" fill="#d8d8d8"/>
<rect x="1217" y="560.0" width="7" height="9.5" fill="#ececec" stroke="#9a9a9a" stroke-width="0.6"/>
<rect x="1217" y="566.8" width="7" height="0.6" fill="#9a9a9a"/>
<text x="1220.5" y="566.0" font-size="5.6" fill="#444" text-anchor="middle">8</text>
<circle cx="1231.4" cy="566.6999999999999" r="3.8000000000000003" fill="#000" fill-opacity="0.22"/>
<circle cx="1230.2" cy="565.1999999999999" r="3.2" fill="#22aa3c" stroke="#0f4a1c" stroke-width="0.8"/>
<circle cx="1229.4" cy="564.1999999999999" r="1.22" fill="#fff" fill-opacity="0.28"/>
<rect x="1216" y="572.5" width="20" height="3.5" fill="#9cc3ca"/>
<rect x="1218" y="573.7" width="9" height="1.2" fill="#6f979e"/>
<circle cx="1221.1000000000001" cy="581.3" r="3.0" fill="#000" fill-opacity="0.22"/>
<circle cx="1219.9" cy="579.8" r="2.4" fill="#3f66c4" stroke="#1c2c60" stroke-width="0.8"/>
<circle cx="1219.1000000000001" cy="578.8" r="0.91" fill="#fff" fill-opacity="0.28"/>
<circle cx="1229.3" cy="580.8" r="5" fill="#1a1210"/>
<circle cx="1229.3" cy="580.8" r="3.9" fill="none" stroke="#b8381f" stroke-width="1.2" stroke-dasharray="10.5 2" transform="rotate(135 1229.3 580.8)"/>
<circle cx="1229.3" cy="580.8" r="2.3" fill="#8a8a8a" stroke="#333" stroke-width="0.5"/>
<rect x="1217.5" y="585.5" width="5" height="1" fill="#9a9a9a"/>
<rect x="1225" y="587" width="2" height="1" fill="#888"/>
<rect x="1232" y="587" width="2" height="1" fill="#888"/>
<rect x="1217" y="590.5" width="8" height="6" fill="#f2f2f2" stroke="#9a9a9a" stroke-width="0.6"/>
<rect x="1227" y="590.5" width="8" height="6" fill="#f2f2f2" stroke="#9a9a9a" stroke-width="0.6"/>
<rect x="1218.5" y="593" width="5" height="1" fill="#777"/>
<rect x="1228.5" y="593" width="5" height="1" fill="#777"/>
<rect x="1217" y="601" width="9.700" height="46.400" rx="0.8" fill="url(#gMini)"/>
<rect x="1223" y="605.5" width="2" height="1.2" fill="#18a8c8"/>
<rect x="1223" y="610.9" width="2" height="1.2" fill="#18a8c8"/>
<rect x="1223" y="616.3" width="2" height="1.2" fill="#18a8c8"/>
<rect x="1223" y="621.7" width="2" height="1.2" fill="#18a8c8"/>
<rect x="1223" y="627.1" width="2" height="1.2" fill="#18a8c8"/>
<rect x="1223" y="632.5" width="2" height="1.2" fill="#18a8c8"/>
<rect x="1223" y="637.9" width="2" height="1.2" fill="#18a8c8"/>
<rect x="1223" y="643.3" width="2" height="1.2" fill="#18a8c8"/>
<rect x="1230" y="604" width="1.2" height="40" fill="#222"/>
<rect x="1228" y="612.300" width="5.500" height="11" fill="#d0d0d0" stroke="#666" stroke-width="0.7"/>
<rect x="1228.5" y="617.3" width="4.5" height="1" fill="#555"/>
<rect x="1228.8" y="614" width="4" height="0.8" fill="#9a9a9a"/>
<rect x="1228.8" y="615.6" width="4" height="0.8" fill="#9a9a9a"/>
<rect x="1228.8" y="619.6" width="4" height="0.8" fill="#9a9a9a"/>
<rect x="1228.8" y="621.2" width="4" height="0.8" fill="#9a9a9a"/>
<rect x="1167.500" y="469.900" width="82.800" height="180.400" fill="none" stroke="#1473d4" stroke-width="2.8"/>
<rect x="1254.5" y="564.5" width="17" height="10" fill="#cfdfe0" stroke="#222"/>
<text x="1263.2" y="572.4" font-size="7" fill="#222" text-anchor="middle" font-weight="bold" letter-spacing="0.2" textLength="6.5" lengthAdjust="spacingAndGlyphs">IN</text>
<rect x="1254.5" y="579.5" width="17" height="10" fill="#cfdfe0" stroke="#222"/>
<text x="1263.2" y="587.4" font-size="7" fill="#222" text-anchor="middle" font-weight="bold" letter-spacing="0.2" textLength="14" lengthAdjust="spacingAndGlyphs">DYN</text>
<rect x="1254.5" y="594.5" width="17" height="10" fill="#cfdfe0" stroke="#222"/>
<text x="1263.2" y="602.4" font-size="7" fill="#222" text-anchor="middle" font-weight="bold" letter-spacing="0.2" textLength="9" lengthAdjust="spacingAndGlyphs">EQ</text>
<rect x="1254.5" y="609.5" width="17" height="10" fill="#cfdfe0" stroke="#222"/>
<text x="1263.2" y="617.4" font-size="7" fill="#222" text-anchor="middle" font-weight="bold" letter-spacing="0.2" textLength="12" lengthAdjust="spacingAndGlyphs">INS</text>
<rect x="1254.5" y="624.5" width="17" height="10" fill="#cfdfe0" stroke="#222"/>
<text x="1263.2" y="632.4" font-size="7" fill="#222" text-anchor="middle" font-weight="bold" letter-spacing="0.2" textLength="8.5" lengthAdjust="spacingAndGlyphs">FX</text>
<rect x="1254.5" y="639.5" width="17" height="10" fill="#cfdfe0" stroke="#222"/>
<text x="1263.2" y="647.4" font-size="7" fill="#222" text-anchor="middle" font-weight="bold" letter-spacing="0.2" textLength="13.5" lengthAdjust="spacingAndGlyphs">FDR</text>
<path d="M625.300 657.7L627.300 655.7L629.300 657.7" fill="none" stroke="#fff" stroke-width="1.2"/>
<path d="M625.300 656.5L627.300 654.5L629.300 656.5" fill="none" stroke="#5a5a5a" stroke-width="1.3"/>
<path d="M625.300 666.5L627.300 664.5L629.300 666.5" fill="none" stroke="#fff" stroke-width="1.2"/>
<path d="M625.300 665.3L627.300 663.3L629.300 665.3" fill="none" stroke="#5a5a5a" stroke-width="1.3"/>
<rect x="6" y="670.5" width="16" height="34" rx="1.5" fill="#000" fill-opacity="0.18"/>
<rect x="5.6" y="669.6" width="14.8" height="32.8" rx="1.3" fill="url(#gTall)" stroke="#484848" stroke-width="1.2"/>
<rect x="21" y="670.5" width="16" height="34" rx="1.5" fill="#000" fill-opacity="0.18"/>
<rect x="20.6" y="669.6" width="14.8" height="32.8" rx="1.3" fill="url(#gTall)" stroke="#484848" stroke-width="1.2"/>
<circle cx="12.1" cy="685.5" r="3.8" fill="none" stroke="#444" stroke-width="1.1"/>
<line x1="14.899999999999999" y1="688.3" x2="18.7" y2="692" stroke="#444" stroke-width="1.4" />
<line x1="9.899999999999999" y1="685.5" x2="14.3" y2="685.5" stroke="#444" stroke-width="1.1" />
<circle cx="27.4" cy="685.5" r="3.8" fill="none" stroke="#444" stroke-width="1.1"/>
<line x1="30.2" y1="688.3" x2="34.0" y2="692" stroke="#444" stroke-width="1.4" />
<line x1="25.2" y1="685.5" x2="29.599999999999998" y2="685.5" stroke="#444" stroke-width="1.1" />
<line x1="27.4" y1="683.3" x2="27.4" y2="687.7" stroke="#444" stroke-width="1.1" />
<rect x="36" y="669" width="1081" height="34" fill="#767676"/>
<rect x="36" y="670" width="1081" height="32" fill="#ffffff"/>
<rect x="36" y="670" width="12" height="32" fill="#ececec"/>
<rect x="49" y="670" width="1049" height="2.6" fill="#ccd6da"/>
<rect x="49" y="672.6" width="1049" height="6" fill="#8db7c3"/>
<rect x="49" y="678.5" width="1043" height="2.7" fill="#c6dcb2"/>
<rect x="1098" y="675.5" width="5" height="3" fill="#8db8c3"/>
<rect x="48" y="670" width="1.2" height="32" fill="#222"/>
<rect x="70" y="670" width="1.2" height="32" fill="#222"/>
<path d="M48.500 683.500H51.500L53.700 685.500L51.500 687.500H48.500Z" fill="#fff" stroke="#1a1a1a" stroke-width="1"/>
<path d="M70.500 683.500H67.700L65.500 685.500L67.700 687.500H70.500Z" fill="#fff" stroke="#1a1a1a" stroke-width="1"/>
<rect x="198" y="684.3" width="140" height="2.5" fill="#a9c9e6"/>
<rect x="198" y="690" width="140" height="6.3" fill="url(#gOlive)"/>
<rect x="198" y="696.3" width="140" height="2.5" fill="#5c6ca4"/>
<rect x="343.0" y="684.3" width="5.6" height="2.5" fill="#a9c9e6"/>
<rect x="343.0" y="690" width="5.6" height="6" fill="#647e46"/>
<rect x="354.2" y="684.3" width="5.6" height="2.5" fill="#a9c9e6"/>
<rect x="354.2" y="690" width="5.6" height="6" fill="#647e46"/>
<rect x="365.4" y="684.3" width="5.6" height="2.5" fill="#a9c9e6"/>
<rect x="365.4" y="690" width="5.6" height="6" fill="#647e46"/>
<rect x="376.6" y="684.3" width="5.6" height="2.5" fill="#a9c9e6"/>
<rect x="376.6" y="690" width="5.6" height="6" fill="#647e46"/>
<rect x="387.8" y="684.3" width="5.6" height="2.5" fill="#a9c9e6"/>
<rect x="387.8" y="690" width="5.6" height="6" fill="#647e46"/>
<rect x="399.0" y="684.3" width="5.6" height="2.5" fill="#a9c9e6"/>
<rect x="399.0" y="690" width="5.6" height="6" fill="#647e46"/>
<rect x="410.2" y="684.3" width="5.6" height="2.5" fill="#a9c9e6"/>
<rect x="410.2" y="690" width="5.6" height="6" fill="#647e46"/>
<rect x="422" y="684.3" width="95" height="2.5" fill="#a9c9e6"/>
<rect x="522" y="684.3" width="5.6" height="2.5" fill="#a9c9e6"/>
<rect x="533" y="684.3" width="5.6" height="2.5" fill="#a9c9e6"/>
<rect x="544" y="684.3" width="5.6" height="2.5" fill="#a9c9e6"/>
<rect x="556" y="684.3" width="5.6" height="2.5" fill="#a9c9e6"/>
<rect x="567" y="684.3" width="5.6" height="2.5" fill="#a9c9e6"/>
<rect x="590" y="684.3" width="16" height="2.5" fill="#a9c9e6"/>
<rect x="466" y="687" width="6" height="2.7" fill="#d08a2a"/>
<rect x="489" y="687" width="5.5" height="2.7" fill="#d08a2a"/>
<rect x="511" y="690.4" width="95" height="2.4" fill="#5e6f5e"/>
<rect x="667" y="693.3" width="274" height="2.5" fill="#a9c9e6"/>
<rect x="690" y="690.4" width="329" height="2.4" fill="#5e6f5e"/>
<rect x="734.3" y="687" width="5.7" height="3.2" fill="#d08a2a"/>
<rect x="756.6" y="687" width="5.7" height="3.2" fill="#d08a2a"/>
<rect x="779.0" y="687" width="5.7" height="3.2" fill="#d08a2a"/>
<rect x="801.3" y="687" width="5.7" height="3.2" fill="#d08a2a"/>
<rect x="823.6" y="687" width="5.7" height="3.2" fill="#d08a2a"/>
<rect x="845.9" y="687" width="5.7" height="3.2" fill="#d08a2a"/>
<rect x="868.3" y="687" width="5.7" height="3.2" fill="#d08a2a"/>
<rect x="890.6" y="687" width="5.7" height="3.2" fill="#d08a2a"/>
<rect x="912.9" y="687" width="5.7" height="3.2" fill="#d08a2a"/>
<rect x="935.3" y="687" width="5.7" height="3.2" fill="#d08a2a"/>
<rect x="639.3" y="699.3" width="11.3" height="1.8" fill="#c483ac"/>
<rect x="656" y="699.3" width="6" height="1.8" fill="#c483ac"/>
<rect x="667" y="699.3" width="5.7" height="1.8" fill="#c483ac"/>
<rect x="679" y="699.3" width="5" height="1.8" fill="#c483ac"/>
<rect x="913" y="681.8" width="95" height="2" fill="#f4dfb6"/>
<rect x="969" y="684.3" width="5" height="2.5" fill="#a9c9e6"/>
<rect x="980" y="684.3" width="5.7" height="2.5" fill="#a9c9e6"/>
<rect x="991" y="684.3" width="6" height="2.5" fill="#a9c9e6"/>
<rect x="1002" y="684.3" width="17" height="2.5" fill="#a9c9e6"/>
<rect x="1097" y="671" width="1" height="31" fill="#222"/>
<rect x="1095.5" y="683.5" width="4.5" height="4.5" fill="#fff" stroke="#111"/>
<rect x="590" y="669.200" width="527" height="32.500" fill="none" stroke="#1873d2" stroke-width="2.8"/>
<rect x="579" y="669.5" width="12" height="36" rx="1.5" fill="#000" fill-opacity="0.18"/>
<rect x="578.6" y="668.6" width="10.8" height="34.8" rx="1.3" fill="url(#gTall)" stroke="#484848" stroke-width="1.2"/>
<rect x="1117" y="669.5" width="12" height="36" rx="1.5" fill="#000" fill-opacity="0.18"/>
<rect x="1116.6" y="668.6" width="10.8" height="34.8" rx="1.3" fill="url(#gTall)" stroke="#484848" stroke-width="1.2"/>
<rect x="582" y="680.0" width="1" height="1" fill="#555"/>
<rect x="585" y="680.0" width="1" height="1" fill="#555"/>
<rect x="582" y="682.6" width="1" height="1" fill="#555"/>
<rect x="585" y="682.6" width="1" height="1" fill="#555"/>
<rect x="582" y="685.2" width="1" height="1" fill="#555"/>
<rect x="585" y="685.2" width="1" height="1" fill="#555"/>
<rect x="582" y="687.8" width="1" height="1" fill="#555"/>
<rect x="585" y="687.8" width="1" height="1" fill="#555"/>
<rect x="582" y="690.4" width="1" height="1" fill="#555"/>
<rect x="585" y="690.4" width="1" height="1" fill="#555"/>
<rect x="1120" y="680.0" width="1" height="1" fill="#555"/>
<rect x="1123" y="680.0" width="1" height="1" fill="#555"/>
<rect x="1120" y="682.6" width="1" height="1" fill="#555"/>
<rect x="1123" y="682.6" width="1" height="1" fill="#555"/>
<rect x="1120" y="685.2" width="1" height="1" fill="#555"/>
<rect x="1123" y="685.2" width="1" height="1" fill="#555"/>
<rect x="1120" y="687.8" width="1" height="1" fill="#555"/>
<rect x="1123" y="687.8" width="1" height="1" fill="#555"/>
<rect x="1120" y="690.4" width="1" height="1" fill="#555"/>
<rect x="1123" y="690.4" width="1" height="1" fill="#555"/>
<rect x="1128" y="670.5" width="16" height="34" rx="1.5" fill="#000" fill-opacity="0.18"/>
<rect x="1127.6" y="669.6" width="14.8" height="32.8" rx="1.3" fill="url(#gTall)" stroke="#484848" stroke-width="1.2"/>
<rect x="1143" y="670.5" width="16" height="34" rx="1.5" fill="#000" fill-opacity="0.18"/>
<rect x="1142.6" y="669.6" width="14.8" height="32.8" rx="1.3" fill="url(#gTall)" stroke="#484848" stroke-width="1.2"/>
<path d="M1138 682V690L1133 686Z" fill="#333"/>
<path d="M1147 682V690L1152 686Z" fill="#333"/>
<rect x="1168" y="670.5" width="85" height="34" rx="1.5" fill="#000" fill-opacity="0.18"/>
<rect x="1167.6" y="669.6" width="83.8" height="32.8" rx="1.3" fill="url(#gTall)" stroke="#484848" stroke-width="1.2"/>
<rect x="1193" y="669.5" width="32" height="33" fill="url(#gCyan)"/>
<rect x="1193" y="669.5" width="1" height="33" fill="#2a8ad0"/>
<rect x="1224" y="669.5" width="1" height="33" fill="#2a8ad0"/>
<rect x="1193" y="669.5" width="32" height="1" fill="#2a8ad0"/>
<rect x="1170" y="686.0" width="20" height="1" fill="#3a3a3a"/>
<path d="M1173 685.5h1v2.0h-1zM1174 685.0h1v3.0h-1zM1175 682.0h1v9.0h-1zM1176 684.5h1v4.0h-1zM1177 684.5h1v4.0h-1zM1178 685.5h1v2.0h-1zM1179 685.5h1v2.0h-1zM1180 686.0h1v1.0h-1zM1181 686.0h1v1.0h-1zM1182 686.0h1v1.0h-1zM1183 686.0h1v1.0h-1zM1184 686.0h1v1.0h-1zM1185 686.0h1v1.0h-1zM1186 686.0h1v1.0h-1zM1187 686.0h1v1.0h-1z" fill="#3a3a3a"/>
<rect x="1197" y="686.0" width="24" height="1" fill="#2a4650"/>
<path d="M1201 685.0h1v3.0h-1zM1202 683.5h1v6.0h-1zM1203 678.0h1v17.0h-1zM1204 682.0h1v9.0h-1zM1205 681.5h1v10.0h-1zM1206 684.0h1v5.0h-1zM1207 683.0h1v7.0h-1zM1208 685.0h1v3.0h-1zM1209 684.5h1v4.0h-1zM1210 685.0h1v3.0h-1zM1211 685.0h1v3.0h-1zM1212 685.5h1v2.0h-1zM1213 685.0h1v3.0h-1zM1214 686.0h1v1.0h-1zM1215 685.5h1v2.0h-1zM1216 686.0h1v1.0h-1zM1217 686.0h1v1.0h-1zM1218 686.0h1v1.0h-1z" fill="#2a4650"/>
<rect x="1227" y="686.0" width="22" height="1" fill="#3a3a3a"/>
<path d="M1229 685.0h1v3.0h-1zM1230 683.0h1v7.0h-1zM1231 681.5h1v10.0h-1zM1232 672.5h1v28.0h-1zM1233 678.5h1v16.0h-1zM1234 676.5h1v20.0h-1zM1235 680.5h1v12.0h-1zM1236 678.5h1v16.0h-1zM1237 682.0h1v9.0h-1zM1238 680.5h1v12.0h-1zM1239 682.0h1v9.0h-1zM1240 681.0h1v11.0h-1zM1241 683.5h1v6.0h-1zM1242 681.0h1v11.0h-1zM1243 683.5h1v6.0h-1zM1244 682.5h1v8.0h-1zM1245 684.0h1v5.0h-1zM1246 683.5h1v6.0h-1z" fill="#3a3a3a"/>
<path d="M1239 711H1248L1243.500 716.500Z" fill="#8a8a8a"/>
<rect x="226" y="710" width="110" height="53" fill="#000"/>
<rect x="227" y="711" width="108" height="25.3" fill="url(#gDsp)"/>
<rect x="227" y="736.3" width="108" height="25.4" fill="#191919"/>
<rect x="231" y="715" width="5" height="10.7" fill="#46646b"/>
<rect x="288" y="715" width="5" height="10.7" fill="#58583a"/>
<text x="237.8" y="719.9" font-size="6.3" fill="#3f5962" font-weight="bold" letter-spacing="0.3" textLength="45.5" lengthAdjust="spacingAndGlyphs">AUTOMATION</text>
<text x="237.8" y="725.8" font-size="6.3" fill="#3f5962" font-weight="bold" letter-spacing="0.3" textLength="33.5" lengthAdjust="spacingAndGlyphs">OVERRIDE</text>
<text x="295" y="719.9" font-size="6.3" fill="#56563a" font-weight="bold" letter-spacing="0.3" textLength="16.4" lengthAdjust="spacingAndGlyphs">DISC</text>
<text x="295" y="725.8" font-size="6.3" fill="#56563a" font-weight="bold" letter-spacing="0.3" textLength="36.3" lengthAdjust="spacingAndGlyphs">OVERLOAD</text>
<text x="231" y="733.1" font-size="5.6" fill="#614540" font-weight="bold" letter-spacing="0.3" textLength="28" lengthAdjust="spacingAndGlyphs">CLIP CLIP</text>
<rect x="231" y="734.8" width="13" height="1" fill="#4a2e34"/>
<rect x="246" y="734.8" width="13" height="1" fill="#4a2e34"/>
<rect x="266" y="734.8" width="13" height="1" fill="#13343d"/>
<rect x="231" y="736.82" width="13" height="1" fill="#2f2b16"/>
<rect x="246" y="736.82" width="13" height="1" fill="#2f2b16"/>
<rect x="266" y="736.82" width="13" height="1" fill="#13343d"/>
<rect x="231" y="738.84" width="13" height="1" fill="#2f2b16"/>
<rect x="246" y="738.84" width="13" height="1" fill="#2f2b16"/>
<rect x="266" y="738.84" width="13" height="1" fill="#13343d"/>
<rect x="231" y="740.86" width="13" height="1" fill="#2f2b16"/>
<rect x="246" y="740.86" width="13" height="1" fill="#2f2b16"/>
<rect x="266" y="740.86" width="13" height="1" fill="#13343d"/>
<rect x="231" y="742.88" width="13" height="1" fill="#12280d"/>
<rect x="246" y="742.88" width="13" height="1" fill="#12280d"/>
<rect x="266" y="742.88" width="13" height="1" fill="#13343d"/>
<rect x="231" y="744.9" width="13" height="1" fill="#12280d"/>
<rect x="246" y="744.9" width="13" height="1" fill="#12280d"/>
<rect x="266" y="744.9" width="13" height="1" fill="#13343d"/>
<rect x="231" y="746.92" width="13" height="1" fill="#12280d"/>
<rect x="246" y="746.92" width="13" height="1" fill="#12280d"/>
<rect x="266" y="746.92" width="13" height="1" fill="#13343d"/>
<rect x="231" y="748.94" width="13" height="1" fill="#12280d"/>
<rect x="246" y="748.94" width="13" height="1" fill="#12280d"/>
<rect x="266" y="748.94" width="13" height="1" fill="#13343d"/>
<rect x="231" y="750.96" width="13" height="1" fill="#12280d"/>
<rect x="246" y="750.96" width="13" height="1" fill="#12280d"/>
<rect x="266" y="750.96" width="13" height="1" fill="#13343d"/>
<rect x="288" y="734.6" width="19" height="1.2" fill="#44121a"/>
<rect x="288" y="749.3" width="19" height="1.5" fill="#44121a"/>
<text x="297.5" y="741.7" font-size="5.8" fill="#4a1018" text-anchor="middle" font-weight="bold" letter-spacing="0.2" textLength="18" lengthAdjust="spacingAndGlyphs">DEMO</text>
<text x="297.5" y="748" font-size="5.8" fill="#4a1018" text-anchor="middle" font-weight="bold" letter-spacing="0.2" textLength="18" lengthAdjust="spacingAndGlyphs">MODE</text>
<circle cx="321.5" cy="743.5" r="6.7" fill="#0d323a"/>
<line x1="314.8" y1="743.5" x2="328.2" y2="743.5" stroke="#191919" stroke-width="0.8" />
<line x1="316.08" y1="739.56" x2="326.92" y2="747.44" stroke="#191919" stroke-width="0.8" />
<line x1="319.43" y1="737.13" x2="323.57" y2="749.87" stroke="#191919" stroke-width="0.8" />
<line x1="323.57" y1="737.13" x2="319.43" y2="749.87" stroke="#191919" stroke-width="0.8" />
<line x1="326.92" y1="739.56" x2="316.08" y2="747.44" stroke="#191919" stroke-width="0.8" />
<text x="233.8" y="760" font-size="6.6" fill="#f2f2f2" font-weight="bold" letter-spacing="0.3" textLength="6.6" lengthAdjust="spacingAndGlyphs">IN</text>
<text x="246.1" y="760" font-size="6.6" fill="#f2f2f2" font-weight="bold" letter-spacing="0.3" textLength="12.9" lengthAdjust="spacingAndGlyphs">OUT</text>
<text x="266.9" y="760" font-size="6.6" fill="#f2f2f2" font-weight="bold" letter-spacing="0.3" textLength="14.2" lengthAdjust="spacingAndGlyphs">DSP</text>
<text x="312.9" y="760" font-size="6.6" fill="#f2f2f2" font-weight="bold" letter-spacing="0.3" textLength="18.4" lengthAdjust="spacingAndGlyphs">CALC</text>
<rect x="342.750" y="710.750" width="56.500" height="51.500" rx="1" fill="url(#gBlk)" stroke="#1c7ac2" stroke-width="1.5"/>
<path d="M367.100 724.200L371.300 721.300L381.800 727.300L376.500 730.300L371.500 727.500L367.100 730.500Z" fill="#578a9b"/>
<path d="M381.800 727.300V739.100L371.300 745.900V739.100L376.500 736.500V730.300Z" fill="#35555f"/>
<path d="M361.200 733.500L371.300 739.100V745.900L361.200 740.200Z" fill="#4f8292"/>
<line x1="361.5" y1="718.1" x2="361.5" y2="727.5" stroke="#4a8090" stroke-width="0.9" />
<line x1="363.6" y1="716.2" x2="363.6" y2="728.6" stroke="#4a8090" stroke-width="0.9" />
<line x1="365.6" y1="719.2" x2="365.6" y2="730.1" stroke="#4a8090" stroke-width="0.9" />
<text x="370.6" y="757.7" font-size="6.8" fill="#0a1218" text-anchor="middle" font-weight="bold" letter-spacing="0.5" textLength="27.5" lengthAdjust="spacingAndGlyphs">BLOCKS</text>
<rect x="407.600" y="711.800" width="13.600" height="9.300" rx="1.5" fill="url(#gChk)" stroke="#444" stroke-width="1.2"/>
<rect x="407.600" y="726.800" width="13.600" height="9.300" rx="1.5" fill="url(#gChk)" stroke="#444" stroke-width="1.2"/>
<text x="426" y="718.9" font-size="6.9" fill="#222" font-weight="bold" letter-spacing="0.4" textLength="20.3" lengthAdjust="spacingAndGlyphs">CLICK</text>
<text x="426.7" y="733.9" font-size="6.9" fill="#222" font-weight="bold" letter-spacing="0.4" textLength="13.6" lengthAdjust="spacingAndGlyphs">PRE</text>
<path d="M406.600 759.100A11.300 11.300 0 1 1 426.300 748.400" fill="none" stroke="#3ab4f4" stroke-width="1.6"/>
<path d="M426.300 748.400A11.300 11.300 0 0 1 423.300 759.500" fill="none" stroke="#4c5c66" stroke-width="1.4"/>
<circle cx="415.3" cy="751.3" r="7.9" fill="url(#gBtn)" stroke="#1e1e1e" stroke-width="1.4"/>
<circle cx="419.4" cy="750.7" r="1" fill="#1a1a1a"/>
<text x="429.8" y="750.9" font-size="6.9" fill="#222" font-weight="bold" letter-spacing="0.4" textLength="20.2" lengthAdjust="spacingAndGlyphs">CLICK</text>
<text x="429.8" y="757.7" font-size="6.9" fill="#222" font-weight="bold" letter-spacing="0.4" textLength="20.2" lengthAdjust="spacingAndGlyphs">LEVEL</text>
<rect x="457" y="711.5" width="28" height="53" rx="1.5" fill="#000" fill-opacity="0.18"/>
<rect x="456.6" y="710.6" width="26.8" height="51.8" rx="1.3" fill="url(#gTall)" stroke="#484848" stroke-width="1.2"/>
<text x="470.5" y="757.7" font-size="6.9" fill="#111" text-anchor="middle" font-weight="bold" letter-spacing="0.4" textLength="13.1" lengthAdjust="spacingAndGlyphs">TAP</text>
<rect x="491" y="710.2" width="122" height="14.7" rx="1.5" fill="url(#gDisp)"/>
<rect x="603" y="710.7" width="9.700" height="14.2" rx="1.5" fill="url(#gStep)" stroke="#555" stroke-width="0.6"/>
<path d="M605.5 716.1500000000001L607.8 713.5500000000001L610.0999999999999 716.1500000000001M605.5 719.35L607.8 721.95L610.0999999999999 719.35" fill="none" stroke="#333" stroke-width="1.1"/>
<text x="594.2" y="720.8" font-size="9.7" fill="#f6f6f6" text-anchor="end" font-weight="bold" letter-spacing="0" textLength="69.3" lengthAdjust="spacingAndGlyphs" xml:space="preserve" stroke="#f6f6f6" stroke-width="0.3">1.  1.  1.    0</text>
<rect x="491" y="729.3" width="122" height="14.5" rx="1.5" fill="url(#gDisp)"/>
<rect x="603" y="729.8" width="9.700" height="14.0" rx="1.5" fill="url(#gStep)" stroke="#555" stroke-width="0.6"/>
<path d="M605.5 735.15L607.8 732.55L610.0999999999999 735.15M605.5 738.3499999999999L607.8 740.9499999999999L610.0999999999999 738.3499999999999" fill="none" stroke="#333" stroke-width="1.1"/>
<text x="594.2" y="739.9" font-size="9.7" fill="#f6f6f6" text-anchor="end" font-weight="bold" letter-spacing="0" textLength="70.3" lengthAdjust="spacingAndGlyphs" xml:space="preserve" stroke="#f6f6f6" stroke-width="0.3">0:00:00:000</text>
<rect x="491" y="748" width="63.7" height="15.2" rx="1.5" fill="url(#gDisp)"/>
<rect x="544.7" y="748.5" width="9.700" height="14.7" rx="1.5" fill="url(#gStep)" stroke="#555" stroke-width="0.6"/>
<path d="M547.2 754.2L549.5 751.6L551.8 754.2M547.2 757.4L549.5 760.0L551.8 757.4" fill="none" stroke="#333" stroke-width="1.1"/>
<rect x="491.6" y="748.6" width="62.5" height="14.0" rx="2.5" fill="none" stroke="#46e012" stroke-width="1.3"/>
<text x="496" y="758.6" font-size="9.7" fill="#f6f6f6" font-weight="bold" letter-spacing="0" textLength="45" lengthAdjust="spacingAndGlyphs" xml:space="preserve" stroke="#f6f6f6" stroke-width="0.3">104.000</text>
<rect x="559" y="748" width="54" height="15.2" rx="1.5" fill="url(#gDisp)"/>
<rect x="603" y="748.5" width="9.700" height="14.7" rx="1.5" fill="url(#gStep)" stroke="#555" stroke-width="0.6"/>
<path d="M605.5 754.2L607.8 751.6L610.0999999999999 754.2M605.5 757.4L607.8 760.0L610.0999999999999 757.4" fill="none" stroke="#333" stroke-width="1.1"/>
<rect x="559.6" y="748.6" width="52.8" height="14.0" rx="2.5" fill="none" stroke="#46e012" stroke-width="1.3"/>
<text x="581.1" y="758.6" font-size="9.7" fill="#f6f6f6" text-anchor="middle" font-weight="bold" letter-spacing="0" textLength="18.6" lengthAdjust="spacingAndGlyphs" xml:space="preserve" stroke="#f6f6f6" stroke-width="0.3">6/4</text>
<rect x="620" y="710" width="223" height="53" fill="#8e8e8e"/>
<rect x="630" y="716.0" width="161" height="44.5" rx="1.5" fill="#000" fill-opacity="0.18"/>
<rect x="629.6" y="715.1" width="159.8" height="43.3" rx="1.3" fill="url(#gTall)" stroke="#484848" stroke-width="1.2"/>
<rect x="660.6" y="715" width="1" height="43.5" fill="#5a5a5a"/>
<rect x="661.6" y="715" width="1" height="43.5" fill="#f0f0f0"/>
<rect x="692.7" y="715" width="1" height="43.5" fill="#5a5a5a"/>
<rect x="693.7" y="715" width="1" height="43.5" fill="#f0f0f0"/>
<rect x="724.8" y="715" width="1" height="43.5" fill="#5a5a5a"/>
<rect x="725.8" y="715" width="1" height="43.5" fill="#f0f0f0"/>
<rect x="756.9" y="715" width="1" height="43.5" fill="#5a5a5a"/>
<rect x="757.9" y="715" width="1" height="43.5" fill="#f0f0f0"/>
<path d="M643 729.500L638 736L643 742.500M651 729.500L646 736L651 742.500" fill="none" stroke="#2e2e2e" stroke-width="2.5"/>
<path d="M670.500 729.500L675.500 736L670.500 742.500M678.500 729.500L683.500 736L678.500 742.500" fill="none" stroke="#2e2e2e" stroke-width="2.5"/>
<rect x="703" y="730" width="12.3" height="12" fill="#303030"/>
<path d="M736.700 729V743L747 736Z" fill="#303030"/>
<circle cx="773.5" cy="736" r="7" fill="#b00e08"/>
<rect x="796.5" y="715.0" width="19" height="13" rx="1.5" fill="url(#gBtn2)" stroke="#666"/>
<path d="M797.5 727.0V716.0H814.5" fill="none" stroke="#fff" stroke-opacity="0.85"/>
<rect x="815.5" y="715.0" width="18" height="13" rx="1.5" fill="url(#gBtn2)" stroke="#666"/>
<path d="M816.5 727.0V716.0H832.5" fill="none" stroke="#fff" stroke-opacity="0.85"/>
<path d="M802 721.500H810M806 717.500V725.500" stroke="#111" stroke-width="1.8"/>
<line x1="821.5" y1="724.5" x2="828" y2="718.5" stroke="#222" stroke-width="1.2" />
<text x="805" y="737.2" font-size="6.8" fill="#1c1c1c" text-anchor="middle" font-weight="bold" letter-spacing="0.4" textLength="14" lengthAdjust="spacingAndGlyphs">DUB</text>
<text x="824.5" y="737.2" font-size="6.8" fill="#1c1c1c" text-anchor="middle" font-weight="bold" letter-spacing="0.4" textLength="12.5" lengthAdjust="spacingAndGlyphs">ALT</text>
<rect x="796.5" y="745.0" width="37" height="13.5" rx="1.5" fill="url(#gBtn2)" stroke="#666"/>
<path d="M797.5 757.5V746.0H832.5" fill="none" stroke="#fff" stroke-opacity="0.85"/>
<text x="815.0" y="754.2" font-size="6.8" fill="#222" text-anchor="middle" font-weight="bold" letter-spacing="0.5" textLength="22" lengthAdjust="spacingAndGlyphs">Q REC</text>
<rect x="943.5" y="712.0" width="36" height="13" rx="1.5" fill="url(#gBtn2)" stroke="#666"/>
<path d="M944.5 724.0V713.0H978.5" fill="none" stroke="#fff" stroke-opacity="0.85"/>
<text x="961.5" y="720.95" font-size="6.8" fill="#222" text-anchor="middle" font-weight="bold" letter-spacing="0.5" textLength="18.5" lengthAdjust="spacingAndGlyphs">LOOP</text>
<rect x="851" y="729.3" width="113.5" height="14.5" rx="1.5" fill="url(#gDisp)"/>
<rect x="954.5" y="729.8" width="9.700" height="14.0" rx="1.5" fill="url(#gStep)" stroke="#555" stroke-width="0.6"/>
<path d="M957.0 735.15L959.3 732.55L961.5999999999999 735.15M957.0 738.3499999999999L959.3 740.9499999999999L961.5999999999999 738.3499999999999" fill="none" stroke="#333" stroke-width="1.1"/>
<text x="946.5" y="739.9" font-size="9.7" fill="#f6f6f6" text-anchor="end" font-weight="bold" letter-spacing="0" textLength="69.3" lengthAdjust="spacingAndGlyphs" xml:space="preserve" stroke="#f6f6f6" stroke-width="0.3">1.  1.  1.    0</text>
<rect x="851" y="747.3" width="113.5" height="14.5" rx="1.5" fill="url(#gDisp)"/>
<rect x="954.5" y="747.8" width="9.700" height="14.0" rx="1.5" fill="url(#gStep)" stroke="#555" stroke-width="0.6"/>
<path d="M957.0 753.15L959.3 750.55L961.5999999999999 753.15M957.0 756.3499999999999L959.3 758.9499999999999L961.5999999999999 756.3499999999999" fill="none" stroke="#333" stroke-width="1.1"/>
<text x="946.5" y="757.9" font-size="9.7" fill="#f6f6f6" text-anchor="end" font-weight="bold" letter-spacing="0" textLength="69.3" lengthAdjust="spacingAndGlyphs" xml:space="preserve" stroke="#f6f6f6" stroke-width="0.3">3.  5.  1.    0</text>
<rect x="966.5" y="730.0" width="13" height="13.5" rx="1.5" fill="url(#gBtn2)" stroke="#666"/>
<path d="M967.5 742.5V731.0H978.5" fill="none" stroke="#fff" stroke-opacity="0.85"/>
<text x="973.0" y="739.81" font-size="8.5" fill="#444" text-anchor="middle" font-weight="bold" letter-spacing="0">L</text>
<rect x="966.5" y="748.0" width="13" height="13.5" rx="1.5" fill="url(#gBtn2)" stroke="#666"/>
<path d="M967.5 760.5V749.0H978.5" fill="none" stroke="#fff" stroke-opacity="0.85"/>
<text x="973.0" y="757.81" font-size="8.5" fill="#444" text-anchor="middle" font-weight="bold" letter-spacing="0">R</text>
<rect x="987" y="711.5" width="28" height="53" rx="1.5" fill="#000" fill-opacity="0.18"/>
<rect x="986.6" y="710.6" width="26.8" height="51.8" rx="1.3" fill="url(#gTall)" stroke="#484848" stroke-width="1.2"/>
<path d="M1008.500 736A8.500 8.500 0 1 1 1005.200 728.800" fill="none" stroke="#585858" stroke-width="3"/>
<path d="M996.700 736.600L1007.500 727.700L1004 733.100H1010V736.600Z" fill="#585858"/>
</svg></body></html>
